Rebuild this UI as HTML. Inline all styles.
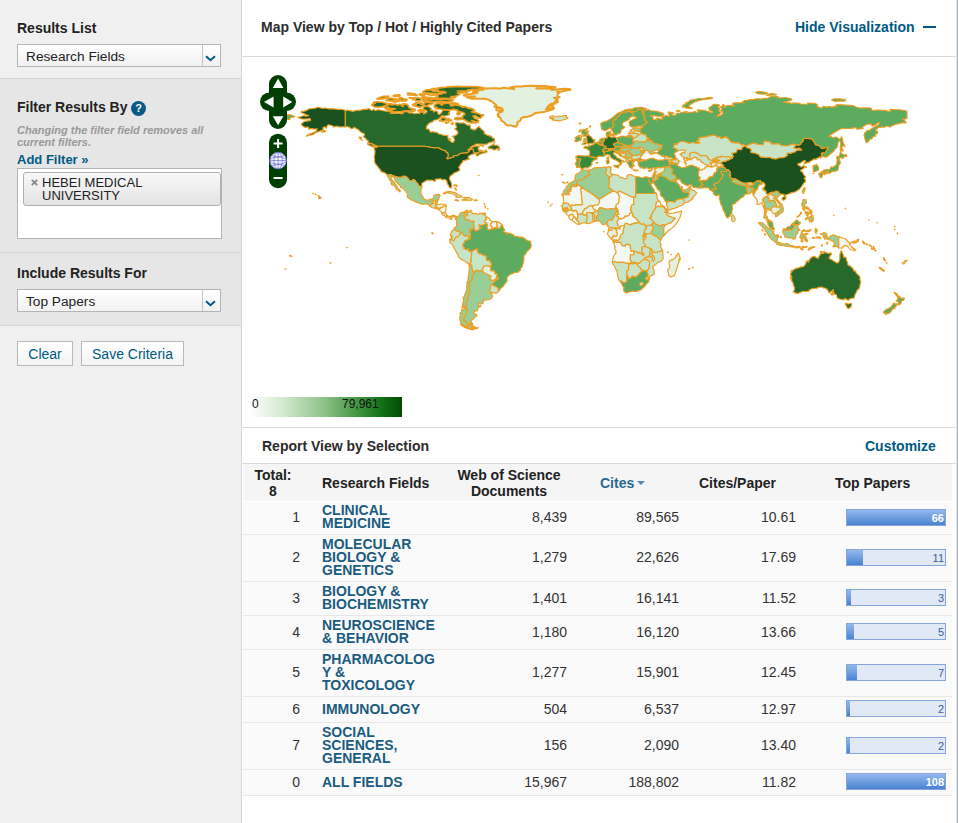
<!DOCTYPE html>
<html><head><meta charset="utf-8"><title>Essential Science Indicators</title>
<style>
*{box-sizing:border-box;margin:0;padding:0}
html,body{width:958px;height:823px;overflow:hidden;background:#fff}
body{font-family:"Liberation Sans",Arial,sans-serif;font-size:13px;color:#222;position:relative}
.abs{position:absolute}
#side{left:0;top:0;width:242px;height:823px;background:#f0f0f0;border-right:1px solid #d6d6d6}
.sec{position:absolute;left:0;width:241px}
.h{position:absolute;left:17px;font-weight:bold;font-size:14px;color:#222;white-space:nowrap;letter-spacing:0}
.sel{position:absolute;left:17px;width:204px;height:23px;border:1px solid #b4b4b4;background:linear-gradient(#ffffff,#f1f1f1);font-size:13.7px;line-height:23px;padding-left:8px;color:#222}
.sel i{position:absolute;right:0;top:0;width:18px;height:21px;border-left:1px solid #c4c4c4}
.sel svg{position:absolute;right:4px;top:9.5px}
.btn{position:absolute;height:25px;border:1px solid #b9b9b9;background:linear-gradient(#ffffff,#f4f4f4);color:#005a84;font-size:14px;line-height:24.5px;text-align:center}
#main{left:242px;top:0;width:716px;height:823px;background:#fff;border-right:1px solid #a9b0b5;box-shadow:inset -1px 0 0 #e4e7e9}
.t{position:absolute;font-weight:bold;font-size:13px;color:#2c2c2c;white-space:nowrap}
.lnk{color:#005a84}
.hl{position:absolute;left:242px;width:714px;height:1px;background:#dadada}
table{position:absolute;left:243px;top:464px;width:708px;border-collapse:collapse;font-size:13px;color:#333}
th{background:#f5f5f5;font-size:14px;font-weight:bold;color:#222;height:37px;line-height:16px;text-align:center;vertical-align:middle;padding:0}
td{border-bottom:1px solid #e3e3e3;vertical-align:middle;padding:0;font-size:14px}
tr.o td{background:#fafafa}
td.n{text-align:right;padding-right:0}
td.f{font-weight:bold;color:#1a5c80;line-height:13px;font-size:14px;letter-spacing:0.2px}
.bar{position:relative;width:100px;height:17px;background:#e1e7f5;border:1px solid #8aa9db;margin-left:12px}
.bar b{position:absolute;left:0;top:0;height:15px;background:linear-gradient(#8db4ea,#4f86d4)}
.bar span{position:absolute;right:2px;top:2px;font-size:11px;line-height:13px;color:#3b5a8c;font-weight:normal}
.bar span.w{color:#fff;font-weight:bold}
</style></head><body>
<div id="side" class="abs">
  <div class="sec" style="top:78px;height:175px;background:#e6e6e6;border-top:1px solid #d4d4d4;border-bottom:1px solid #d4d4d4"></div>
  <div class="sec" style="top:253px;height:73px;background:#e6e6e6;border-bottom:1px solid #d4d4d4"></div>
  <div class="h" style="top:20px">Results List</div>
  <div class="sel" style="top:44px">Research Fields<i></i><svg width="11" height="7" viewBox="0 0 11 7"><path d="M1 1.2 L5.5 5.2 L10 1.2" fill="none" stroke="#005a84" stroke-width="2"/></svg></div>
  <div class="h" style="top:99px">Filter Results By</div>
  <div class="abs" style="left:131px;top:101px;width:15px;height:15px;border-radius:50%;background:#0a5a87;color:#fff;font-size:11px;font-weight:bold;text-align:center;line-height:15px">?</div>
  <div class="abs" style="left:17px;top:124px;width:200px;font-size:11px;line-height:12px;font-style:italic;color:#999;font-weight:bold">Changing the filter field removes all current filters.</div>
  <div class="h lnk" style="top:152px;color:#005a84;font-size:13px;letter-spacing:0">Add Filter »</div>
  <div class="abs" style="left:17px;top:168px;width:205px;height:71px;background:#fff;border:1px solid #b4b4b4"></div>
  <div class="abs" style="left:23px;top:172px;width:198px;height:34px;border:1px solid #b0b0b0;border-radius:3px;background:linear-gradient(#f8f8f8,#e4e4e4);font-size:13px;line-height:13px;color:#222;padding:3px 0 0 18px">HEBEI MEDICAL UNIVERSITY<svg style="position:absolute;left:7px;top:6px" width="7" height="7" viewBox="0 0 7 7"><path d="M0.8 0.8 L6.2 6.2 M6.2 0.8 L0.8 6.2" stroke="#8a8a8a" stroke-width="1.9" fill="none"/></svg></div>
  <div class="h" style="top:265px">Include Results For</div>
  <div class="sel" style="top:289px">Top Papers<i></i><svg width="11" height="7" viewBox="0 0 11 7"><path d="M1 1.2 L5.5 5.2 L10 1.2" fill="none" stroke="#005a84" stroke-width="2"/></svg></div>
  <div class="btn" style="left:17px;top:341px;width:56px">Clear</div>
  <div class="btn" style="left:81px;top:341px;width:103px">Save Criteria</div>
</div>
<div id="main" class="abs"></div>
<div class="t" style="left:261px;top:19px;font-size:14px">Map View by Top / Hot / Highly Cited Papers</div>
<div class="t lnk" style="left:795px;top:19px;font-size:14px">Hide Visualization</div>
<div class="abs" style="left:923px;top:26px;width:13px;height:2px;background:#005a84"></div>
<div class="hl" style="top:56px"></div>
<svg class="abs" style="left:242px;top:57px" width="714" height="340" viewBox="242 57 714 340"><g stroke="#ec9e22" stroke-width="1.15" stroke-linejoin="round">
<path fill="#5cab5e" d="M646.4,110.3 648.2,109.7 651.1,110.7 655.9,111.1 662.5,113.1 663.9,113.9 664.0,115.1 662.0,116.0 659.2,116.5 651.4,115.2 650.1,115.4 652.9,116.7 653.0,117.5 653.1,119.3 655.4,119.8 656.8,120.3 657.0,119.4 655.9,118.7 657.1,118.0 661.3,119.1 662.8,118.7 661.6,117.4 665.7,115.7 667.3,115.8 668.9,116.4 669.9,115.2 668.5,114.1 669.3,113.1 668.0,112.0 672.9,112.6 673.9,113.5 671.7,113.8 671.7,114.7 673.1,115.3 675.8,115.0 676.2,113.8 679.9,113.0 686.0,111.5 687.3,111.6 685.6,112.6 687.8,112.8 689.0,112.2 692.3,112.2 694.9,111.5 696.9,112.5 698.9,111.4 697.1,110.3 698.0,109.8 703.1,110.3 705.6,110.8 711.9,112.8 713.1,111.9 711.3,111.0 711.2,110.6 709.1,110.5 709.7,109.6 708.8,108.3 708.7,107.7 711.9,106.1 713.1,104.5 714.4,104.2 719.0,104.6 719.4,105.6 717.7,107.0 718.8,107.6 719.4,108.8 719.0,111.2 720.9,112.3 720.2,113.5 716.7,115.9 718.7,116.2 719.4,115.6 721.4,115.1 721.8,114.3 723.3,113.4 722.3,112.4 723.1,111.3 721.2,111.1 720.8,110.1 722.2,108.4 719.9,107.0 723.1,105.8 722.7,104.5 723.5,104.5 724.4,105.5 723.8,107.2 725.6,107.5 724.8,106.2 727.8,105.5 731.4,105.4 734.6,106.4 733.1,105.0 732.9,103.1 735.9,102.8 740.2,102.8 743.9,102.6 742.5,101.7 744.5,100.5 746.6,100.5 750.0,99.6 754.6,99.4 755.2,98.9 759.8,98.8 761.2,99.1 765.1,98.2 768.3,98.2 768.8,97.5 770.5,96.7 774.6,96.0 777.6,96.6 775.2,97.0 779.2,97.3 779.7,98.2 781.3,97.7 786.4,97.8 790.3,98.6 791.7,99.3 791.3,100.2 789.4,100.7 784.8,101.7 783.5,102.2 785.6,102.4 788.2,102.9 789.8,102.5 790.7,103.7 791.4,103.2 794.2,102.9 799.9,103.2 800.3,104.0 807.6,104.3 807.7,103.0 811.4,103.3 814.2,103.3 817.0,104.2 817.8,105.3 816.8,106.0 819.0,107.4 821.8,108.1 823.4,106.3 826.3,107.1 829.2,106.6 832.6,107.1 833.9,106.6 836.8,106.9 835.5,105.3 837.8,104.5 853.6,105.6 855.1,106.7 859.7,108.0 866.8,107.7 870.2,108.0 871.7,108.7 871.5,110.0 873.6,110.5 876.0,110.1 879.1,110.1 882.4,110.4 885.7,110.2 888.8,111.8 890.9,111.2 889.5,110.1 890.3,109.3 895.9,109.8 899.5,109.7 904.5,110.5 907.0,111.3 907.0,118.3 904.7,119.1 902.5,118.9 904.0,119.9 905.1,121.3 905.9,121.8 906.1,122.5 905.7,123.0 902.4,122.6 897.5,123.9 895.9,124.1 893.3,125.3 890.7,126.4 890.1,127.2 887.6,126.0 883.0,127.4 882.2,126.7 880.5,127.5 878.2,127.2 877.6,128.4 875.5,130.1 875.6,130.8 877.6,131.2 877.4,133.7 875.7,133.8 875.0,135.2 875.7,136.0 872.6,136.9 872.0,138.9 869.4,139.3 868.9,141.1 866.4,142.7 865.7,141.5 865.0,139.0 864.0,135.1 864.8,132.7 866.3,131.6 866.4,130.8 869.1,130.4 872.3,128.2 875.3,126.4 878.4,125.0 879.8,122.5 877.7,122.7 876.7,124.1 872.2,126.1 870.8,123.9 866.3,124.5 861.9,127.4 863.3,128.5 859.4,129.0 856.7,129.1 856.8,127.9 854.1,127.6 851.9,128.5 846.6,128.2 840.8,128.7 835.2,132.1 828.5,136.2 831.2,136.4 832.1,137.5 833.8,137.9 834.9,137.1 836.8,137.2 839.4,139.1 839.4,140.6 838.0,142.3 837.9,144.4 837.1,147.2 834.5,149.8 833.9,151.0 831.5,153.0 829.2,155.0 828.0,156.1 825.7,157.1 824.6,157.1 823.5,156.3 821.1,157.5 820.9,158.1 820.6,157.8 820.6,156.9 821.5,156.9 821.8,154.8 821.3,153.3 822.8,152.7 824.9,153.0 826.1,151.3 826.7,149.4 827.4,148.7 828.3,147.2 825.4,147.7 823.9,148.4 821.2,148.4 820.5,146.7 818.5,145.5 815.4,144.9 814.8,143.2 814.1,142.1 813.5,141.4 812.4,139.6 810.9,139.0 808.2,138.4 805.9,138.5 803.8,138.8 802.3,139.7 803.3,140.1 803.3,141.1 800.7,143.5 800.8,144.3 798.3,145.4 796.2,144.7 794.1,144.8 793.2,144.3 792.1,144.1 789.6,145.3 787.3,145.6 785.7,146.0 783.5,145.7 781.8,145.8 780.8,144.9 779.1,144.0 777.3,143.8 775.1,144.0 773.4,144.3 771.0,143.6 770.6,142.3 768.6,141.8 767.0,141.6 765.0,140.9 763.2,142.7 763.9,143.8 762.2,145.0 759.7,144.5 757.9,144.5 756.8,143.7 754.9,143.6 753.4,143.1 750.7,143.9 747.4,145.4 745.6,145.7 744.9,145.9 744.0,144.8 741.7,145.0 741.0,144.3 739.7,144.0 738.9,142.9 737.9,142.6 735.4,143.1 733.0,142.1 732.1,143.0 728.1,138.6 725.9,137.2 726.6,136.6 722.2,138.3 720.5,138.4 720.6,137.4 718.4,136.8 716.6,137.3 716.0,135.5 712.9,135.1 711.3,135.8 706.9,136.4 706.1,136.9 699.5,137.5 698.7,138.1 700.0,139.3 698.3,139.7 698.6,140.2 696.9,141.1 699.8,142.3 699.3,143.1 696.9,143.0 696.4,143.5 694.1,142.6 691.4,142.7 689.5,143.4 687.4,142.7 683.6,141.5 680.8,141.5 677.2,143.4 677.0,144.7 675.2,143.7 673.8,145.6 674.3,146.0 673.3,147.3 674.8,148.5 676.1,148.5 677.2,149.6 677.0,150.5 677.9,150.8 677.1,151.8 675.4,152.1 673.7,153.9 675.3,155.6 675.1,156.8 677.0,158.8 676.0,159.5 675.7,160.0 674.9,159.9 673.7,158.8 673.2,158.7 672.1,158.3 671.6,157.6 669.9,157.3 668.9,157.5 668.6,157.2 666.2,156.4 663.6,156.1 662.1,155.8 661.9,156.0 659.7,154.5 657.7,153.8 656.2,152.8 657.5,152.6 658.9,151.1 657.9,150.4 660.5,149.7 660.5,149.3 658.9,149.6 659.0,148.8 659.8,148.3 661.5,148.2 661.8,147.6 661.4,146.6 662.1,145.7 662.1,145.2 659.5,144.6 658.5,144.6 657.4,143.8 656.1,144.1 653.9,143.5 653.9,143.2 653.3,142.4 651.9,142.3 651.7,141.8 652.2,141.4 651.1,140.4 649.3,140.6 648.7,140.5 648.3,140.9 647.6,140.8 647.2,139.7 646.8,139.1 647.1,139.0 648.5,139.0 649.2,138.6 648.7,138.2 647.5,137.9 647.6,137.6 646.9,137.2 645.8,136.1 646.2,135.6 646.0,134.8 644.3,134.4 643.4,134.6 643.2,134.1 641.3,133.7 640.8,132.7 640.6,131.8 639.8,131.4 640.5,130.9 640.0,129.2 641.2,128.2 641.0,127.9 643.0,126.9 641.1,126.1 644.9,123.9 646.5,122.9 647.2,122.0 644.6,120.8 645.3,119.6 643.7,118.3 644.9,116.8 642.8,114.9 644.5,113.5 641.8,112.4 642.0,111.1 643.5,111.0Z"/>
<path fill="#5cab5e" d="M285.9,114.4 285.7,115.5 286.9,115.9 286.5,114.6 291.2,114.9 294.7,116.5 292.9,117.3 290.1,117.5 290.0,119.2 289.3,119.6 287.7,119.5 286.4,118.9 285.4,118.2 285.1,116.5Z"/>
<path fill="#5cab5e" d="M689.3,106.9 692.6,108.3 691.6,108.5 686.0,108.1 685.5,107.4 682.3,106.9 682.1,106.0 683.9,105.6 683.7,104.6 687.2,103.2 685.6,102.9 689.8,101.5 689.3,100.6 693.3,99.7 699.1,98.5 704.9,98.3 707.9,97.6 711.4,97.4 712.6,98.1 711.4,98.7 705.0,99.5 699.8,100.2 694.4,102.0 691.8,103.7 689.0,105.3Z"/>
<path fill="#5cab5e" d="M766.8,93.9 763.1,94.1 758.2,93.8 756.5,93.0 755.6,92.2 758.2,91.5 762.6,91.7 767.4,92.7Z"/>
<path fill="#5cab5e" d="M775.9,95.0 766.6,95.5 769.3,93.8 771.9,93.6 776.5,94.3Z"/>
<path fill="#5cab5e" d="M834.9,98.8 839.6,98.8 845.9,99.7 844.5,101.1 838.0,101.0 835.2,101.5 831.7,100.2 832.6,99.2Z"/>
<path fill="#5cab5e" d="M843.4,143.2 845.1,146.3 842.5,145.7 841.5,148.2 843.2,150.0 843.1,151.3 841.8,150.2 840.7,151.6 840.3,150.1 840.5,148.4 840.3,146.5 840.7,145.2 840.8,142.8 839.8,141.1 839.9,138.7 841.6,137.9 840.9,137.1 841.6,136.9 842.1,138.0 842.7,139.7 842.7,141.4Z"/>
<path fill="#5cab5e" d="M676.5,110.7 678.6,110.4 680.0,111.1 678.3,111.8 676.7,111.4Z"/>
<path fill="#27692a" d="M345.2,110.2 348.8,110.4 353.1,111.4 356.6,110.2 359.4,110.4 364.8,109.1 367.3,109.5 367.8,108.6 369.0,108.8 371.9,110.4 374.3,109.1 374.5,110.5 376.6,110.2 377.3,109.7 379.4,109.9 382.2,110.5 386.2,111.2 388.6,111.6 390.4,111.4 392.7,112.3 390.2,113.2 393.4,113.5 398.1,113.4 399.7,113.0 401.4,114.0 403.4,113.2 401.6,112.5 402.6,111.8 404.9,111.8 406.1,111.6 407.7,112.0 409.5,113.0 411.4,112.8 414.4,113.7 417.2,113.4 419.8,113.4 419.5,112.3 421.0,112.0 423.8,112.6 423.8,114.2 424.9,112.8 426.3,112.8 427.1,111.1 425.2,110.0 423.1,109.3 423.3,107.4 425.4,106.2 427.7,106.4 429.4,107.2 431.9,109.1 430.3,110.0 433.6,110.4 433.5,112.1 435.9,110.7 438.0,112.0 437.5,113.2 439.0,114.4 441.0,113.2 442.2,111.6 442.4,109.7 444.8,109.9 447.5,110.0 449.7,110.9 449.9,111.8 448.5,112.8 449.7,113.7 449.5,114.6 446.2,115.8 443.8,116.0 441.9,115.5 441.3,116.3 439.8,117.9 439.2,118.6 437.1,119.8 434.7,120.0 433.3,120.7 433.1,121.8 431.2,122.1 428.9,123.5 427.1,125.4 426.5,126.8 426.3,128.9 428.9,129.1 429.6,130.9 430.5,132.1 432.9,131.7 436.2,132.4 438.0,133.1 439.2,134.0 441.3,134.5 443.2,135.2 446.0,135.4 448.0,135.6 447.8,137.0 448.3,138.7 449.5,140.6 452.2,142.4 453.6,141.9 454.5,139.9 453.6,137.3 452.4,136.3 455.1,135.6 457.1,134.4 458.1,133.1 458.0,131.9 456.7,130.3 454.6,129.1 456.7,127.2 455.9,125.6 455.3,123.0 456.5,122.5 459.5,123.0 461.3,123.1 462.9,122.8 464.4,123.3 466.5,124.4 467.0,125.1 470.2,125.1 470.2,126.6 470.7,128.8 472.3,129.1 473.7,130.1 476.1,129.1 477.9,127.2 479.0,126.5 480.4,128.1 482.6,130.1 484.6,132.2 483.9,133.5 486.1,134.4 487.7,135.4 491.7,136.4 492.2,137.9 493.6,138.2 494.4,138.7 494.5,140.8 493.3,141.4 492.1,142.1 489.1,142.6 487.0,144.1 484.0,144.3 480.2,144.0 477.5,144.0 475.8,144.1 474.4,145.4 472.1,146.1 469.5,148.5 467.6,150.1 469.0,149.8 471.8,147.5 475.5,146.1 478.1,145.9 479.6,146.8 478.1,147.8 478.6,149.8 479.1,151.1 481.4,152.0 484.4,151.7 486.1,149.8 486.3,151.0 487.4,151.7 485.2,152.7 481.2,153.8 479.6,154.5 477.5,155.9 476.3,155.7 476.1,154.1 479.3,152.7 476.5,152.7 474.6,153.1 473.4,152.0 473.4,149.6 470.9,149.1 469.5,150.4 469.0,151.7 467.0,152.9 461.3,153.2 458.5,154.6 457.6,155.7 454.3,155.7 453.4,156.1 453.8,156.9 451.6,157.8 449.7,158.1 447.6,159.0 446.6,158.3 447.8,156.8 448.3,155.7 447.6,152.7 445.7,151.9 445.9,151.3 444.8,150.6 443.6,150.4 440.6,148.9 437.3,147.5 435.7,148.0 433.1,147.6 431.0,147.5 429.2,146.9 426.5,146.8 425.4,146.2 376.8,146.2 376.4,145.7 373.4,144.5 372.2,143.8 369.0,143.1 368.0,141.5 368.2,140.5 366.1,139.6 365.7,138.2 363.6,137.0 363.6,136.1 364.5,135.2 364.3,133.8 361.0,132.2 358.5,129.8 355.8,128.2 354.9,127.4 351.4,128.8 348.8,127.0 345.2,126.5Z"/>
<path fill="#1b511e" d="M373.8,147.3 374.8,150.3 375.0,151.1 374.8,153.9 374.1,157.1 374.6,158.7 374.5,161.5 375.4,163.8 376.9,165.5 377.6,166.4 378.7,167.9 380.8,170.4 381.0,171.6 383.4,172.3 384.8,172.9 386.7,174.2 387.1,175.1 391.3,174.8 391.1,175.1 397.8,177.2 402.6,177.2 402.6,176.3 405.6,176.3 408.2,178.4 409.1,180.2 411.6,181.2 412.8,179.8 414.5,179.8 416.5,182.5 417.9,183.9 418.6,185.8 421.5,186.7 421.9,184.8 421.9,183.3 424.0,181.9 426.3,180.6 427.9,180.0 430.1,180.4 431.7,180.0 434.1,181.1 435.5,181.2 435.5,180.4 435.2,179.2 438.0,179.0 440.6,178.8 442.7,180.0 445.0,179.3 446.9,181.1 447.3,183.5 448.5,185.4 449.0,186.7 450.1,187.9 451.3,187.9 451.8,185.1 451.0,182.1 449.7,179.5 449.4,178.3 450.2,176.0 452.2,174.8 453.9,173.0 455.7,172.5 458.1,171.3 459.9,170.2 459.2,168.1 458.5,167.2 459.2,166.9 460.4,164.8 460.9,163.8 462.5,162.5 462.5,161.1 465.6,160.1 467.6,159.4 469.5,159.0 468.5,158.0 468.1,156.9 469.1,155.7 471.4,154.5 474.8,153.6 474.6,153.1 473.4,152.0 473.4,149.6 470.9,149.1 469.5,150.4 469.0,151.7 467.0,152.9 461.3,153.2 458.5,154.6 457.6,155.7 454.3,155.7 453.4,156.1 453.8,156.9 451.6,157.8 449.7,158.1 447.6,159.0 446.6,158.3 447.8,156.8 448.3,155.7 447.6,152.7 445.7,151.9 445.9,151.3 444.8,150.6 443.6,150.4 440.6,148.9 437.3,147.5 435.7,148.0 433.1,147.6 431.0,147.5 429.2,146.9 426.5,146.8 425.4,146.2 376.8,146.2 377.1,147.5Z"/>
<path fill="#1b511e" d="M345.2,110.2 340.9,109.3 337.0,109.3 333.0,108.8 328.3,108.8 325.7,108.1 322.0,108.3 317.9,107.2 315.5,108.1 310.4,108.8 308.5,109.1 306.8,110.4 303.4,111.4 301.2,111.4 301.2,112.6 304.3,113.7 305.5,114.6 308.7,115.6 305.5,116.3 304.1,115.5 300.8,116.7 297.8,117.2 300.6,118.8 303.8,119.1 307.1,119.0 310.2,118.6 310.6,120.4 308.0,120.9 305.3,121.4 303.9,121.6 303.2,122.6 302.0,123.3 301.3,124.4 302.7,126.1 305.3,127.4 307.6,127.0 308.7,127.7 308.5,129.3 311.3,128.6 314.6,129.1 317.2,128.9 316.2,131.2 314.6,131.9 312.0,133.3 308.8,134.2 306.6,135.8 306.2,136.1 309.9,135.1 312.7,134.7 315.3,133.1 318.5,131.6 320.2,131.0 322.2,130.3 323.7,128.9 322.5,128.1 324.9,126.8 326.5,128.4 327.1,125.8 328.4,124.7 332.7,125.8 333.0,127.0 336.5,126.1 340.0,127.0 342.5,126.8 345.2,127.0 345.2,126.5Z"/>
<path fill="#1b511e" d="M321.3,131.7 324.2,132.1 325.8,131.2 324.4,130.5 322.7,130.9Z"/>
<path fill="#27692a" d="M375.9,147.1 372.0,146.6 369.9,145.4 367.8,144.5 367.3,143.1 369.2,143.4 371.9,144.0 373.4,145.4 375.2,146.1Z"/>
<path fill="#27692a" d="M362.4,140.6 359.8,138.6 359.1,137.1 361.3,137.3 361.0,139.2Z"/>
<path fill="#27692a" d="M493.8,143.3 494.9,141.7 494.4,142.2 492.6,144.9 489.8,146.1 488.4,147.1 488.1,148.2 488.8,148.7 491.7,148.7 494.2,149.9 495.2,149.9 497.1,148.4 498.4,150.4 499.1,150.3 498.4,148.7 499.9,148.9 499.1,146.8 498.4,145.9 496.6,145.2 494.4,145.2 493.8,144.1Z"/>
<path fill="#27692a" d="M480.0,149.8 480.5,150.4 481.9,150.8 483.5,150.8 482.6,151.5 481.1,151.5 479.3,150.3Z"/>
<path fill="#27692a" d="M479.1,144.7 481.9,145.0 483.9,145.7 483.0,146.1 480.7,145.6Z"/>
<path fill="#e2f1e0" d="M516.0,126.8 513.2,126.0 511.0,125.4 507.5,125.4 505.9,124.5 504.7,122.8 501.7,120.7 500.8,119.5 500.5,117.9 498.0,116.3 498.7,115.1 497.5,114.4 499.2,112.3 501.9,111.8 502.6,111.1 502.9,109.7 501.0,110.2 499.9,110.5 498.4,110.7 496.3,110.2 496.2,109.0 496.8,108.1 498.6,108.1 502.1,108.5 499.1,107.4 497.5,106.9 495.8,107.0 494.4,106.5 496.3,105.0 495.2,104.2 493.8,103.2 491.7,101.3 489.4,100.6 489.4,99.9 484.7,98.8 481.1,98.7 476.3,98.8 472.1,98.8 470.0,98.3 467.0,97.2 471.6,96.7 475.1,96.5 467.8,96.2 463.7,95.5 463.9,94.8 470.5,93.9 477.0,93.0 477.7,92.3 473.0,91.8 474.4,91.1 480.5,89.9 483.1,89.7 482.3,88.8 486.5,88.5 491.9,88.2 497.3,88.2 499.2,88.7 503.8,87.8 508.0,88.3 510.4,88.5 514.1,89.0 509.9,88.2 510.1,87.5 516.0,86.4 522.2,86.4 524.5,85.9 530.6,85.7 544.6,85.9 555.6,87.3 552.3,88.0 545.6,88.0 536.2,88.2 537.0,88.5 543.2,88.3 548.6,88.8 551.9,88.3 553.3,89.0 551.4,89.9 556.0,89.4 564.4,88.7 569.6,89.0 570.6,89.7 563.5,91.0 562.5,91.4 557.0,91.7 561.0,91.8 558.9,93.0 557.5,94.2 557.5,96.2 559.6,97.2 557.0,97.4 554.0,98.0 557.4,98.8 557.7,100.4 555.8,100.4 558.0,102.0 554.2,102.2 556.3,102.8 555.6,103.4 553.1,103.7 550.7,103.7 553.0,105.0 553.0,105.6 549.5,105.0 548.6,105.5 551.0,105.8 553.3,106.9 553.9,108.3 550.9,108.6 549.5,107.9 547.4,107.0 547.9,108.2 545.8,109.1 550.5,109.1 553.0,109.3 548.2,110.7 543.5,112.1 538.3,112.8 536.4,112.8 534.6,113.5 532.1,115.3 528.4,116.5 527.2,116.7 524.8,117.0 522.4,117.4 520.8,118.6 520.8,119.8 519.9,120.9 517.1,122.3 517.8,123.7 516.9,125.1Z" stroke-width="2.0"/>
<path fill="#27692a" d="M483.7,114.9 480.2,118.2 478.1,117.5 475.3,115.8 473.0,116.0 474.6,118.1 477.0,119.0 478.8,121.0 478.2,122.3 476.0,121.9 471.6,120.5 476.0,123.0 471.4,123.0 467.8,121.9 465.6,121.0 466.2,120.5 461.1,118.8 461.1,119.3 456.0,119.6 454.5,119.0 455.7,117.7 459.0,117.7 462.5,117.4 462.0,116.9 462.7,116.0 464.8,114.2 464.4,113.5 463.7,112.8 461.1,112.0 457.4,111.4 458.6,111.1 456.7,109.9 455.1,109.9 453.8,109.1 452.9,109.7 449.7,110.0 443.4,109.5 439.6,109.0 436.8,108.8 435.4,108.1 437.1,107.4 434.7,107.4 434.1,105.6 435.5,104.1 437.3,103.4 441.9,102.8 440.5,103.9 441.9,105.1 443.4,103.7 448.0,102.8 451.0,104.8 450.8,105.8 454.1,105.3 455.9,104.8 459.7,105.6 462.1,106.4 462.3,107.2 465.6,106.7 467.4,107.9 471.6,108.6 473.2,109.3 474.8,110.9 471.6,111.8 475.8,112.8 478.4,113.4 481.1,114.9Z" stroke-width="1.7"/>
<path fill="#27692a" d="M407.4,111.1 412.8,111.6 415.1,110.2 412.3,110.4 413.3,111.1 412.8,111.6 409.6,111.4 406.6,110.9 404.6,111.1 401.2,111.6 393.7,112.1 392.7,111.2 390.4,110.7 388.8,110.9 386.7,109.5 387.8,109.3 390.6,109.1 393.0,109.1 395.3,108.8 391.8,108.5 388.1,108.6 385.7,108.6 384.8,107.9 388.8,107.2 386.0,107.2 383.0,106.7 384.5,105.5 385.7,104.8 390.4,103.7 392.1,104.1 391.3,104.8 395.3,104.2 397.6,105.1 399.7,104.2 401.2,105.0 402.6,106.5 403.5,105.8 402.3,104.1 403.9,103.9 405.6,104.1 407.5,104.8 408.6,106.5 409.1,107.8 412.1,108.6 415.2,109.5 415.1,110.2 412.3,110.4Z" stroke-width="1.7"/>
<path fill="#27692a" d="M373.2,106.0 375.7,107.2 381.1,107.0 383.4,106.2 389.9,104.1 387.6,103.9 383.4,102.5 381.1,102.0 379.4,101.8 373.6,102.0 373.4,103.0 375.2,103.0 371.7,104.8Z" stroke-width="1.7"/>
<path fill="#27692a" d="M434.5,98.3 438.4,98.3 443.2,98.3 448.5,98.5 455.5,97.4 451.0,96.7 454.8,96.4 458.5,95.2 460.0,93.4 457.4,93.2 463.9,92.7 467.4,92.3 462.7,91.1 457.4,91.0 470.4,91.0 467.4,90.2 473.0,89.4 477.4,89.4 473.4,90.4 479.5,88.7 483.7,87.5 483.1,87.8 478.8,86.9 472.1,86.6 462.9,86.6 457.2,86.4 453.2,86.6 447.8,86.9 444.5,87.5 439.8,88.0 442.4,87.4 436.2,88.3 431.7,88.7 434.3,89.2 438.4,90.2 435.5,91.1 439.8,91.5 444.6,91.7 446.0,92.7 439.9,93.2 441.9,93.8 439.4,93.8 436.2,95.0 438.1,95.7 437.5,96.9 435.2,97.3Z" stroke-width="1.7"/>
<path fill="#27692a" d="M423.1,92.5 425.2,93.8 429.4,95.0 436.2,95.0 439.4,93.8 433.1,95.2 429.4,95.0 427.7,93.6 429.1,93.0 425.8,93.0 423.8,92.5 422.8,91.7 424.0,91.0 425.2,90.4 427.0,90.2 426.3,89.9 430.3,89.7 432.6,90.8 435.4,91.1 438.4,91.5 439.8,92.5 441.9,93.2 439.4,93.8Z" stroke-width="1.7"/>
<path fill="#27692a" d="M424.0,100.0 425.9,99.7 427.5,100.2 428.2,100.8 430.3,101.1 433.6,101.5 437.6,101.8 443.6,101.8 448.1,101.6 451.1,101.3 452.4,100.9 451.1,100.2 453.4,99.9 450.1,99.5 447.1,99.3 443.6,99.5 440.8,99.9 437.6,99.7 435.9,99.7 434.9,99.0 431.7,97.6 427.7,97.6 424.0,98.3 422.1,97.6 422.8,96.9 426.3,97.1 428.2,97.6 431.7,97.6 434.9,99.0 431.0,99.2 427.7,98.5 424.1,98.3 422.1,98.7 422.8,99.2Z" stroke-width="1.7"/>
<path fill="#27692a" d="M386.0,100.4 388.5,98.7 390.0,98.1 395.0,98.8 398.1,99.9 401.1,99.9 398.6,98.3 400.2,97.6 402.1,97.8 402.6,98.7 403.4,99.3 404.9,99.0 406.7,99.0 407.0,99.9 406.0,100.8 400.0,100.9 395.6,101.8 393.0,101.8 392.7,101.3 396.4,100.4 388.5,100.8Z" stroke-width="1.7"/>
<path fill="#27692a" d="M376.9,98.8 379.9,97.4 383.6,96.4 386.2,96.4 388.6,96.2 388.5,97.4 387.1,98.1 385.5,98.1 382.2,98.8 379.4,99.2Z" stroke-width="1.7"/>
<path fill="#27692a" d="M409.1,97.8 419.5,98.0 421.0,98.5 421.0,99.5 420.1,100.8 417.4,100.9 415.4,100.6 415.4,99.7 412.6,99.7 412.5,98.5 409.1,97.8Z" stroke-width="1.7"/>
<path fill="#27692a" d="M416.3,102.8 418.4,103.2 421.5,102.8 422.1,103.4 420.3,104.2 423.1,105.0 422.8,106.5 419.8,107.2 418.2,107.0 417.0,106.5 412.6,105.1 412.6,104.6 416.3,104.8 414.4,103.5Z" stroke-width="1.7"/>
<path fill="#27692a" d="M428.9,104.6 427.0,106.0 425.0,105.8 424.0,104.4 424.0,103.5 424.9,102.7 426.6,102.3 430.3,102.3 433.6,102.7 431.0,104.3Z" stroke-width="1.7"/>
<path fill="#27692a" d="M419.5,110.0 420.1,109.3 421.9,109.7 423.0,110.0 424.7,111.1 423.5,111.6 421.2,111.1 419.8,111.2 417.4,110.5Z" stroke-width="1.7"/>
<path fill="#27692a" d="M442.9,117.0 443.3,117.9 444.1,117.5 445.2,118.1 447.1,118.6 449.2,119.1 449.2,120.0 450.6,119.8 451.8,120.5 450.2,121.0 447.6,120.5 446.6,119.8 444.8,120.7 442.4,121.6 441.7,120.7 439.4,120.9 440.8,120.0 441.1,118.6 441.7,117.0Z" stroke-width="1.7"/>
<path fill="#27692a" d="M407.4,93.2 410.9,93.4 415.6,94.1 416.8,95.0 417.5,95.7 414.7,95.5 411.9,95.0 407.9,94.8 409.6,94.3 407.5,93.9Z" stroke-width="1.7"/>
<path fill="#27692a" d="M419.5,94.6 419.5,93.9 421.7,94.1 422.6,94.1 424.7,94.8 424.4,95.3 421.7,95.7 420.3,95.3Z" stroke-width="1.7"/>
<path fill="#27692a" d="M422.6,100.8 425.9,99.7 428.2,100.8 427.1,101.5 424.7,101.3Z" stroke-width="1.7"/>
<path fill="#27692a" d="M393.4,95.5 399.5,94.8 400.0,95.7 395.8,96.5 393.4,96.0Z" stroke-width="1.7"/>
<path fill="#27692a" d="M397.2,95.2 399.7,95.5 399.1,96.0 395.8,96.5 393.4,96.0 394.8,95.3Z" stroke-width="1.7"/>
<path fill="#27692a" d="M450.4,103.7 451.3,102.8 455.3,103.0 458.5,104.1 458.5,104.6 456.7,104.4 454.8,104.4 452.9,104.8 452.4,104.6Z" stroke-width="1.7"/>
<path fill="#27692a" d="M446.8,123.1 448.7,121.9 448.7,122.3 446.6,123.1 445.4,123.1 446.2,121.9Z" stroke-width="1.7"/>
<path fill="#27692a" d="M448.7,138.9 450.6,139.8 449.5,138.9Z" stroke-width="1.7"/>
<path fill="#27692a" d="M457.4,114.6 459.2,114.6 460.4,114.0 459.2,112.5 457.4,112.8 456.9,113.7Z" stroke-width="1.7"/>
<path fill="#27692a" d="M452.2,122.8 452.9,122.8 453.2,123.1 452.5,124.2 451.8,124.0 451.3,123.5Z" stroke-width="1.7"/>
<path fill="#c7e4c6" d="M566.6,115.6 566.3,116.9 568.2,118.1 565.9,119.3 560.9,120.5 559.3,120.9 552.1,120.0 553.9,119.3 550.0,118.4 553.1,118.1 553.1,117.5 549.5,117.2 550.5,116.0 553.3,115.8 556.0,117.0 558.6,116.0 560.9,116.5 563.6,115.6Z"/>
<path fill="#99cf97" d="M387.1,175.1 387.8,176.7 389.0,178.1 389.5,180.0 391.5,181.8 392.1,182.8 390.8,183.3 391.6,184.6 393.4,185.1 394.6,186.0 395.6,187.4 396.0,188.8 397.9,190.0 399.1,191.4 399.7,191.9 400.5,191.1 399.1,189.5 398.3,188.6 397.2,187.0 396.7,185.3 394.6,183.3 394.6,182.1 393.2,181.1 392.1,179.8 391.3,179.2 391.1,176.3 394.1,177.4 395.5,180.7 397.4,183.2 399.9,185.3 400.7,187.2 403.0,188.4 404.9,190.3 406.5,192.1 407.7,195.1 407.4,196.1 407.0,196.3 407.5,197.2 410.0,198.9 410.9,200.0 413.7,200.7 415.6,201.9 417.5,202.8 418.9,202.9 421.7,204.2 423.8,204.3 426.3,203.7 428.5,204.7 430.6,206.6 430.6,205.2 431.5,203.8 433.6,203.8 433.8,203.3 431.9,201.7 432.8,201.7 432.8,200.8 434.3,200.8 436.1,200.8 436.1,200.5 437.5,199.6 438.4,200.0 439.0,197.9 440.1,195.6 439.6,194.4 437.1,194.4 434.0,195.2 433.6,197.2 433.1,198.2 432.0,198.9 429.6,199.6 426.8,200.3 424.2,199.1 423.1,197.2 421.9,195.9 420.9,192.8 421.0,189.5 422.1,186.7 421.5,186.7 418.6,185.8 417.9,183.9 416.5,182.5 414.5,179.8 412.8,179.8 411.6,181.2 409.1,180.2 408.2,178.4 405.6,176.3 402.6,176.3 402.6,177.2 397.8,177.2 391.1,175.1 391.3,174.8Z"/>
<path fill="#c7e4c6" d="M430.6,206.6 430.6,205.2 431.5,203.8 433.6,203.8 433.8,203.3 431.9,201.7 432.8,201.7 432.8,200.8 436.1,200.8 435.9,204.2 436.4,204.2 437.6,204.5 435.9,205.6 435.9,206.3 435.5,206.8 434.3,208.0 432.4,207.7Z"/>
<path fill="#c7e4c6" d="M436.1,200.8 436.1,200.5 437.5,199.6 437.8,200.3 437.5,201.2 437.6,202.2 436.4,204.2 435.9,204.2Z"/>
<path fill="#c7e4c6" d="M434.3,208.0 435.5,206.8 435.9,206.3 437.1,207.5 438.5,207.8 438.2,209.0 437.1,208.9 435.7,208.4Z"/>
<path fill="#e2f1e0" d="M437.6,204.5 439.9,204.3 441.5,204.0 442.5,204.2 444.3,204.3 446.0,205.2 446.5,205.8 445.9,205.8 444.3,206.3 443.4,206.1 443.1,206.5 441.9,207.8 441.3,207.5 440.1,207.8 440.3,208.7 439.2,209.2 438.9,208.7 438.4,208.6 438.5,207.8 437.1,207.5 435.9,206.3 435.9,205.6Z"/>
<path fill="#f4f8f3" d="M438.5,209.4 439.2,209.2 440.3,208.7 440.1,207.8 441.3,207.5 441.9,207.8 443.1,206.5 443.4,206.1 444.3,206.3 445.9,205.8 446.5,205.8 445.9,208.2 445.9,210.3 445.5,211.7 445.6,212.9 443.8,212.6 442.0,212.6 440.6,211.3 439.4,210.1Z"/>
<path fill="#c7e4c6" d="M442.0,212.6 443.8,212.6 445.6,212.9 446.8,215.4 446.9,216.1 446.8,217.7 445.5,216.8 444.0,215.2 443.1,215.2 442.0,214.7 441.9,213.8Z"/>
<path fill="#c7e4c6" d="M446.8,215.4 448.1,215.9 449.5,216.6 451.3,216.1 452.7,215.2 454.6,215.6 456.5,216.8 456.4,217.1 456.9,218.2 455.7,219.4 455.1,217.5 454.5,216.8 453.6,216.2 452.4,216.9 451.1,217.8 452.0,218.9 450.4,219.4 449.0,217.8 447.1,217.5 446.8,217.7 446.9,216.1Z"/>
<path fill="#c7e4c6" d="M443.4,193.7 445.0,192.3 446.8,191.8 448.0,191.4 449.5,191.6 451.0,191.6 452.5,192.1 455.0,192.6 457.1,194.0 458.6,194.9 459.7,195.2 460.9,195.8 462.1,196.5 462.0,196.9 459.7,197.2 455.9,197.2 457.1,196.3 456.4,195.8 455.3,195.8 454.3,194.2 453.2,194.2 451.6,193.8 448.9,193.2 448.1,192.8 448.9,192.4 447.1,192.3 445.9,193.2 445.0,193.7 444.1,193.8Z"/>
<path fill="#f4f8f3" d="M461.6,200.0 463.4,200.2 464.8,200.3 466.5,200.5 466.5,199.1 466.5,197.5 464.6,197.2 463.5,197.5 464.6,198.6 465.5,199.3 463.5,199.6Z"/>
<path fill="#c7e4c6" d="M466.5,200.5 467.8,200.0 469.5,200.2 471.8,200.2 472.5,199.4 470.9,198.8 469.6,197.6 468.1,197.2 466.5,197.5 466.5,199.1Z"/>
<path fill="#f4f8f3" d="M455.0,200.2 455.9,199.6 457.4,199.8 458.6,200.7 456.9,201.0Z"/>
<path fill="#f4f8f3" d="M474.4,199.8 477.2,200.0 477.2,200.5 474.4,200.7Z"/>
<path fill="#f4f8f3" d="M455.1,187.9 455.7,187.9 456.4,189.5 456.4,190.3 455.5,189.5 454.8,188.9Z"/>
<path fill="#f4f8f3" d="M455.9,185.4 453.9,185.8 453.8,185.1 454.6,184.9 455.7,185.1Z"/>
<path fill="#f4f8f3" d="M457.2,185.4 456.9,186.7 456.5,186.5 456.7,185.6 455.9,184.9 455.9,184.8Z"/>
<path fill="#f4f8f3" d="M484.0,213.1 485.4,213.1 485.2,214.3 483.7,214.3Z"/>
<path fill="#5cab5e" d="M498.6,291.1 498.1,290.1 498.9,289.2 497.9,288.1 496.4,287.1 494.7,286.0 494.1,286.1 492.3,284.7 491.2,284.9 493.5,282.5 495.4,280.8 498.1,279.1 498.2,277.7 497.3,276.7 496.4,277.0 496.8,276.1 497.0,275.1 497.0,274.0 496.4,273.6 495.8,274.0 495.1,273.9 494.9,273.3 494.7,271.7 494.4,271.2 493.1,270.7 492.4,271.0 490.7,270.7 490.7,268.2 490.1,267.4 490.8,266.9 490.6,265.9 491.1,265.2 491.4,263.9 491.0,262.7 490.0,262.3 489.8,261.6 490.1,260.5 486.6,260.5 486.1,258.4 486.6,258.4 486.5,257.6 486.1,256.1 485.1,255.6 484.0,255.6 483.3,255.1 482.1,254.8 481.4,254.1 479.5,253.9 477.5,252.3 477.7,251.1 477.5,249.1 475.4,249.3 474.4,250.0 472.9,250.7 472.5,251.2 471.6,251.3 470.4,251.2 469.3,251.4 468.5,251.2 468.6,248.6 467.2,249.7 465.6,249.6 465.0,248.6 463.9,248.6 464.2,247.8 463.2,246.7 462.5,245.1 463.0,244.8 463.0,244.1 464.1,243.6 463.9,242.7 464.3,242.0 464.4,241.3 466.4,240.1 467.9,239.7 468.1,239.4 469.7,239.5 470.5,234.7 470.5,233.9 470.2,233.0 469.5,232.3 469.5,231.1 470.5,230.8 470.8,230.9 470.9,230.3 469.9,230.1 469.9,229.0 473.2,229.0 473.9,228.5 474.2,229.0 474.6,230.0 474.9,229.8 476.0,230.8 477.4,230.6 477.6,230.1 479.6,229.4 479.8,228.7 481.1,228.2 481.1,227.8 479.5,227.6 479.3,226.6 479.3,225.3 478.6,224.9 479.0,224.7 480.2,225.0 481.6,225.3 482.1,225.0 483.3,224.7 485.2,224.1 485.9,223.4 485.8,222.9 486.6,222.8 487.0,223.2 486.8,224.0 487.4,224.3 487.9,225.1 487.4,225.7 487.1,227.2 487.5,228.1 487.6,228.8 488.8,229.7 489.6,229.8 489.8,229.4 490.3,229.4 491.0,229.0 491.7,228.6 492.6,228.7 493.1,228.7 494.0,228.8 494.2,228.5 493.9,228.2 494.1,227.6 494.8,227.8 495.6,227.6 496.6,228.0 497.3,228.3 497.9,227.8 498.3,228.0 498.6,228.4 499.4,228.3 500.0,227.6 500.6,226.4 501.6,224.7 502.2,224.7 502.6,225.6 503.6,228.7 504.6,229.0 504.6,230.2 503.3,231.7 503.8,232.1 506.9,232.4 506.9,234.2 508.4,233.0 510.4,233.6 513.4,234.7 514.3,235.7 514.0,236.7 516.0,236.2 519.4,237.1 522.0,237.0 524.6,238.5 526.9,240.4 528.2,240.9 529.7,241.0 530.4,241.6 530.9,243.7 531.3,244.8 530.6,247.8 529.7,248.9 527.2,251.3 526.0,253.3 524.8,254.8 524.3,254.9 523.8,256.1 523.9,259.5 523.2,263.3 522.7,264.0 522.4,266.3 520.6,268.6 520.4,270.3 518.9,271.2 518.5,272.2 516.6,272.2 513.9,272.9 512.6,273.6 510.6,274.2 508.6,275.6 507.1,277.3 506.9,278.6 507.1,279.6 506.8,281.4 506.4,282.2 505.2,283.1 503.3,286.2 501.7,287.6 500.5,288.4 499.8,290.1Z"/>
<path fill="#99cf97" d="M456.5,216.8 457.6,216.9 458.8,215.7 459.5,215.6 459.9,213.4 460.9,212.6 462.1,212.2 463.5,212.4 465.6,211.1 466.4,210.3 467.0,210.3 467.6,210.8 467.2,211.3 465.6,212.6 464.4,213.6 464.2,215.0 463.7,216.0 464.6,216.1 464.8,216.9 465.3,217.3 465.3,219.1 466.1,219.8 468.3,219.6 469.3,219.8 470.5,221.3 473.5,221.0 474.2,221.3 473.9,222.2 473.5,222.9 473.4,224.1 473.7,225.3 474.2,226.2 473.4,227.1 474.0,227.4 474.4,228.1 474.9,229.8 474.6,230.0 474.2,229.0 473.9,228.5 473.2,229.0 469.9,229.0 469.9,230.1 470.9,230.3 470.8,230.9 470.5,230.8 469.5,231.1 469.5,232.3 470.2,233.0 470.5,233.9 470.5,234.7 469.7,239.5 468.8,238.7 468.3,238.5 469.4,236.7 468.1,236.0 467.0,236.0 466.4,235.8 465.5,236.2 464.1,236.0 463.0,234.2 462.3,233.8 461.8,232.9 460.6,232.1 460.0,232.3 459.4,231.9 458.5,231.3 458.0,231.5 456.5,231.3 456.0,230.6 455.7,230.6 453.9,229.6 453.8,229.0 454.5,228.8 454.3,228.0 454.8,227.4 455.7,227.3 456.4,226.2 457.1,225.3 456.4,224.8 456.7,223.8 456.4,222.2 456.7,221.8 456.4,220.3 455.7,219.4 456.9,218.2 456.4,217.1Z"/>
<path fill="#c7e4c6" d="M467.2,211.3 466.1,212.1 466.7,212.8 466.7,213.8 465.8,214.7 466.5,216.1 467.2,216.1 467.8,214.7 467.0,214.2 467.0,212.8 469.1,212.1 469.0,211.3 469.7,210.7 470.2,211.9 471.4,212.1 472.6,212.9 472.6,213.5 474.2,213.6 476.1,213.4 477.0,214.2 478.4,214.3 479.5,213.8 479.5,213.4 483.7,213.3 482.3,213.8 482.8,214.7 484.2,214.7 485.6,215.6 485.8,216.9 486.7,216.9 487.4,217.3 486.0,218.3 485.9,219.1 486.5,219.8 486.1,220.0 485.0,220.3 485.0,221.2 484.6,221.6 485.8,222.9 485.9,223.4 485.2,224.1 483.3,224.7 482.1,225.0 481.6,225.3 480.2,225.0 479.0,224.7 478.6,224.9 479.3,225.3 479.3,226.6 479.5,227.6 481.1,227.8 481.1,228.2 479.8,228.7 479.6,229.4 477.6,230.1 477.4,230.6 476.0,230.8 474.9,229.8 474.4,228.1 474.0,227.4 473.4,227.1 474.2,226.2 473.7,225.3 473.4,224.1 473.5,222.9 473.9,222.2 474.2,221.3 473.5,221.0 470.5,221.3 469.3,219.8 468.3,219.6 466.1,219.8 465.3,219.1 465.3,217.3 464.8,216.9 464.6,216.1 463.7,216.0 464.2,215.0 464.4,213.6 465.6,212.6Z"/>
<path fill="#99cf97" d="M478.3,270.6 479.3,271.9 480.0,270.5 482.0,270.6 482.3,270.9 485.5,273.8 486.9,274.1 489.1,275.3 490.9,276.0 491.1,276.8 489.4,279.5 491.2,279.9 493.1,280.2 494.5,279.9 496.1,278.6 496.4,277.0 497.3,276.7 498.1,277.7 498.1,279.1 496.6,280.1 495.5,280.8 493.5,282.5 491.1,284.9 490.7,286.3 490.3,288.1 490.3,289.8 489.9,290.2 489.7,291.3 489.6,292.3 491.8,293.8 491.6,295.0 492.7,295.7 492.6,296.6 490.9,298.8 488.3,299.8 484.8,300.1 482.9,300.0 483.3,301.0 482.9,302.3 483.2,303.2 482.2,303.8 480.4,304.0 478.7,303.4 478.0,303.9 478.3,305.6 479.5,306.1 480.4,305.6 480.9,306.5 479.3,307.0 477.9,308.1 477.7,309.9 477.3,310.8 475.6,310.8 474.2,311.7 473.7,313.0 475.5,314.3 477.1,314.7 476.5,316.2 474.5,317.2 473.3,319.3 471.7,320.0 471.0,320.8 471.6,322.6 472.7,323.6 472.0,323.5 470.4,323.2 466.2,323.0 465.4,322.0 465.5,320.7 464.3,320.8 463.7,320.2 463.5,318.3 464.9,317.5 465.4,316.4 465.2,315.5 466.1,314.0 466.8,311.7 466.6,310.7 467.4,310.4 467.2,309.7 466.4,309.4 466.9,308.6 466.1,308.0 465.7,305.9 466.4,305.6 466.1,303.5 466.6,301.7 467.0,300.1 468.1,299.5 467.5,297.8 467.5,296.2 468.9,295.0 468.8,293.5 469.8,291.8 469.8,290.2 469.4,289.9 468.6,286.9 469.6,285.1 469.5,283.4 470.1,281.8 471.2,280.2 472.5,279.1 472.0,278.4 472.3,277.8 472.3,274.9 474.2,274.1 474.8,272.2 474.6,271.8 476.0,270.2Z"/>
<path fill="#99cf97" d="M471.9,324.1 472.6,324.9 473.4,326.2 475.7,327.3 478.2,327.7 477.4,328.6 475.7,328.7 474.8,328.1 473.8,328.0 471.9,328.0Z"/>
<path fill="#99cf97" d="M471.9,324.1 471.9,328.0 473.8,328.0 474.8,328.1 474.2,328.8 472.7,329.3 471.9,329.3 470.8,329.1 469.6,328.6 467.8,328.3 465.5,327.4 463.7,326.4 461.3,324.5 462.8,324.8 465.2,326.0 467.6,326.6 468.5,325.8 469.0,324.6 470.6,323.9Z" stroke-width="2.0"/>
<path fill="#99cf97" d="M470.2,262.8 471.1,264.0 471.3,265.2 472.2,266.0 471.7,267.6 472.6,269.6 473.3,272.0 474.6,271.8 474.8,272.2 474.2,274.1 472.3,274.9 472.3,277.8 472.0,278.4 472.5,279.1 471.2,280.2 470.1,281.8 469.5,283.4 469.6,285.1 468.6,286.9 469.4,289.9 469.8,290.2 469.8,291.8 468.8,293.5 468.9,295.0 467.5,296.2 467.5,297.8 468.1,299.5 467.0,300.1 466.6,301.7 466.1,303.5 466.4,305.6 465.7,305.9 466.1,308.0 466.9,308.6 466.4,309.4 467.2,309.7 467.4,310.4 466.6,310.7 466.8,311.7 466.1,314.0 465.2,315.5 465.4,316.4 464.9,317.5 463.5,318.3 463.7,320.2 464.3,320.8 465.5,320.7 465.4,322.0 466.2,323.0 470.4,323.2 472.0,323.5 470.4,323.5 469.6,323.9 468.0,324.6 467.7,326.2 467.0,326.3 465.0,325.7 463.0,324.5 460.8,323.5 460.3,322.4 460.8,321.3 459.9,320.2 459.7,317.2 460.4,315.5 462.3,314.1 459.6,313.6 461.3,312.1 461.9,309.2 463.8,309.8 464.7,306.2 463.6,305.7 463.0,307.9 461.9,307.6 462.5,305.1 463.1,301.9 463.9,300.7 463.4,299.0 463.2,297.0 464.0,297.0 465.0,294.1 466.2,291.3 467.0,288.7 466.6,286.1 467.1,284.7 466.9,282.5 467.9,280.4 468.2,277.0 468.8,273.4 469.3,269.4 469.2,266.6 468.9,264.1 469.7,263.7Z"/>
<path fill="#c7e4c6" d="M482.0,270.6 480.0,270.5 479.3,271.9 478.3,270.6 476.0,270.2 474.6,271.8 473.3,272.0 472.6,269.6 471.7,267.6 472.2,266.0 471.3,265.2 471.1,264.0 470.2,262.8 471.3,260.9 470.6,259.4 471.0,258.8 470.7,258.2 471.3,257.3 471.4,255.8 471.5,254.6 471.8,254.0 470.3,251.2 471.6,251.3 472.5,251.3 472.9,250.7 474.5,250.0 475.4,249.4 477.7,249.1 477.5,250.4 477.7,251.1 477.5,252.2 479.4,253.8 481.4,254.1 482.1,254.8 483.3,255.1 484.0,255.6 485.1,255.6 486.1,256.1 486.2,257.1 486.5,257.6 486.6,258.4 486.1,258.4 486.7,260.5 490.1,260.5 489.8,261.5 490.0,262.2 491.0,262.7 491.4,263.8 491.1,265.2 490.6,265.9 490.8,266.9 490.2,267.3 490.2,266.8 488.5,265.9 486.9,265.8 483.9,266.4 483.0,267.9 483.0,268.8 482.3,270.9Z"/>
<path fill="#e2f1e0" d="M482.3,270.9 483.0,268.8 483.0,267.9 483.9,266.4 486.9,265.8 488.5,265.9 490.2,266.8 490.2,267.3 490.7,268.3 490.6,270.7 492.5,271.0 493.2,270.7 494.4,271.1 494.7,271.7 494.8,273.2 495.1,273.9 495.7,274.0 496.4,273.7 497.0,274.0 497.0,275.0 496.7,276.0 496.4,277.0 496.1,278.6 494.5,279.9 493.1,280.2 491.2,279.9 489.4,279.5 491.1,276.8 490.9,276.0 489.1,275.3 486.9,274.1 485.5,273.8Z"/>
<path fill="#c7e4c6" d="M491.1,284.9 492.3,284.7 494.1,286.0 494.7,286.0 496.5,287.1 497.9,288.1 498.9,289.3 498.1,290.1 498.6,291.1 497.8,292.2 495.9,293.2 494.6,292.8 493.6,293.0 492.0,292.3 490.8,292.3 489.7,291.3 489.9,290.2 490.3,289.8 490.3,288.1 490.7,286.3Z"/>
<path fill="#c7e4c6" d="M470.2,262.8 469.7,263.7 468.9,264.1 467.1,263.1 466.9,262.4 463.5,260.6 460.3,258.7 459.0,257.6 458.3,256.2 458.5,255.7 457.1,253.4 455.3,250.2 453.7,246.7 453.0,245.9 452.4,244.6 451.1,243.4 449.8,242.7 450.4,242.0 449.5,240.3 450.1,239.1 451.5,237.9 451.7,238.7 451.2,239.1 451.2,239.8 451.9,239.6 452.7,239.8 453.4,240.7 454.4,240.0 454.7,238.8 455.8,237.2 457.9,236.6 459.8,234.7 460.3,233.6 460.1,232.3 460.6,232.1 461.7,232.9 462.3,233.8 463.1,234.2 464.1,236.0 465.4,236.3 466.4,235.8 467.0,236.1 468.1,236.0 469.4,236.8 468.3,238.5 468.8,238.6 469.7,239.5 468.1,239.4 467.9,239.7 466.4,240.0 464.4,241.2 464.3,242.0 463.9,242.7 464.0,243.6 463.0,244.1 463.0,244.8 462.5,245.2 463.3,246.7 464.2,247.8 463.8,248.6 465.0,248.7 465.7,249.6 467.2,249.6 468.7,248.6 468.5,251.3 469.3,251.5 470.3,251.2 471.8,254.0 471.5,254.6 471.4,255.8 471.3,257.3 470.7,258.2 471.0,258.8 470.6,259.4 471.3,260.9Z"/>
<path fill="#c7e4c6" d="M451.5,237.9 452.4,236.7 452.0,235.9 451.4,236.7 450.3,235.9 450.7,235.4 450.4,233.9 451.0,233.6 451.3,232.5 452.0,231.4 451.8,230.7 452.8,230.3 454.0,229.6 455.7,230.6 456.1,230.5 456.5,231.3 458.0,231.5 458.5,231.3 459.4,231.9 460.1,232.3 460.3,233.6 459.8,234.7 457.9,236.6 455.8,237.2 454.7,238.8 454.4,240.0 453.4,240.7 452.7,239.8 451.9,239.6 451.2,239.8 451.2,239.1 451.7,238.7Z"/>
<path fill="#f4f8f3" d="M487.4,217.4 488.6,218.0 489.7,219.1 489.7,220.0 490.4,220.1 491.3,220.9 492.0,221.6 491.7,223.1 490.7,223.6 490.7,224.0 490.4,224.9 491.2,226.2 491.8,226.2 492.0,227.2 493.1,228.7 492.6,228.7 491.7,228.6 491.1,229.1 490.3,229.4 489.7,229.4 489.6,229.8 488.7,229.7 487.6,228.9 487.5,228.1 487.1,227.2 487.3,225.7 487.8,225.1 487.4,224.3 486.8,224.0 487.0,223.2 486.6,222.8 485.7,222.9 484.5,221.6 485.0,221.1 485.0,220.3 486.1,220.0 486.5,219.7 485.9,219.0 486.0,218.4Z"/>
<path fill="#f4f8f3" d="M492.0,221.6 494.1,221.9 494.3,221.6 495.7,221.4 497.6,221.9 496.7,223.4 496.8,224.6 497.5,225.7 497.2,226.4 497.0,227.2 496.6,228.0 495.6,227.6 494.8,227.8 494.1,227.6 493.9,228.1 494.2,228.5 494.0,228.8 493.1,228.7 492.0,227.2 491.8,226.2 491.2,226.2 490.4,224.9 490.7,224.0 490.7,223.6 491.7,223.1Z"/>
<path fill="#e2f1e0" d="M497.6,221.9 499.5,222.5 501.3,224.0 501.6,224.7 500.6,226.3 500.0,227.6 499.4,228.3 498.5,228.4 498.3,227.9 497.9,227.8 497.3,228.3 496.6,228.0 497.0,227.2 497.2,226.4 497.5,225.7 496.8,224.6 496.7,223.4Z"/>
<path fill="#5cab5e" d="M641.3,107.4 646.8,108.7 644.5,109.2 646.4,110.3 643.5,111.0 642.0,111.1 642.8,109.9 640.5,109.2 637.8,109.8 637.0,111.1 635.3,111.9 633.4,111.4 631.1,111.5 629.2,110.6 628.1,111.1 627.1,111.1 626.8,112.3 623.5,112.0 623.0,113.0 621.3,113.0 620.2,114.2 618.4,116.2 615.7,118.6 616.4,119.2 615.7,119.9 614.0,119.9 612.9,121.5 613.0,123.9 614.1,124.7 613.5,126.8 612.1,128.0 611.3,129.0 610.1,127.9 606.7,130.0 604.3,130.4 601.9,129.5 601.3,127.6 600.7,123.6 602.3,122.4 607.0,121.0 610.4,119.1 613.6,116.7 617.8,113.3 620.8,112.0 625.6,109.8 629.4,109.0 632.3,109.1 635.0,107.7 638.1,107.8Z"/>
<path fill="#5cab5e" d="M630.8,117.0 629.1,118.2 629.4,119.3 626.6,120.7 623.2,122.2 622.0,124.7 623.2,125.9 624.9,126.9 623.3,128.8 621.5,129.2 620.8,132.2 619.8,133.8 617.7,133.6 616.7,135.0 614.6,135.1 614.1,133.5 612.6,131.5 611.3,129.0 612.1,128.0 613.5,126.8 614.1,124.7 613.0,123.9 612.9,121.5 614.0,119.9 615.7,119.9 616.4,119.2 615.7,118.6 618.4,116.2 620.2,114.2 621.3,113.0 623.0,113.0 623.5,112.0 626.8,112.3 627.1,111.1 628.1,111.1 630.5,111.9 633.2,113.1 633.2,115.8 633.8,116.5Z"/>
<path fill="#5cab5e" d="M642.0,111.1 641.8,112.4 644.5,113.5 642.8,114.9 644.9,116.8 643.7,118.3 645.3,119.6 644.6,120.8 647.2,122.0 646.5,122.9 644.9,123.9 641.1,126.1 638.0,126.3 634.9,126.9 632.0,127.3 631.0,126.3 629.3,125.7 629.7,124.0 628.9,122.4 629.7,121.4 631.3,120.3 635.3,118.4 636.5,118.1 636.3,117.3 633.8,116.5 633.2,115.8 633.2,113.1 630.5,111.9 628.1,111.1 629.2,110.6 631.1,111.5 633.4,111.4 635.3,111.9 637.0,111.1 637.8,109.8 640.5,109.2 642.8,109.9Z"/>
<path fill="#5cab5e" d="M606.2,133.1 606.5,132.6 606.9,132.1 608.5,132.0 609.1,131.5 610.5,131.0 610.5,131.9 609.9,132.4 610.1,132.9 611.1,133.2 610.7,133.9 610.1,133.7 608.9,134.9 609.4,135.8 608.2,136.0 606.9,135.8 606.2,134.8Z"/>
<path fill="#5cab5e" d="M614.2,134.7 613.2,136.1 611.3,135.1 611.1,134.4 613.6,133.8Z"/>
<path fill="#5cab5e" d="M609.1,134.9 610.7,134.9 610.9,135.6 609.7,135.7Z"/>
<path fill="#27692a" d="M588.4,134.4 590.1,136.4 591.2,136.7 592.3,138.7 592.8,139.4 594.9,139.7 594.7,140.8 593.8,141.3 594.5,142.2 593.0,143.2 590.6,143.2 587.6,143.6 586.8,143.3 585.7,144.1 584.1,143.9 582.8,144.6 581.9,144.2 584.5,142.4 586.8,142.4 587.3,141.7 586.6,141.0 586.8,140.1 586.6,139.2 586.8,138.7 586.6,138.6 586.8,137.5 585.6,136.4 586.7,135.8 587.6,135.2Z"/>
<path fill="#99cf97" d="M587.3,141.7 586.0,142.0 583.3,141.7 582.8,141.0 584.6,140.5 583.7,139.5 584.0,138.4 586.6,138.6 586.8,138.7 586.6,139.2 586.8,140.1 586.6,141.0Z"/>
<path fill="#5cab5e" d="M586.7,135.8 583.5,136.1 583.1,135.6 583.7,134.9 583.2,134.4 582.2,135.2 582.1,133.5 581.2,132.6 581.9,130.8 583.2,129.4 584.6,129.5 586.8,129.4 584.9,131.3 586.6,131.0 588.6,131.1 588.1,132.5 586.5,134.1 588.3,134.2 588.4,134.4 587.6,135.2Z"/>
<path fill="#5cab5e" d="M578.9,132.1 579.8,130.0 581.1,129.6 581.0,130.7 579.8,131.2Z"/>
<path fill="#5cab5e" d="M589.4,127.0 590.2,125.6 590.6,126.3 589.9,127.2Z"/>
<path fill="#5cab5e" d="M586.2,128.8 587.5,128.2 587.6,128.9Z"/>
<path fill="#e2f1e0" d="M582.1,136.5 581.1,137.7 579.8,137.4 578.8,137.4 579.1,136.4 578.8,135.5 580.2,135.5Z"/>
<path fill="#5cab5e" d="M581.1,137.7 581.4,139.0 580.1,140.5 577.0,141.6 574.5,141.3 576.0,139.5 575.0,137.7 577.4,136.3 578.8,135.5 579.1,136.4 578.8,137.4 579.8,137.4Z"/>
<path fill="#5cab5e" d="M579.0,123.1 580.6,123.0 580.3,124.4Z"/>
<path fill="#368a3e" d="M584.0,146.8 586.2,146.4 589.2,146.9 588.6,144.9 590.3,145.6 594.3,144.3 594.9,142.8 596.4,142.5 596.7,143.1 597.5,143.1 598.3,143.8 599.5,144.7 600.4,144.5 601.9,145.3 602.3,145.5 602.8,145.4 603.7,145.9 606.2,146.2 605.3,147.4 605.1,148.7 604.6,149.0 603.8,148.8 603.8,149.2 602.6,150.2 602.5,151.0 603.4,150.7 604.0,151.5 603.9,152.0 604.4,152.7 603.8,153.2 604.3,154.6 605.2,154.8 605.0,155.5 603.4,156.5 600.0,156.1 597.4,156.6 597.2,157.7 595.2,157.9 593.2,157.1 592.6,157.5 589.4,156.7 588.7,156.0 589.6,155.0 589.9,151.5 588.1,149.6 586.8,148.8 584.1,148.1Z"/>
<path fill="#368a3e" d="M607.3,157.4 608.4,156.7 608.7,158.2 608.2,159.6 607.4,159.2 606.9,158.0Z"/>
<path fill="#368a3e" d="M576.2,158.7 576.3,157.5 575.6,156.7 578.0,155.4 580.2,155.8 582.5,155.8 584.4,156.1 585.8,155.9 588.7,156.0 589.4,156.7 592.6,157.5 593.2,157.1 595.2,157.9 597.2,157.7 597.3,158.7 595.7,159.8 593.4,160.2 593.3,160.8 592.2,161.8 591.5,163.2 592.2,164.2 591.2,165.0 590.8,166.1 589.5,166.5 588.2,167.8 584.4,167.8 583.2,168.4 582.6,169.1 581.7,168.9 581.1,168.4 580.6,167.4 579.0,167.1 578.8,166.5 579.5,165.9 579.7,165.4 579.1,164.9 579.6,163.7 578.9,162.6 579.6,162.5 579.7,161.7 580.0,161.4 580.0,160.1 580.8,159.6 580.3,158.7 579.3,158.6 579.0,158.9 578.0,158.9 577.5,158.0 576.8,158.3Z"/>
<path fill="#368a3e" d="M596.2,162.7 597.4,162.2 598.0,162.5 597.4,163.2 596.5,163.1Z"/>
<path fill="#5cab5e" d="M576.2,158.7 576.8,158.3 577.5,158.0 578.0,158.9 579.0,158.9 579.3,158.6 580.3,158.7 580.8,159.6 580.0,160.1 580.0,161.4 579.7,161.7 579.6,162.5 578.9,162.6 579.6,163.7 579.1,164.9 579.7,165.4 579.5,165.9 578.8,166.5 579.0,167.1 578.2,167.5 577.3,167.3 576.4,167.5 576.7,166.1 576.5,165.0 575.7,164.9 575.3,164.2 575.5,163.1 576.2,162.4 576.3,161.7 576.7,160.7 576.6,159.9 576.3,159.3Z"/>
<path fill="#27692a" d="M609.4,135.8 609.4,136.4 611.2,136.9 611.1,137.5 612.9,137.1 613.9,136.7 615.9,137.4 616.7,137.9 617.1,138.8 616.6,139.3 617.3,139.9 617.7,140.8 617.6,141.4 618.3,142.6 617.5,142.8 617.0,142.5 616.6,142.9 615.3,143.2 614.7,143.7 613.4,144.0 613.7,144.6 613.9,145.3 614.8,145.7 615.8,146.5 615.2,147.3 614.5,147.5 614.8,148.6 614.6,148.9 614.1,148.6 613.2,148.5 612.0,148.8 610.4,148.8 610.2,149.2 609.3,148.7 608.8,148.8 606.9,148.3 606.6,148.7 605.1,148.7 605.3,147.4 606.2,146.2 603.7,145.9 602.8,145.4 602.9,144.7 602.6,144.3 602.8,143.1 602.5,141.3 603.5,141.3 604.0,140.6 604.4,139.0 604.1,138.4 604.4,138.0 605.9,137.9 606.2,138.3 607.4,137.5 607.0,136.8 606.9,135.8 608.2,136.0Z"/>
<path fill="#5cab5e" d="M602.6,138.4 604.1,138.4 604.4,139.0 604.0,140.6 603.5,141.3 602.5,141.3 602.8,143.1 601.8,142.7 600.7,141.9 599.1,142.3 597.8,142.1 598.7,141.7 600.2,139.1Z"/>
<path fill="#5cab5e" d="M597.8,142.1 599.1,142.3 600.7,141.9 601.8,142.7 602.8,143.1 602.6,144.3 602.1,144.3 601.9,145.3 600.4,144.5 599.5,144.7 598.3,143.8 597.5,143.1 596.7,143.1 596.4,142.5Z"/>
<path fill="#99cf97" d="M602.6,144.3 602.9,144.7 602.8,145.4 602.3,145.5 601.9,145.3 602.1,144.3Z"/>
<path fill="#368a3e" d="M608.8,148.8 608.9,149.1 608.6,149.6 609.4,149.9 610.3,149.9 610.1,150.7 609.4,151.0 608.1,150.7 607.7,151.4 606.9,151.5 606.6,151.2 605.6,151.8 604.7,151.9 604.0,151.5 603.4,150.7 602.5,151.0 602.6,150.2 603.8,149.2 603.8,148.8 604.6,149.0 605.1,148.7 606.6,148.7 606.9,148.3Z"/>
<path fill="#5cab5e" d="M621.7,147.8 621.6,148.5 620.6,148.5 620.9,148.9 620.4,150.0 620.0,150.3 618.5,150.3 617.6,150.7 616.2,150.6 613.7,150.2 613.3,149.5 611.5,149.9 611.3,150.2 610.3,149.9 609.4,149.9 608.6,149.6 608.9,149.1 608.8,148.8 609.3,148.7 610.2,149.2 610.4,148.8 612.0,148.8 613.2,148.5 614.1,148.6 614.6,148.9 614.8,148.6 614.5,147.5 615.2,147.3 615.8,146.5 617.1,147.0 618.1,146.3 618.7,146.2 620.1,146.7 620.9,146.6 621.7,146.9 621.5,147.2Z"/>
<path fill="#368a3e" d="M613.7,150.2 616.2,150.6 616.0,151.5 616.4,152.2 615.0,152.0 613.6,152.6 613.7,153.4 613.5,153.9 614.0,154.8 615.7,155.7 616.6,157.2 618.5,158.6 619.9,158.6 620.3,159.0 619.8,159.3 621.4,159.9 622.7,160.5 624.2,161.4 624.3,161.7 624.0,162.3 623.0,161.5 621.5,161.2 620.8,162.4 622.0,163.0 621.8,163.9 621.1,164.0 620.2,165.5 619.4,165.7 619.5,165.1 619.8,164.2 620.2,163.8 619.5,162.8 619.0,161.9 618.2,161.7 617.7,160.9 616.6,160.6 615.9,159.9 614.6,159.8 613.2,159.0 611.6,157.9 610.4,156.9 609.9,155.1 609.0,154.9 607.6,154.4 606.8,154.6 605.7,155.4 605.0,155.5 605.2,154.8 604.3,154.6 603.8,153.2 604.4,152.7 603.9,152.0 604.0,151.5 604.7,151.9 605.6,151.8 606.6,151.2 606.9,151.5 607.7,151.4 608.1,150.7 609.4,151.0 610.1,150.7 610.3,149.9 611.3,150.2 611.5,149.9 613.3,149.5Z"/>
<path fill="#368a3e" d="M619.2,165.1 618.5,166.5 618.8,167.0 618.4,167.9 617.1,167.2 616.2,167.1 613.8,166.2 614.0,165.3 616.0,165.4 617.8,165.3Z"/>
<path fill="#368a3e" d="M608.1,159.9 609.2,161.1 608.9,163.4 608.1,163.3 607.4,163.9 606.8,163.5 606.7,161.3 606.3,160.3 607.2,160.4Z"/>
<path fill="#5cab5e" d="M618.3,142.6 617.6,141.4 617.7,140.8 617.3,139.9 616.6,139.3 617.1,138.8 616.7,137.9 617.9,137.4 620.6,136.6 622.8,136.0 624.6,136.3 624.7,136.7 626.4,136.7 628.6,137.0 631.8,136.9 632.7,137.1 633.1,137.7 633.2,138.4 633.6,139.1 633.6,139.8 632.6,140.1 633.1,141.0 633.2,141.7 634.1,143.3 633.9,143.8 633.0,144.0 631.4,145.4 631.9,146.2 631.5,146.1 629.8,145.4 628.6,145.7 627.7,145.5 626.7,145.9 625.8,145.3 625.1,145.5 625.0,145.4 624.2,144.5 622.9,144.4 622.7,143.9 621.5,143.7 621.3,144.1 620.3,143.8 620.4,143.3 619.1,143.1Z"/>
<path fill="#5cab5e" d="M621.7,146.9 620.9,146.6 620.1,146.7 618.7,146.2 618.1,146.3 617.1,147.0 615.8,146.5 614.8,145.7 613.9,145.3 613.7,144.6 613.4,144.0 614.7,143.7 615.3,143.2 616.6,142.9 617.0,142.5 617.5,142.8 618.3,142.6 619.1,143.1 620.4,143.3 620.3,143.8 621.3,144.1 621.5,143.7 622.7,143.9 622.9,144.4 624.2,144.5 625.0,145.4 624.5,145.4 624.2,145.7 623.8,145.8 623.7,146.2 623.3,146.2 623.3,146.4 622.7,146.6 621.9,146.6Z"/>
<path fill="#99cf97" d="M625.0,145.4 625.1,145.5 625.8,145.3 626.7,145.9 627.7,145.5 628.6,145.7 629.8,145.4 631.5,146.1 631.0,146.5 630.7,147.3 630.3,147.4 628.4,146.9 627.8,147.0 627.4,147.4 626.6,147.6 626.4,147.5 625.5,147.8 624.9,147.9 624.7,148.2 623.3,148.4 622.6,148.2 621.7,147.8 621.5,147.2 621.7,146.9 621.9,146.6 622.7,146.6 623.3,146.4 623.3,146.2 623.7,146.2 623.8,145.8 624.2,145.7 624.5,145.4Z"/>
<path fill="#99cf97" d="M620.4,150.0 620.9,148.9 620.6,148.5 621.6,148.5 621.7,147.8 622.6,148.2 623.3,148.4 624.7,148.2 624.9,147.9 625.5,147.8 626.4,147.5 626.6,147.6 627.4,147.4 627.8,147.0 628.4,146.9 630.3,147.4 630.7,147.3 631.6,147.7 631.7,148.2 630.7,148.6 629.9,149.8 628.8,150.9 627.4,151.3 626.3,151.2 625.0,151.7 624.3,151.9 622.9,151.6 621.5,150.8 621.0,150.6 620.6,150.0Z"/>
<path fill="#99cf97" d="M631.7,148.2 632.5,147.8 633.6,148.0 634.7,148.0 635.5,148.5 636.1,148.2 637.4,148.0 637.9,147.6 638.6,147.6 639.1,147.8 639.7,148.3 640.2,149.0 641.2,150.1 641.3,150.9 641.1,151.6 641.4,152.4 642.2,152.7 643.0,152.4 643.8,152.7 643.9,153.2 643.0,153.6 642.5,153.4 642.0,155.5 640.9,155.3 639.7,154.7 637.6,155.1 636.7,155.5 634.2,155.5 632.8,155.2 632.1,155.3 631.7,154.6 631.3,154.3 631.7,154.0 631.3,153.8 630.8,154.2 629.7,153.7 629.6,152.9 628.5,152.5 628.3,152.0 627.4,151.3 628.8,150.9 629.9,149.8 630.7,148.6Z"/>
<path fill="#c7e4c6" d="M631.7,154.6 632.1,155.3 632.8,155.2 634.2,155.5 636.7,155.5 637.6,155.1 639.7,154.7 640.9,155.3 642.0,155.5 641.1,156.2 640.4,157.5 641.0,158.5 639.5,158.3 637.7,158.8 637.7,159.7 636.1,159.8 634.9,159.2 633.5,159.7 632.2,159.7 632.0,158.5 631.2,157.9 631.5,157.7 631.3,157.5 631.5,156.9 632.2,156.4 631.4,155.6 631.2,155.0Z"/>
<path fill="#5cab5e" d="M632.2,159.7 633.5,159.7 634.9,159.2 636.1,159.8 637.7,159.7 637.7,158.8 638.5,159.3 638.0,160.4 637.6,160.6 636.5,160.5 635.6,160.3 633.5,160.8 634.7,161.8 633.8,162.1 632.8,162.1 631.9,161.2 631.6,161.5 632.0,162.6 632.9,163.4 632.2,163.8 633.2,164.6 634.1,165.1 634.1,166.1 632.5,165.6 633.0,166.5 631.8,166.7 632.5,168.3 631.4,168.3 629.9,167.5 629.3,166.1 629.0,165.0 628.3,164.2 627.4,163.2 627.3,162.7 628.1,161.8 628.2,161.2 628.8,161.0 628.8,160.5 629.9,160.4 630.6,160.0 631.5,160.0 631.8,159.7Z"/>
<path fill="#5cab5e" d="M638.0,170.2 637.8,170.8 635.3,170.9 635.3,170.6 633.1,170.3 633.5,169.5 634.4,170.1 635.8,170.0 637.1,170.1Z"/>
<path fill="#99cf97" d="M616.2,150.6 617.6,150.7 618.5,150.3 620.0,150.3 620.4,150.0 620.6,150.0 621.0,150.6 619.6,151.1 619.4,151.8 618.8,152.0 618.8,152.5 618.1,152.4 617.5,152.1 617.2,152.4 616.0,152.4 616.4,152.2 616.0,151.5Z"/>
<path fill="#99cf97" d="M625.0,151.7 625.4,152.3 625.9,152.8 625.3,153.5 624.5,153.1 623.3,153.1 621.8,152.8 620.9,152.9 620.6,153.2 619.9,152.8 619.6,153.6 620.4,154.4 620.8,154.9 621.6,155.6 622.3,156.0 622.9,156.7 624.5,157.4 624.3,157.7 622.6,157.0 621.6,156.4 620.0,155.9 618.5,154.6 618.9,154.4 618.1,153.7 618.1,153.1 617.0,152.8 616.4,153.6 615.9,153.0 615.9,152.4 616.0,152.4 617.2,152.4 617.5,152.1 618.1,152.4 618.8,152.5 618.8,152.0 619.4,151.8 619.6,151.1 621.0,150.6 621.5,150.8 622.9,151.6 624.3,151.9Z"/>
<path fill="#c7e4c6" d="M625.3,153.5 625.9,153.5 625.5,154.3 626.3,154.9 626.0,155.8 625.6,155.8 625.3,156.0 624.7,156.4 624.5,157.4 622.9,156.7 622.3,156.0 621.6,155.6 620.8,154.9 620.4,154.4 619.6,153.6 619.9,152.8 620.6,153.2 620.9,152.9 621.8,152.8 623.3,153.1 624.5,153.1Z"/>
<path fill="#99cf97" d="M628.5,152.5 629.6,152.9 629.7,153.7 630.8,154.2 631.3,153.8 631.7,154.0 631.3,154.3 631.7,154.6 631.2,155.0 631.4,155.6 632.2,156.4 631.5,156.9 631.3,157.5 631.5,157.7 631.2,157.9 630.4,158.0 629.8,158.1 629.4,158.1 628.3,158.4 628.0,158.7 627.9,158.1 627.1,157.5 627.5,157.1 627.6,156.9 626.9,156.6 626.4,156.4 626.1,156.1 625.6,155.8 626.0,155.8 626.3,154.9 625.5,154.3 625.9,153.5 625.3,153.5 625.9,152.8 625.4,152.3 625.0,151.7 626.3,151.2 627.4,151.3 628.3,152.0Z"/>
<path fill="#c7e4c6" d="M626.6,157.6 626.5,157.3 625.8,158.1 625.9,158.7 625.5,158.6 625.0,158.0 624.3,157.7 624.5,157.4 624.7,156.4 625.3,156.0 625.6,155.8 626.1,156.1 626.4,156.4 626.9,156.6 627.6,156.9 627.5,157.1 627.1,157.5Z"/>
<path fill="#c7e4c6" d="M628.0,158.7 627.8,159.3 628.1,160.1 628.8,160.5 628.8,161.0 628.2,161.2 628.1,161.8 627.3,162.7 627.0,162.5 626.9,162.1 626.0,161.6 625.8,160.7 626.0,159.5 626.2,159.0 625.9,158.7 625.8,158.1 626.5,157.3 626.6,157.6 627.1,157.5 627.9,158.1Z"/>
<path fill="#c7e4c6" d="M628.0,158.7 628.3,158.4 629.4,158.1 629.8,158.1 630.4,158.0 631.2,157.9 632.0,158.5 632.2,159.7 631.8,159.7 631.5,160.0 630.6,160.0 629.9,160.4 628.8,160.5 628.1,160.1 627.8,159.3Z"/>
<path fill="#99cf97" d="M634.5,130.9 634.8,129.8 634.1,130.0 633.0,129.4 632.8,128.4 635.0,127.9 637.3,127.7 639.2,128.0 641.0,127.9 641.2,128.2 640.0,129.2 640.5,130.9 639.8,131.4 638.3,131.4 636.8,130.8 636.0,130.6Z"/>
<path fill="#99cf97" d="M630.3,130.0 631.5,129.4 632.8,129.6 631.9,130.1 630.7,130.5Z"/>
<path fill="#c7e4c6" d="M628.9,133.9 628.9,132.6 629.8,131.5 631.4,130.9 632.8,132.2 634.2,132.2 634.5,130.9 636.0,130.6 636.8,130.8 638.3,131.4 639.8,131.4 640.6,131.8 640.8,132.7 641.3,133.7 639.4,134.4 638.4,134.7 636.7,133.8 635.8,133.7 635.5,133.4 633.8,133.5 630.9,133.4Z"/>
<path fill="#c7e4c6" d="M631.8,136.9 631.6,136.5 631.8,136.0 631.1,135.7 629.2,135.4 628.9,133.9 630.9,133.4 633.8,133.5 635.5,133.4 635.8,133.7 636.7,133.8 638.4,134.7 638.5,135.5 637.1,136.0 636.7,137.0 634.8,137.7 633.1,137.7 632.7,137.1Z"/>
<path fill="#5cab5e" d="M631.8,136.9 628.6,137.0 626.4,136.7 626.8,136.0 629.2,135.4 631.1,135.7 631.8,136.0 631.6,136.5Z"/>
<path fill="#c7e4c6" d="M633.1,137.7 634.8,137.7 636.7,137.0 637.1,136.0 638.5,135.5 638.4,134.7 639.4,134.4 641.3,133.7 643.2,134.1 643.4,134.6 644.3,134.4 646.0,134.8 646.2,135.6 645.8,136.1 646.9,137.2 647.6,137.6 647.5,137.9 648.7,138.2 649.2,138.6 648.5,139.0 647.1,139.0 646.8,139.1 647.2,139.7 647.6,140.8 646.1,140.9 645.6,141.3 645.5,142.2 644.8,142.0 643.2,142.1 642.7,141.7 642.1,142.0 641.4,141.8 640.0,141.7 638.1,141.3 636.3,141.2 635.0,141.2 634.0,141.7 633.2,141.7 633.1,141.0 632.6,140.1 633.6,139.8 633.6,139.1 633.2,138.4Z"/>
<path fill="#99cf97" d="M647.6,140.8 648.3,140.9 648.7,140.5 649.3,140.6 651.1,140.4 652.2,141.4 651.7,141.8 651.9,142.3 653.3,142.4 653.9,143.2 653.9,143.5 656.1,144.1 657.4,143.8 658.5,144.6 659.5,144.6 662.1,145.2 662.1,145.7 661.4,146.6 661.8,147.6 661.5,148.2 659.8,148.3 659.0,148.8 658.9,149.6 657.5,149.7 656.3,150.3 654.7,150.4 653.2,151.0 653.3,152.1 654.1,152.5 655.9,152.4 655.6,153.1 653.7,153.4 651.3,154.4 650.3,154.0 650.7,153.2 648.8,152.7 649.1,152.3 650.8,151.8 650.3,151.4 647.5,150.9 647.4,150.3 645.8,150.5 645.2,151.4 643.8,152.7 643.0,152.4 642.2,152.7 641.4,152.4 641.9,152.2 642.2,151.6 642.6,151.0 642.5,150.7 642.9,150.6 643.0,150.8 644.1,150.9 644.5,150.8 644.2,150.6 644.3,150.3 643.7,149.9 643.5,149.1 642.8,148.9 643.0,148.3 642.2,147.8 641.5,147.7 640.2,147.2 639.0,147.4 638.6,147.6 637.9,147.6 637.4,148.0 636.1,148.2 635.5,148.5 634.7,148.0 633.6,148.0 632.5,147.8 631.7,148.2 631.6,147.7 630.7,147.3 631.0,146.5 631.5,146.1 631.9,146.2 631.4,145.4 633.0,144.0 633.9,143.8 634.1,143.3 633.2,141.7 634.0,141.7 635.0,141.2 636.3,141.2 638.1,141.3 640.0,141.7 641.4,141.8 642.1,142.0 642.7,141.7 643.2,142.1 644.8,142.0 645.5,142.2 645.6,141.3 646.1,140.9Z"/>
<path fill="#e2f1e0" d="M638.6,147.6 639.0,147.4 640.2,147.2 641.5,147.7 642.2,147.8 643.0,148.3 642.8,148.9 643.5,149.1 643.7,149.9 644.3,150.3 644.2,150.6 644.5,150.8 644.1,150.9 643.0,150.8 642.9,150.6 642.5,150.7 642.6,151.0 642.2,151.6 641.9,152.2 641.4,152.4 641.1,151.6 641.3,150.9 641.2,150.1 640.2,149.0 639.7,148.3 639.1,147.8Z"/>
<path fill="#5cab5e" d="M656.6,159.7 659.1,160.3 661.1,160.1 662.6,160.2 664.7,159.3 666.6,159.2 668.3,160.1 668.6,160.7 668.4,161.6 669.7,162.0 670.4,162.5 669.2,163.0 669.7,165.0 669.4,165.6 670.3,167.0 669.5,167.2 668.9,166.8 666.9,166.6 666.1,166.8 664.1,167.1 663.2,167.1 661.2,167.7 659.7,167.8 658.8,167.4 656.9,167.9 656.3,167.6 656.2,168.5 655.7,168.9 655.3,169.3 654.6,168.5 655.3,167.9 654.2,168.0 652.7,167.6 651.6,168.6 648.9,168.8 647.5,167.9 645.6,167.8 645.2,168.5 644.0,168.8 642.3,167.8 640.4,167.8 639.3,166.1 638.1,165.1 638.9,163.8 637.8,162.9 639.7,161.3 642.4,161.2 643.2,159.9 646.5,160.1 648.6,159.0 650.6,158.5 653.5,158.4Z"/>
<path fill="#5cab5e" d="M639.6,160.8 638.1,161.7 637.6,160.9 637.6,160.6 638.0,160.4 638.5,159.3 637.7,158.8 639.5,158.3 641.0,158.5 641.2,159.2 642.7,159.7 642.4,160.2 640.3,160.2Z"/>
<path fill="#99cf97" d="M649.3,170.5 649.4,170.5 649.7,170.1 650.9,170.1 652.5,169.6 651.3,170.3 651.5,170.8 649.7,171.5 648.9,171.3 648.5,170.6Z"/>
<path fill="#c7e4c6" d="M716.2,158.0 715.2,158.4 712.9,159.6 712.1,160.8 711.5,160.8 711.0,160.0 708.7,160.0 708.4,158.5 707.5,158.5 707.7,156.8 705.6,155.5 702.6,155.6 700.5,155.9 698.9,154.3 697.4,153.6 694.7,152.4 694.4,152.2 689.9,153.2 689.9,159.7 689.1,159.8 687.8,158.4 686.6,157.9 684.6,158.3 683.9,158.9 683.8,158.4 684.2,157.7 683.9,157.1 681.8,156.5 681.1,154.9 680.1,154.5 680.0,153.9 681.7,154.1 681.8,152.8 683.3,152.5 684.8,152.8 685.1,151.1 684.8,150.0 683.1,150.1 681.6,149.7 679.6,150.4 677.9,150.8 677.0,150.5 677.2,149.6 676.1,148.5 674.8,148.5 673.3,147.3 674.3,146.0 673.8,145.6 675.2,143.7 677.0,144.7 677.2,143.4 680.8,141.5 683.6,141.5 687.4,142.7 689.5,143.4 691.4,142.7 694.1,142.6 696.4,143.5 696.9,143.0 699.3,143.1 699.8,142.3 696.9,141.1 698.6,140.2 698.3,139.7 700.0,139.3 698.7,138.1 699.5,137.5 706.1,136.9 706.9,136.4 711.3,135.8 712.9,135.1 716.0,135.5 716.6,137.3 718.4,136.8 720.6,137.4 720.5,138.4 722.2,138.3 726.6,136.6 725.9,137.2 728.1,138.6 732.1,143.0 733.0,142.1 735.4,143.1 737.9,142.6 738.9,142.9 739.7,144.0 741.0,144.3 741.7,145.0 744.0,144.8 744.9,145.9 743.5,147.0 742.1,147.2 742.0,149.0 741.0,149.8 737.6,149.2 736.3,152.3 735.4,152.7 731.9,153.4 733.5,156.4 732.3,156.9 732.5,157.9 731.4,157.6 730.5,157.0 727.9,156.8 725.0,156.8 724.4,157.0 721.9,156.2 720.9,156.6 720.6,157.6 717.7,157.0 716.6,157.3Z"/>
<path fill="#c7e4c6" d="M745.6,145.7 747.4,145.4 750.7,143.9 753.4,143.1 754.9,143.6 756.8,143.7 757.9,144.5 759.7,144.5 762.2,145.0 763.9,143.8 763.2,142.7 765.0,140.9 767.0,141.6 768.6,141.8 770.6,142.3 771.0,143.6 773.4,144.3 775.1,144.0 777.3,143.8 779.1,144.0 780.8,144.9 781.8,145.8 783.5,145.7 785.7,146.0 787.3,145.6 789.6,145.3 792.1,144.1 793.2,144.3 794.1,144.8 796.2,144.7 795.3,146.0 794.1,147.8 794.5,148.5 795.5,148.3 797.3,148.5 798.6,147.9 800.0,148.4 801.6,149.7 801.4,150.3 800.0,150.1 797.5,150.3 796.3,150.8 795.0,152.0 792.3,152.7 790.6,153.6 788.8,153.2 787.8,153.1 786.9,154.2 787.4,154.9 787.7,155.5 786.5,156.0 785.2,157.0 783.2,157.6 780.5,157.7 777.7,158.3 775.7,159.2 774.9,158.7 772.8,158.7 770.2,157.6 768.5,157.3 766.2,157.6 762.5,157.2 760.6,157.2 759.6,156.2 758.8,154.6 757.7,154.4 755.6,153.3 753.2,153.0 751.2,152.7 750.5,152.0 751.2,149.9 750.0,148.5 747.5,147.9 746.0,146.9Z"/>
<path fill="#1b511e" d="M820.6,157.8 819.5,156.8 818.8,157.8 816.1,158.5 816.4,159.4 814.8,159.4 814.0,158.8 812.8,160.1 810.9,161.0 809.5,162.1 807.0,162.6 805.7,163.5 803.8,163.9 804.8,163.1 804.4,162.4 805.8,161.3 804.9,160.3 803.3,161.0 801.4,162.2 800.3,163.3 798.6,163.4 797.7,164.2 798.6,165.4 800.0,165.7 800.1,166.5 801.5,167.0 803.4,165.7 805.0,166.4 806.1,166.5 806.4,167.4 803.9,167.9 803.1,168.8 801.4,169.7 800.5,170.9 802.4,171.9 803.1,173.6 804.2,175.2 805.3,176.5 805.3,177.8 804.2,178.3 804.6,179.3 805.7,179.8 805.4,181.2 804.9,182.6 804.0,182.8 802.7,184.7 801.3,187.0 799.7,189.0 797.2,190.7 794.8,192.1 792.8,192.3 791.8,193.1 791.2,192.5 790.2,193.4 787.7,194.3 785.9,194.6 785.3,196.4 784.3,196.5 783.9,195.2 784.3,194.6 781.9,194.0 781.1,194.3 779.3,193.8 778.5,193.1 778.8,192.1 777.2,191.8 776.3,191.1 774.8,192.1 773.1,192.3 771.7,192.3 770.8,192.7 769.9,192.9 770.1,195.0 769.2,194.9 769.1,194.5 769.0,193.8 767.7,194.3 767.0,194.0 765.7,193.3 766.2,191.8 765.1,191.5 764.7,189.9 762.8,190.2 763.0,188.1 764.7,186.6 764.7,185.2 764.7,183.9 763.9,183.4 763.3,182.4 762.3,182.5 760.4,182.3 761.0,181.5 760.2,180.5 759.0,181.2 757.5,180.8 755.5,181.9 753.9,183.2 752.5,183.4 751.7,182.9 750.8,182.9 749.5,182.5 748.6,182.9 747.4,184.2 747.3,182.8 746.2,183.2 744.2,183.1 742.2,182.7 740.8,181.9 739.4,181.5 738.8,180.7 737.8,180.4 736.1,179.3 734.7,178.8 733.9,179.2 731.5,178.0 729.8,176.8 729.3,174.9 730.6,175.2 730.6,174.3 729.9,173.4 730.1,171.9 728.2,169.9 725.3,169.2 724.8,167.8 723.5,167.0 723.2,166.5 723.0,165.5 723.0,164.8 722.0,164.4 721.4,164.6 720.9,163.0 721.4,162.6 721.2,162.2 722.9,161.4 724.1,161.0 725.9,161.2 726.6,160.1 728.8,159.9 729.4,159.2 732.2,158.3 732.5,157.9 732.3,156.9 733.5,156.4 731.9,153.4 735.4,152.7 736.3,152.3 737.6,149.2 741.0,149.8 742.0,149.0 742.1,147.2 743.5,147.0 744.9,145.9 745.6,145.7 746.0,146.9 747.5,147.9 750.0,148.5 751.2,149.9 750.5,152.0 751.2,152.7 753.2,153.0 755.6,153.3 757.7,154.4 758.8,154.6 759.6,156.2 760.6,157.2 762.5,157.2 766.2,157.6 768.5,157.3 770.2,157.6 772.8,158.7 774.9,158.7 775.7,159.2 777.7,158.3 780.5,157.7 783.2,157.6 785.2,157.0 786.5,156.0 787.7,155.5 787.4,154.9 786.9,154.2 787.8,153.1 788.8,153.2 790.6,153.6 792.3,152.7 795.0,152.0 796.3,150.8 797.5,150.3 800.0,150.1 801.4,150.3 801.6,149.7 800.0,148.4 798.6,147.9 797.3,148.5 795.5,148.3 794.5,148.5 794.1,147.8 795.3,146.0 796.2,144.7 798.3,145.4 800.8,144.3 800.7,143.5 803.3,141.1 803.3,140.1 802.3,139.7 803.8,138.8 805.9,138.5 808.2,138.4 810.9,139.0 812.4,139.6 813.5,141.4 814.1,142.1 814.8,143.2 815.4,144.9 818.5,145.5 820.5,146.7 821.2,148.4 823.9,148.4 825.4,147.7 828.3,147.2 827.4,148.7 826.7,149.4 826.1,151.3 824.9,153.0 822.8,152.7 821.3,153.3 821.8,154.8 821.5,156.9 820.6,156.9Z"/>
<path fill="#1b511e" d="M785.1,199.3 783.6,200.2 782.2,199.6 782.1,198.1 783.0,197.3 784.9,196.8 785.9,196.9 786.3,197.5 785.5,198.3Z"/>
<path fill="#99cf97" d="M805.1,189.3 804.1,192.1 803.3,193.6 802.4,192.1 802.2,190.8 803.2,189.1 804.6,187.7 805.4,188.2Z"/>
<path fill="#c7e4c6" d="M689.9,159.7 689.9,153.2 694.4,152.2 694.7,152.4 697.4,153.6 698.9,154.3 700.5,155.9 702.6,155.6 705.6,155.5 707.7,156.8 707.5,158.5 708.4,158.5 708.7,160.0 711.0,160.0 711.5,160.8 712.1,160.8 712.9,159.6 715.2,158.4 716.2,158.0 716.7,158.2 715.2,159.3 716.5,160.0 717.8,159.6 719.9,160.5 717.6,161.7 716.3,161.6 715.5,161.6 715.3,161.1 715.7,160.3 713.3,160.7 712.8,161.8 711.9,162.8 710.5,162.7 710.0,163.5 711.3,163.9 711.7,165.2 710.7,167.0 709.4,166.6 708.4,166.6 708.5,165.6 706.1,164.8 704.3,163.9 703.2,163.1 701.1,161.9 700.3,160.1 699.7,159.8 697.8,159.9 697.1,159.5 697.0,158.1 694.6,157.2 693.1,158.2 691.6,158.8 691.9,159.7Z"/>
<path fill="#f4f8f3" d="M699.1,169.6 699.0,168.1 697.7,168.1 695.7,166.5 694.3,166.3 692.3,165.4 691.1,165.3 690.3,165.6 689.1,165.6 687.9,166.6 686.4,166.9 686.0,165.7 686.3,163.8 684.9,163.2 685.4,162.0 684.2,161.9 684.6,160.5 686.3,160.9 687.8,160.3 686.5,159.3 686.0,158.3 684.6,158.7 684.4,160.0 683.9,158.9 684.6,158.3 686.6,157.9 687.8,158.4 689.1,159.8 689.9,159.7 691.9,159.7 691.6,158.8 693.1,158.2 694.6,157.2 697.0,158.1 697.1,159.5 697.8,159.9 699.7,159.8 700.3,160.1 701.1,161.9 703.2,163.1 704.3,163.9 706.1,164.8 708.5,165.6 708.4,166.6 707.9,166.6 707.1,166.1 706.8,166.7 705.3,167.1 705.0,168.5 704.0,169.0 702.6,169.2 702.2,170.1 700.9,170.3Z"/>
<path fill="#c7e4c6" d="M716.2,158.0 716.6,157.3 717.7,157.0 720.6,157.6 720.9,156.6 721.9,156.2 724.4,157.0 725.0,156.8 727.9,156.8 730.5,157.0 731.4,157.6 732.5,157.9 732.2,158.3 729.4,159.2 728.8,159.9 726.6,160.1 725.9,161.2 724.1,161.0 722.9,161.4 721.2,162.2 721.4,162.6 720.9,163.0 717.6,163.3 715.5,162.7 713.6,162.8 713.7,161.8 715.6,162.1 716.3,161.6 717.6,161.7 719.9,160.5 717.8,159.6 716.5,160.0 715.2,159.3 716.7,158.2Z"/>
<path fill="#e2f1e0" d="M716.3,161.6 715.6,162.1 713.7,161.8 713.6,162.8 715.5,162.7 717.6,163.3 720.9,163.0 721.4,164.6 722.0,164.4 723.0,164.8 723.0,165.5 723.2,166.5 721.4,166.5 720.2,166.4 719.1,167.2 718.3,167.3 717.7,167.7 717.0,167.1 717.2,165.7 716.7,165.6 716.9,165.0 715.9,164.6 715.2,165.3 715.0,166.0 714.7,166.2 713.7,166.2 713.1,167.0 712.5,166.7 711.2,167.2 710.7,167.0 711.7,165.2 711.3,163.9 710.0,163.5 710.5,162.7 711.9,162.8 712.8,161.8 713.3,160.7 715.7,160.3 715.3,161.1 715.5,161.6Z"/>
<path fill="#f4f8f3" d="M699.1,169.6 700.9,170.3 702.2,170.1 702.6,169.2 704.0,169.0 705.0,168.5 705.3,167.1 706.8,166.7 707.1,166.1 707.9,166.6 708.4,166.6 709.4,166.6 710.7,167.0 711.2,167.2 712.5,166.7 713.1,167.0 713.7,166.2 714.7,166.2 715.0,166.0 715.2,165.3 715.9,164.6 716.9,165.0 716.7,165.6 717.2,165.7 717.0,167.1 717.7,167.7 718.3,167.3 719.1,167.2 720.2,166.4 721.4,166.5 723.2,166.5 723.5,167.0 722.5,167.2 721.6,167.5 719.6,167.7 717.7,168.1 716.7,168.9 717.1,169.6 717.3,170.5 716.5,171.2 716.5,171.9 716.0,172.5 714.4,172.5 715.1,173.6 714.0,174.1 713.2,175.1 713.3,176.2 712.6,176.7 712.0,176.5 710.6,176.7 710.4,177.2 709.1,177.2 708.2,178.2 708.1,179.7 705.8,180.4 704.6,180.3 704.3,180.7 703.2,180.4 701.5,180.7 698.5,179.8 700.1,178.2 700.0,177.1 698.6,176.8 698.5,175.7 697.9,174.3 698.7,173.3 697.9,173.1 698.4,171.8Z"/>
<path fill="#5cab5e" d="M723.5,167.0 724.8,167.8 725.3,169.2 728.2,169.9 726.5,171.4 724.6,171.6 721.9,171.2 721.1,171.9 721.7,173.5 722.3,174.7 723.7,175.5 722.2,176.5 722.2,177.8 720.5,179.5 719.4,181.3 717.6,183.2 715.6,183.0 713.6,184.9 714.8,185.6 715.0,187.0 716.0,187.9 716.3,189.4 712.5,189.4 711.3,190.5 710.0,190.1 709.5,188.8 708.1,187.5 704.9,187.8 702.1,187.9 699.6,188.1 700.3,186.1 702.8,185.2 702.7,184.4 701.8,184.1 701.8,182.5 700.1,181.8 699.4,180.7 698.5,179.8 701.5,180.7 703.2,180.4 704.3,180.7 704.6,180.3 705.8,180.4 708.1,179.7 708.2,178.2 709.1,177.2 710.4,177.2 710.6,176.7 712.0,176.5 712.6,176.7 713.3,176.2 713.2,175.1 714.0,174.1 715.1,173.6 714.4,172.5 716.0,172.5 716.5,171.9 716.5,171.2 717.3,170.5 717.1,169.6 716.7,168.9 717.7,168.1 719.6,167.7 721.6,167.5 722.5,167.2Z"/>
<path fill="#5cab5e" d="M728.2,169.9 730.1,171.9 729.9,173.4 730.6,174.3 730.6,175.2 729.3,174.9 729.8,176.8 731.5,178.0 733.9,179.2 732.8,180.0 732.2,181.6 733.9,182.3 735.5,183.1 737.8,184.1 740.2,184.3 741.2,185.2 742.5,185.4 744.7,185.8 746.1,185.8 746.3,185.1 746.1,184.0 746.2,183.2 747.3,182.8 747.4,184.2 747.5,184.6 749.0,185.2 750.1,185.0 751.6,185.1 753.1,185.0 753.2,184.0 752.5,183.4 753.9,183.2 755.5,181.9 757.5,180.8 759.0,181.2 760.2,180.5 761.0,181.5 760.4,182.3 762.3,182.5 762.5,183.2 761.8,183.5 762.0,184.6 760.7,184.3 758.5,185.5 758.5,186.5 757.5,188.0 757.5,188.8 756.7,190.3 755.3,189.9 755.3,191.7 754.9,192.3 755.0,193.0 754.2,193.4 753.3,190.6 752.8,190.7 752.5,191.8 751.5,190.9 752.1,189.9 752.9,189.8 753.7,188.3 752.6,188.0 751.0,188.0 749.4,187.8 749.2,186.6 748.4,186.5 747.0,185.7 746.4,186.9 747.6,187.8 746.5,188.5 746.1,189.1 747.2,189.6 746.9,190.6 747.5,192.0 747.8,193.4 747.6,194.0 746.4,194.0 744.2,194.4 744.3,195.7 743.4,196.7 740.9,197.9 738.9,200.0 737.6,201.1 735.8,202.2 735.8,203.0 735.0,203.5 733.4,204.1 732.6,204.2 732.1,205.5 732.4,207.8 732.5,209.2 731.8,210.9 731.8,213.9 730.8,214.0 730.1,215.3 730.6,215.9 729.0,216.4 728.4,217.6 727.7,218.1 726.0,216.4 725.2,214.0 724.6,212.2 724.0,211.4 723.0,209.7 722.6,207.5 722.3,206.4 720.7,204.0 720.0,200.6 719.4,198.4 719.4,196.3 719.1,194.6 716.6,195.7 715.3,195.5 713.0,193.3 713.9,192.7 713.4,192.0 711.3,190.5 712.5,189.4 716.3,189.4 716.0,187.9 715.0,187.0 714.8,185.6 713.6,184.9 715.6,183.0 717.6,183.2 719.4,181.3 720.5,179.5 722.2,177.8 722.2,176.5 723.7,175.5 722.3,174.7 721.7,173.5 721.1,171.9 721.9,171.2 724.6,171.6 726.5,171.4Z"/>
<path fill="#99cf97" d="M746.2,183.2 746.1,184.0 746.3,185.1 746.1,185.8 744.7,185.8 742.5,185.4 741.2,185.2 740.2,184.3 737.8,184.1 735.5,183.1 733.9,182.3 732.2,181.6 732.8,180.0 733.9,179.2 734.7,178.8 736.1,179.3 737.8,180.4 738.8,180.7 739.4,181.5 740.8,181.9 742.2,182.7 744.2,183.1Z"/>
<path fill="#e2f1e0" d="M752.5,183.4 753.2,184.0 753.1,185.0 751.6,185.1 750.1,185.0 749.0,185.2 747.5,184.6 747.4,184.2 748.6,182.9 749.5,182.5 750.8,182.9 751.7,182.9Z"/>
<path fill="#99cf97" d="M754.2,193.4 754.1,194.7 753.5,194.4 753.6,195.8 753.1,194.9 753.1,194.0 752.7,193.2 752.0,192.2 750.4,192.1 750.5,192.8 750.0,193.8 749.2,193.4 749.0,193.7 748.5,193.6 747.8,193.4 747.5,192.0 746.9,190.6 747.2,189.6 746.1,189.1 746.5,188.5 747.6,187.8 746.4,186.9 747.0,185.7 748.4,186.5 749.2,186.6 749.4,187.8 751.0,188.0 752.6,188.0 753.7,188.3 752.9,189.8 752.1,189.9 751.5,190.9 752.5,191.8 752.8,190.7 753.3,190.6Z"/>
<path fill="#c7e4c6" d="M735.1,218.8 734.9,220.7 734.1,221.2 732.6,221.6 731.8,220.2 731.5,217.7 732.3,214.8 733.5,215.8 734.3,217.0Z"/>
<path fill="#5cab5e" d="M686.4,166.9 687.9,166.6 689.1,165.6 690.3,165.6 691.1,165.3 692.3,165.4 694.3,166.3 695.7,166.5 697.7,168.1 699.0,168.1 699.1,169.6 698.4,171.8 697.9,173.1 698.7,173.3 697.9,174.3 698.5,175.7 698.6,176.8 700.0,177.1 700.1,178.2 698.5,179.8 699.4,180.7 700.1,181.8 701.8,182.5 701.8,184.1 702.7,184.4 702.8,185.2 700.3,186.1 699.6,188.1 696.3,187.6 694.4,187.2 692.5,187.0 691.7,184.8 690.9,184.5 689.5,184.8 687.8,185.7 685.6,185.1 683.8,183.7 682.2,183.2 681.0,181.6 679.7,179.2 678.8,179.5 677.6,178.9 677.0,179.6 676.0,178.7 676.0,177.8 675.5,177.8 675.7,176.5 674.8,175.2 672.7,174.2 671.5,172.6 671.9,171.2 672.8,170.6 672.6,169.6 671.5,169.0 670.3,167.0 669.4,165.6 669.7,165.0 669.2,163.0 670.4,162.5 670.7,163.2 671.6,164.0 672.7,164.2 673.4,164.2 675.5,162.9 676.1,162.7 676.6,163.2 676.0,164.1 677.1,165.0 677.5,164.9 678.1,166.2 679.8,166.6 681.0,167.5 683.5,167.8 686.2,167.3Z"/>
<path fill="#99cf97" d="M671.5,169.0 672.6,169.6 672.8,170.6 671.9,171.2 671.5,172.6 672.7,174.2 674.8,175.2 675.7,176.5 675.5,177.8 676.0,177.8 676.0,178.7 677.0,179.6 675.9,179.5 674.8,179.4 673.5,181.1 670.2,180.9 665.3,177.4 662.7,176.2 660.6,175.7 659.9,173.6 663.8,171.8 664.4,169.6 664.3,168.4 665.2,167.9 666.1,166.8 666.9,166.6 668.9,166.8 669.5,167.2 670.3,167.0Z"/>
<path fill="#e2f1e0" d="M659.9,173.6 656.5,175.5 654.5,174.8 654.7,174.5 654.7,173.8 655.1,172.8 656.1,172.1 655.8,171.5 655.0,171.4 654.8,170.0 655.3,169.3 655.7,168.9 656.2,168.5 656.3,167.6 656.9,167.9 658.8,167.4 659.7,167.8 661.2,167.7 663.2,167.1 664.1,167.1 666.1,166.8 665.2,167.9 664.3,168.4 664.4,169.6 663.8,171.8Z"/>
<path fill="#99cf97" d="M654.2,175.3 654.5,174.8 656.5,175.5 659.9,173.6 660.6,175.7 660.2,176.0 656.8,176.9 658.5,178.6 657.9,178.9 657.6,179.5 656.3,179.7 655.9,180.4 655.1,180.9 653.2,180.6 653.1,180.4 654.0,177.6 654.0,176.9 654.2,176.4Z"/>
<path fill="#5cab5e" d="M654.5,174.8 654.2,175.3 654.2,176.4 654.0,176.9 654.0,177.6 653.1,180.4 652.0,177.4 652.5,176.8 652.8,175.9 653.2,174.5 653.4,174.1 654.1,174.1 654.2,173.8 654.7,173.8 654.7,174.5Z"/>
<path fill="#99cf97" d="M654.7,173.8 654.2,173.8 654.1,174.1 653.5,174.1 654.1,172.7 655.0,171.4 655.0,171.4 655.8,171.5 656.1,172.1 655.1,172.8Z"/>
<path fill="#5cab5e" d="M666.9,203.4 666.6,202.7 666.1,202.1 666.0,201.4 665.1,200.8 664.1,199.3 663.6,197.9 662.4,196.7 661.6,196.4 660.5,194.7 660.3,193.5 660.4,192.5 659.4,190.5 658.5,189.9 657.6,189.5 657.0,188.5 657.1,188.1 656.6,187.2 656.1,186.8 655.4,185.5 654.4,184.1 653.5,182.9 652.6,182.9 652.9,181.9 653.0,181.3 653.2,180.6 655.1,180.9 655.9,180.4 656.3,179.7 657.6,179.5 657.9,178.9 658.5,178.6 656.8,176.9 660.2,176.0 660.6,175.7 662.7,176.2 665.3,177.4 670.2,180.9 673.5,181.1 675.1,181.2 675.5,182.1 676.7,182.0 677.4,183.5 678.3,183.9 678.6,184.6 679.8,185.3 679.9,186.0 679.7,186.6 679.9,187.2 680.4,187.7 680.7,188.2 680.9,188.7 681.4,189.0 681.9,188.9 682.3,189.6 682.3,190.0 683.0,191.8 688.3,192.6 688.6,192.3 689.4,193.5 688.2,197.0 683.0,198.8 678.0,199.4 676.3,200.2 675.1,202.0 674.2,202.3 673.8,201.8 673.1,201.8 671.5,201.7 671.1,201.5 669.1,201.5 668.6,201.7 667.9,201.2 667.5,202.1 667.6,202.8Z"/>
<path fill="#c7e4c6" d="M684.9,202.9 683.7,203.3 683.3,204.1 683.3,204.7 681.5,205.4 678.7,206.3 677.2,207.5 676.4,207.6 675.9,207.5 674.9,208.2 673.8,208.6 672.3,208.6 671.9,208.7 671.5,209.2 671.0,209.3 670.7,209.8 669.9,209.7 669.3,210.0 668.1,209.9 667.6,208.9 667.7,207.9 667.4,207.4 667.1,206.1 666.5,205.4 666.9,205.3 666.7,204.5 666.9,204.2 666.9,203.4 667.6,202.8 667.5,202.1 667.9,201.2 668.6,201.7 669.1,201.5 671.1,201.5 671.5,201.7 673.1,201.8 673.8,201.8 674.2,202.3 675.1,202.0 676.3,200.2 678.0,199.4 683.0,198.8 684.4,201.6Z"/>
<path fill="#c7e4c6" d="M695.0,195.1 694.4,196.2 693.6,196.2 693.2,196.6 692.9,197.5 693.1,198.6 693.0,198.9 692.2,198.8 691.1,199.5 690.9,200.3 690.5,200.7 689.4,200.7 688.7,201.1 688.7,201.8 687.9,202.3 686.9,202.2 685.7,202.8 684.9,202.9 684.4,201.6 683.0,198.8 688.2,197.0 689.4,193.5 688.6,192.3 688.7,191.6 689.2,190.8 689.2,190.1 690.0,189.8 689.6,189.5 689.8,188.4 690.7,188.4 691.5,189.6 692.5,190.2 693.7,190.4 694.8,190.8 695.6,191.8 696.0,192.3 696.7,192.6 696.7,193.0 696.0,194.0 695.7,194.5Z"/>
<path fill="#c7e4c6" d="M690.5,187.0 690.1,186.4 690.6,185.8 690.9,186.0 690.7,186.7Z"/>
<path fill="#99cf97" d="M682.3,189.6 682.6,189.5 682.6,190.0 684.0,189.7 685.5,189.7 686.5,189.8 687.7,188.6 689.0,187.5 690.1,186.4 690.5,187.0 690.7,188.4 689.8,188.4 689.6,189.5 690.0,189.8 689.2,190.1 689.2,190.8 688.7,191.6 688.6,192.3 688.3,192.6 683.0,191.8 682.3,190.0Z"/>
<path fill="#99cf97" d="M680.9,188.7 680.8,187.4 681.3,186.5 681.8,186.3 682.3,186.8 682.3,187.9 681.9,188.9 681.4,189.0Z"/>
<path fill="#99cf97" d="M675.9,179.5 676.3,180.3 676.2,180.7 676.7,182.0 675.5,182.1 675.1,181.2 673.5,181.1 674.8,179.4Z"/>
<path fill="#c7e4c6" d="M664.7,159.3 665.0,158.6 664.5,157.4 663.5,156.7 662.6,156.5 661.9,156.0 662.1,155.8 663.6,156.1 666.2,156.4 668.6,157.2 668.9,157.5 669.9,157.3 671.6,157.6 672.1,158.3 673.2,158.7 672.8,159.0 673.6,159.9 673.4,160.1 672.4,160.0 671.1,159.5 670.7,159.8 668.3,160.1 666.6,159.2Z"/>
<path fill="#c7e4c6" d="M668.3,160.1 670.7,159.8 671.1,160.3 671.7,160.6 671.4,161.0 672.3,161.6 671.8,162.2 672.6,162.6 673.3,162.9 673.4,164.2 672.7,164.2 672.0,163.2 672.0,162.9 671.3,162.9 670.8,162.5 670.4,162.5 669.7,162.0 668.4,161.6 668.6,160.7Z"/>
<path fill="#c7e4c6" d="M674.9,159.9 675.7,160.0 676.0,159.5 677.0,158.8 677.9,159.8 678.8,161.0 679.6,161.1 680.2,161.5 678.7,161.7 678.5,163.1 678.1,163.7 677.5,164.1 677.5,164.9 677.1,165.0 676.0,164.1 676.6,163.2 676.1,162.7 675.5,162.9 673.4,164.2 673.3,162.9 672.6,162.6 671.8,162.2 672.3,161.6 671.4,161.0 671.7,160.6 671.1,160.3 670.7,159.8 671.1,159.5 672.4,160.0 673.4,160.1 673.6,159.9 672.8,159.0 673.2,158.7 673.7,158.8Z"/>
<path fill="#c7e4c6" d="M670.4,162.5 670.8,162.5 671.3,162.9 672.0,162.9 672.0,163.2 672.7,164.2 671.6,164.0 670.7,163.2Z"/>
<path fill="#f4f8f3" d="M766.2,196.7 765.2,197.4 763.9,197.5 763.1,199.4 762.4,199.7 763.3,201.3 764.4,202.5 765.1,203.7 764.4,205.2 763.8,205.5 764.3,206.4 765.4,207.8 765.6,208.8 765.6,209.6 766.3,211.2 765.3,212.8 764.5,214.6 764.3,213.3 764.8,212.0 764.3,210.9 764.4,209.0 763.7,208.1 763.1,206.0 762.8,203.8 762.0,202.4 760.9,203.2 758.9,204.5 757.9,204.3 756.8,203.9 757.4,201.8 757.1,200.1 755.7,198.1 755.9,197.5 754.9,197.2 753.6,195.8 753.5,194.4 754.1,194.7 754.2,193.4 755.0,193.0 754.9,192.3 755.3,191.7 755.3,189.9 756.7,190.3 757.5,188.8 757.5,188.0 758.5,186.5 758.5,185.5 760.7,184.3 762.0,184.6 761.8,183.5 762.5,183.2 762.3,182.5 763.3,182.4 763.9,183.4 764.7,183.9 764.7,185.2 764.7,186.6 763.0,188.1 762.8,190.2 764.7,189.9 765.1,191.5 766.2,191.8 765.7,193.3 767.0,194.0 767.7,194.3 769.0,193.8 769.1,194.5 767.6,195.6 767.2,196.3Z"/>
<path fill="#99cf97" d="M771.5,210.7 770.0,209.9 768.5,209.9 768.7,208.5 767.2,208.5 767.0,210.5 766.1,213.0 765.5,214.6 765.6,215.8 766.8,215.9 767.5,217.5 767.8,219.0 768.8,220.0 769.8,220.2 770.7,221.1 770.2,221.8 769.0,222.0 768.9,221.2 767.5,220.4 767.2,220.7 766.5,220.0 766.2,219.2 765.2,218.2 764.4,217.3 764.1,218.4 763.8,217.4 764.0,216.3 764.5,214.6 765.3,212.8 766.3,211.2 765.6,209.6 765.6,208.8 765.4,207.8 764.3,206.4 763.8,205.5 764.4,205.2 765.1,203.7 764.4,202.5 763.3,201.3 762.4,199.7 763.1,199.4 763.9,197.5 765.2,197.4 766.2,196.7 767.2,196.3 768.0,196.8 768.1,197.9 769.2,197.9 768.8,199.8 768.9,201.4 770.7,200.3 771.2,200.6 772.2,200.6 772.6,200.0 773.9,200.1 775.3,201.5 775.4,203.2 776.8,204.8 776.7,206.2 776.1,207.0 774.5,206.8 772.2,207.1 771.1,208.6Z"/>
<path fill="#e2f1e0" d="M776.1,207.0 776.7,206.2 776.8,204.8 775.4,203.2 775.3,201.5 773.9,200.1 772.6,200.0 772.2,200.6 771.2,200.6 770.7,200.3 768.9,201.4 768.8,199.8 769.2,197.9 768.1,197.9 768.0,196.8 767.2,196.3 767.6,195.6 769.1,194.5 769.2,194.9 770.1,195.0 769.9,192.9 770.8,192.7 771.8,194.1 772.6,195.7 774.8,195.7 775.4,197.2 774.3,197.7 773.8,198.3 775.9,199.3 777.4,201.4 778.5,202.9 779.8,204.2 780.2,205.4 779.9,207.2 778.4,206.5 777.6,207.7Z"/>
<path fill="#99cf97" d="M781.1,194.3 778.8,195.8 777.3,197.4 776.9,198.6 778.3,200.5 779.9,202.8 781.5,203.9 782.5,205.3 783.3,208.5 783.1,211.6 781.6,212.7 779.6,213.9 778.2,215.3 776.0,216.9 775.4,215.8 775.9,214.6 774.6,213.6 776.1,212.9 777.9,212.8 777.2,211.8 780.1,210.4 780.3,208.3 779.9,207.2 780.2,205.4 779.8,204.2 778.5,202.9 777.4,201.4 775.9,199.3 773.8,198.3 774.3,197.7 775.4,197.2 774.8,195.7 772.6,195.7 771.8,194.1 770.8,192.7 771.7,192.3 773.1,192.3 774.8,192.1 776.3,191.1 777.2,191.8 778.8,192.1 778.5,193.1 779.3,193.8Z"/>
<path fill="#e2f1e0" d="M773.1,213.4 772.4,212.5 771.5,210.7 771.1,208.6 772.2,207.1 774.5,206.8 776.1,207.0 777.6,207.7 778.4,206.5 779.9,207.2 780.3,208.3 780.1,210.4 777.2,211.8 777.9,212.8 776.1,212.9 774.6,213.6Z"/>
<path fill="#5cab5e" d="M768.9,221.2 769.0,222.0 770.2,221.8 770.7,221.1 771.1,221.3 772.2,222.3 772.9,223.5 773.0,224.7 772.8,225.5 773.0,226.1 773.1,227.1 773.7,227.6 774.4,229.1 774.4,229.7 773.2,229.8 771.5,228.6 769.4,227.2 769.2,226.3 768.2,225.1 768.0,223.7 767.4,222.7 767.5,221.4 767.2,220.7 767.5,220.4Z"/>
<path fill="#99cf97" d="M783.9,228.5 784.2,229.7 785.4,230.7 786.5,230.3 787.6,230.4 788.7,229.5 789.5,229.4 791.2,229.9 792.6,229.5 793.5,227.1 794.2,226.5 794.8,224.5 796.8,224.5 798.3,224.8 797.3,226.3 798.6,228.0 798.3,228.8 800.2,230.4 798.2,230.6 797.6,231.8 797.7,233.4 796.0,234.6 795.9,236.3 795.3,239.0 795.0,238.4 793.0,239.2 792.3,238.1 791.1,238.0 790.2,237.5 788.1,238.1 787.5,237.2 786.3,237.3 784.9,237.1 784.6,234.8 783.7,234.3 782.9,232.8 782.7,231.3 782.9,229.7Z"/>
<path fill="#5cab5e" d="M799.6,224.2 798.3,224.8 796.8,224.5 794.8,224.5 794.2,226.5 793.5,227.1 792.6,229.5 791.2,229.9 789.5,229.4 788.7,229.5 787.6,230.4 786.5,230.3 785.4,230.7 784.2,229.7 783.9,228.5 785.2,229.1 786.5,228.8 786.9,227.3 787.6,226.9 789.8,226.6 791.0,225.2 791.9,224.1 792.7,225.0 793.0,224.4 793.9,224.4 794.0,223.3 794.0,222.5 795.4,221.3 796.3,219.9 797.0,219.9 797.9,220.8 798.0,221.5 799.1,222.0 800.6,222.5 800.4,223.2 799.3,223.3Z"/>
<path fill="#c7e4c6" d="M791.9,224.1 792.5,223.4 794.0,222.5 794.0,223.3 793.9,224.4 793.0,224.4 792.7,225.0Z"/>
<path fill="#99cf97" d="M758.8,222.4 762.6,222.8 764.1,224.5 765.5,225.7 766.5,226.5 768.1,228.3 769.9,228.4 771.4,229.6 772.4,231.0 773.7,231.8 773.0,233.2 774.0,233.9 774.6,233.9 774.9,235.1 775.6,236.1 776.8,236.3 777.7,237.4 777.3,239.5 777.2,242.2 775.2,242.3 773.8,240.8 771.5,239.4 770.8,238.3 769.5,236.9 768.6,235.6 767.2,233.1 765.7,231.7 765.2,230.2 764.5,228.8 763.0,227.7 762.1,226.2 760.7,225.2 758.9,223.3Z"/>
<path fill="#99cf97" d="M782.1,243.9 785.4,244.0 785.8,243.3 789.1,244.2 789.7,245.3 792.3,245.6 794.5,246.6 792.5,247.3 790.6,246.6 789.0,246.7 787.2,246.5 785.5,246.2 783.5,245.5 782.2,245.4 781.5,245.6 778.3,244.9 778.0,244.1 776.4,244.0 777.6,242.3 779.7,242.4 781.1,243.1 781.9,243.2Z"/>
<path fill="#99cf97" d="M811.2,229.5 809.8,231.2 808.5,231.6 806.8,231.2 803.9,231.3 802.3,231.6 802.1,232.9 803.6,234.5 804.6,233.7 807.8,233.1 807.7,233.9 806.9,233.6 806.2,234.7 804.6,235.3 806.3,237.6 806.0,238.2 807.5,240.2 807.5,241.3 806.6,241.9 805.9,241.2 806.8,239.8 805.0,240.5 804.6,240.0 804.8,239.3 803.6,238.3 803.7,236.6 802.5,237.1 802.7,239.2 802.8,241.7 801.6,241.9 800.9,241.4 801.4,239.8 801.1,238.1 800.4,238.1 799.8,236.9 800.6,235.8 800.8,234.4 801.7,231.7 802.1,231.0 803.6,229.7 804.9,230.2 807.1,230.5 809.1,230.4 810.9,229.1Z"/>
<path fill="#99cf97" d="M838.7,236.6 838.8,248.0 837.2,246.5 835.5,246.2 835.0,246.7 832.8,246.7 833.6,245.3 834.7,244.8 834.2,242.9 833.4,241.4 830.0,240.0 828.5,239.8 825.9,238.2 825.4,239.0 824.7,239.2 824.3,238.6 824.3,237.8 823.0,236.9 824.9,236.3 826.1,236.3 826.0,235.9 823.4,235.9 822.7,234.8 821.1,234.5 820.4,233.6 822.8,233.2 823.7,232.6 826.5,233.4 826.7,234.0 827.2,236.8 829.1,237.9 830.5,236.0 832.5,235.0 834.1,235.0 835.6,235.6 836.9,236.2Z"/>
<path fill="#99cf97" d="M810.7,247.6 810.9,247.2 812.4,246.8 813.6,246.7 814.2,246.5 814.8,246.7 814.2,247.2 812.4,247.9 810.9,248.4 809.8,249.7 808.3,250.1 808.1,249.9 808.2,249.3 809.0,248.3Z"/>
<path fill="#99cf97" d="M798.3,246.2 799.0,246.6 800.0,246.5 800.5,247.2 798.4,247.6 797.2,247.8 796.3,247.8 796.9,246.8 797.9,246.8Z"/>
<path fill="#99cf97" d="M807.1,246.2 806.8,247.1 804.2,247.6 801.9,247.4 801.9,246.8 803.3,246.4 804.3,246.9 805.5,246.8Z"/>
<path fill="#99cf97" d="M803.2,249.4 802.5,250.0 800.2,248.7 801.8,248.4 802.8,248.9Z"/>
<path fill="#99cf97" d="M794.8,246.5 796.0,246.5 796.0,247.6 794.8,247.4Z"/>
<path fill="#99cf97" d="M815.9,228.2 816.0,229.1 817.0,229.3 817.2,230.0 817.1,231.5 816.2,231.4 815.9,232.4 816.7,233.4 816.2,233.6 815.5,232.5 815.0,230.2 815.3,228.8Z"/>
<path fill="#99cf97" d="M818.4,236.9 820.3,237.4 821.0,238.8 819.5,238.0 818.0,237.9 817.0,238.0 815.8,237.9 816.2,237.0Z"/>
<path fill="#99cf97" d="M814.0,238.6 812.8,238.3 812.5,237.6 814.2,237.5 814.7,238.1Z"/>
<path fill="#99cf97" d="M776.3,235.0 777.9,234.8 778.7,237.1 777.5,237.1 776.5,235.8Z"/>
<path fill="#99cf97" d="M780.3,236.6 781.5,236.9 781.2,237.6 780.3,237.4Z"/>
<path fill="#99cf97" d="M761.9,229.6 763.3,230.9 762.8,230.9 761.8,229.9Z"/>
<path fill="#99cf97" d="M764.5,233.8 765.8,234.8 765.2,235.2 764.5,234.3Z"/>
<path fill="#99cf97" d="M826.8,242.2 827.7,242.2 827.7,244.1 826.8,243.9Z"/>
<path fill="#99cf97" d="M821.4,245.5 822.5,244.6 822.3,245.8 821.6,246.2Z"/>
<path fill="#99cf97" d="M804.3,199.6 805.4,200.1 805.9,199.7 806.1,200.1 805.8,200.8 806.4,202.1 805.9,203.5 804.9,204.1 804.6,205.5 805.0,206.9 806.0,207.1 806.7,206.9 808.9,207.9 808.8,208.8 809.3,209.2 809.1,210.1 807.8,209.2 807.1,208.3 806.7,208.9 805.6,207.9 804.0,208.1 803.1,207.7 803.2,207.0 803.7,206.6 803.2,206.2 803.0,206.8 802.1,205.8 801.9,205.0 801.8,203.4 802.5,203.9 802.7,201.2 803.3,199.6Z"/>
<path fill="#99cf97" d="M813.2,217.3 813.3,218.4 813.4,219.4 812.9,221.0 812.2,219.2 811.4,220.1 811.9,221.4 811.5,222.2 809.4,221.2 808.9,219.9 809.4,219.1 808.3,218.3 807.8,219.0 807.0,218.9 805.7,219.9 805.4,219.4 806.0,217.9 807.1,217.4 808.1,216.8 808.7,217.6 810.0,217.1 810.3,216.3 811.6,216.3 811.5,214.9 812.9,215.7 813.0,216.6Z"/>
<path fill="#99cf97" d="M801.1,212.1 801.5,213.5 800.3,214.5 799.4,215.7 797.0,217.4 797.9,216.1 799.2,215.1 800.2,213.8Z"/>
<path fill="#99cf97" d="M811.6,210.7 812.1,212.7 810.8,212.2 810.8,212.8 811.2,213.9 810.4,214.3 810.3,213.0 809.8,212.9 809.5,211.9 810.6,212.0 810.5,211.4 809.5,210.0 811.2,210.1Z"/>
<path fill="#99cf97" d="M805.6,212.0 805.3,211.2 806.3,211.7 807.5,211.7 807.4,212.5 806.6,213.2 805.5,213.7 805.4,212.9Z"/>
<path fill="#99cf97" d="M808.1,212.9 807.8,214.0 809.1,212.3 809.0,214.0 808.3,214.6 807.8,215.7 807.2,216.2 806.2,215.0 806.5,214.5 807.0,214.0 807.2,213.0Z"/>
<path fill="#99cf97" d="M804.7,209.1 804.2,210.6 803.5,209.8 802.6,208.4 804.1,208.5Z"/>
<path fill="#5cab5e" d="M816.6,164.4 818.1,166.5 818.6,167.6 818.6,169.6 817.9,170.6 816.3,170.9 814.9,171.7 813.4,171.8 813.1,170.9 813.5,169.6 812.7,167.7 814.0,167.4 812.8,165.9 812.9,165.8 813.7,165.9 814.4,165.0 815.6,165.0 816.4,164.9Z"/>
<path fill="#5cab5e" d="M812.9,173.7 814.1,173.4 813.9,173.7Z"/>
<path fill="#5cab5e" d="M827.6,172.2 827.8,172.8 826.8,173.9 826.1,173.3 825.2,173.7 824.8,174.8 823.6,174.3 823.6,173.4 824.6,172.4 825.6,172.6 826.3,171.9Z"/>
<path fill="#5cab5e" d="M838.7,167.0 838.0,168.4 838.3,169.3 837.4,170.5 835.2,171.3 832.1,171.4 829.6,173.4 828.5,172.8 828.4,171.4 825.3,171.8 823.3,172.7 821.2,172.7 823.0,174.0 821.8,177.0 820.7,177.7 819.8,177.0 820.3,175.4 819.2,174.9 818.5,173.7 820.1,173.2 821.0,172.1 822.8,171.2 824.1,170.0 827.6,169.5 829.4,169.8 831.3,166.7 832.4,167.5 835.0,165.8 836.0,165.1 837.1,163.0 836.8,161.0 837.5,159.9 839.4,159.6 840.3,162.0 840.3,163.4 838.7,165.2Z"/>
<path fill="#5cab5e" d="M843.8,154.7 845.1,155.1 846.3,154.3 846.7,156.3 844.1,156.8 842.6,158.5 839.8,157.3 838.9,159.2 836.9,159.3 836.7,157.5 837.5,156.2 839.4,156.1 839.9,153.7 840.4,152.3 842.5,154.1Z"/>
<path fill="#99cf97" d="M582.9,169.4 584.0,170.2 585.6,170.1 587.5,170.4 588.2,170.5 588.9,171.6 589.0,172.6 589.6,174.5 590.0,174.9 589.7,175.5 587.4,175.8 586.6,176.5 585.6,176.6 585.5,177.9 583.5,178.6 582.8,179.5 581.4,180.0 579.6,180.2 576.8,181.5 576.8,183.6 576.6,183.6 576.6,184.5 575.5,184.6 575.0,185.0 574.2,185.0 573.5,184.8 572.1,185.0 571.5,186.3 570.9,186.4 570.1,188.7 567.7,190.5 567.1,193.0 566.4,193.7 566.2,194.4 562.2,194.5 562.3,193.7 563.0,193.2 563.5,192.3 563.4,191.7 564.0,190.5 565.0,189.4 565.6,189.1 566.1,188.1 566.1,187.1 566.7,186.1 567.9,185.4 569.0,183.6 569.9,182.9 571.5,182.7 572.9,181.5 573.8,181.1 575.3,179.6 574.8,177.4 575.5,175.9 575.7,175.0 576.8,173.8 578.6,173.0 579.9,172.3 581.1,170.5 581.6,169.4Z"/>
<path fill="#99cf97" d="M576.6,184.5 576.6,183.6 576.8,183.6 576.8,183.7 576.8,186.7 571.1,186.6 571.1,191.1 569.5,191.3 569.0,192.2 569.4,194.7 562.5,194.7 562.1,195.2 562.2,194.5 566.2,194.4 566.4,193.7 567.1,193.0 567.7,190.5 570.1,188.7 570.9,186.4 571.5,186.3 572.1,185.0 573.5,184.8 574.2,185.0 575.0,185.0 575.5,184.6Z"/>
<path fill="#f4f8f3" d="M562.1,195.2 562.5,194.7 569.4,194.7 569.0,192.2 569.5,191.3 571.1,191.1 571.1,186.6 576.8,186.7 576.8,184.1 583.4,188.3 580.7,188.3 581.6,195.9 582.4,203.4 582.7,203.7 582.3,204.9 575.3,204.9 575.0,205.3 574.3,205.2 573.4,205.5 572.1,205.0 571.6,205.1 571.3,206.1 570.7,206.4 569.5,205.2 568.5,203.9 567.3,203.5 566.5,202.9 565.5,203.0 564.7,203.4 563.8,203.2 563.2,203.8 563.0,202.8 563.5,202.0 563.7,200.3 563.5,198.6 563.3,197.7 563.5,196.8 563.1,196.0Z"/>
<path fill="#e2f1e0" d="M570.7,206.4 571.3,206.1 571.6,205.1 572.1,205.0 573.4,205.5 574.3,205.2 575.0,205.3 575.3,204.9 582.3,204.9 582.7,203.7 582.4,203.4 581.6,195.9 580.7,188.3 583.4,188.3 589.3,192.1 595.2,195.9 595.6,196.8 596.7,197.2 597.5,197.5 597.5,198.6 599.5,198.5 599.5,202.5 598.5,203.7 598.4,204.8 596.8,205.0 594.4,205.2 593.8,205.8 592.6,205.9 591.5,205.9 591.1,205.5 590.1,205.8 588.5,206.5 588.2,207.1 586.8,207.8 586.6,208.3 585.8,208.7 585.0,208.4 584.5,208.8 584.2,210.1 582.9,211.5 582.9,212.1 582.4,212.8 582.5,213.9 581.8,214.1 581.4,214.3 581.1,213.6 580.6,213.8 580.3,213.7 580.0,214.3 578.7,214.2 578.2,214.0 577.9,214.1 577.4,213.6 577.5,213.1 577.3,212.9 576.9,213.1 577.0,212.5 577.3,212.1 576.6,211.3 576.4,210.8 576.0,210.5 575.7,210.4 575.3,210.7 574.7,210.9 574.2,211.3 573.5,211.1 573.0,210.7 572.7,210.6 572.2,210.9 571.9,210.9 571.9,210.2 571.9,209.7 571.8,209.0 571.1,208.5 570.8,207.5Z"/>
<path fill="#c7e4c6" d="M562.8,208.2 562.0,206.9 561.1,206.2 561.9,205.9 562.8,204.7 563.2,203.8 563.8,203.2 564.7,203.4 565.5,203.0 566.5,202.9 567.3,203.5 568.5,203.9 569.5,205.2 570.7,206.4 570.8,207.5 571.1,208.5 571.8,209.0 571.9,209.7 571.9,210.2 571.6,210.3 570.6,210.2 570.5,210.4 570.1,210.4 568.9,210.0 568.0,210.0 564.8,209.9 564.3,210.1 563.7,210.0 562.8,210.3 562.5,209.0 564.1,209.0 564.5,208.8 564.9,208.8 565.5,208.4 566.3,208.7 567.0,208.8 567.8,208.4 567.4,207.9 566.8,208.1 566.3,208.1 565.6,207.7 565.0,207.7 564.7,208.2Z"/>
<path fill="#c7e4c6" d="M562.5,209.0 562.8,208.2 564.7,208.2 565.0,207.7 565.6,207.7 566.3,208.1 566.8,208.1 567.4,207.9 567.8,208.4 567.0,208.8 566.3,208.7 565.5,208.4 564.9,208.8 564.5,208.8 564.1,209.0Z"/>
<path fill="#99cf97" d="M565.5,212.7 564.6,211.9 563.8,211.8 563.5,211.3 563.5,211.1 562.9,210.7 562.8,210.3 563.7,210.0 564.3,210.1 564.8,209.9 568.0,210.0 568.0,210.6 567.8,210.8 568.0,211.3 567.7,211.6 567.3,211.6 566.8,211.9 566.3,211.8Z"/>
<path fill="#f4f8f3" d="M577.2,218.5 576.7,218.5 576.4,219.2 575.9,219.2 575.5,218.8 575.7,218.1 574.9,217.1 574.5,217.2 574.1,217.3 573.6,217.4 573.6,216.7 573.4,216.3 573.4,215.8 573.0,215.0 572.5,214.4 571.1,214.4 570.7,214.7 570.2,214.8 570.0,215.2 569.8,215.7 568.8,216.4 568.0,215.4 567.4,214.7 566.9,214.5 566.5,214.1 566.3,213.3 566.0,213.0 565.5,212.7 566.3,211.8 566.8,211.9 567.3,211.6 567.7,211.6 568.0,211.3 567.8,210.8 568.0,210.6 568.0,210.0 568.9,210.0 570.1,210.4 570.5,210.4 570.6,210.2 571.6,210.3 571.9,210.2 571.9,210.9 572.2,210.9 572.7,210.6 573.0,210.7 573.5,211.1 574.2,211.3 574.7,210.9 575.3,210.7 575.7,210.4 576.0,210.5 576.4,210.8 576.6,211.3 577.3,212.1 577.0,212.5 576.9,213.1 577.3,212.9 577.5,213.1 577.4,213.6 577.9,214.1 577.6,214.3 577.5,214.9 577.9,215.6 578.3,217.0 577.6,217.2 577.5,217.4 577.6,217.8 577.5,218.5Z"/>
<path fill="#f4f8f3" d="M572.0,220.1 571.5,220.0 570.2,219.3 569.3,218.3 569.0,217.7 568.8,216.4 569.8,215.7 570.0,215.2 570.2,214.8 570.7,214.7 571.1,214.4 572.5,214.4 573.0,215.0 573.4,215.8 573.4,216.3 573.6,216.7 573.6,217.4 574.1,217.3 573.3,218.1 572.5,219.1 572.4,219.6Z"/>
<path fill="#f4f8f3" d="M578.5,224.4 578.1,224.4 576.2,223.5 574.7,222.2 573.2,221.3 572.0,220.1 572.4,219.6 572.5,219.1 573.3,218.1 574.1,217.3 574.5,217.2 574.9,217.1 575.7,218.1 575.5,218.8 575.9,219.2 576.4,219.2 576.7,218.5 577.2,218.5 577.1,219.1 577.3,219.9 577.0,220.7 577.5,221.2 578.0,221.3 578.8,222.0 578.8,222.7 578.6,222.9Z"/>
<path fill="#c7e4c6" d="M587.0,223.3 586.2,223.3 585.0,222.9 583.9,223.0 581.8,223.3 580.6,223.8 578.8,224.4 578.5,224.4 578.6,222.9 578.8,222.7 578.8,222.0 578.0,221.3 577.5,221.2 577.0,220.7 577.3,219.9 577.1,219.1 577.2,218.5 577.5,218.5 577.6,217.8 577.5,217.4 577.6,217.2 578.3,217.0 577.9,215.6 577.5,214.9 577.6,214.3 577.9,214.1 578.2,214.0 578.7,214.2 580.0,214.3 580.3,213.7 580.6,213.8 581.1,213.6 581.4,214.3 581.8,214.1 582.5,213.9 583.3,214.2 583.6,214.8 584.4,215.2 585.0,214.7 585.9,214.7 587.0,215.1 587.5,217.6 586.8,219.1 586.3,221.1 587.1,222.6Z"/>
<path fill="#e2f1e0" d="M587.0,215.1 585.9,214.7 585.0,214.7 584.4,215.2 583.6,214.8 583.3,214.2 582.5,213.9 582.4,212.8 582.9,212.1 582.9,211.5 584.2,210.1 584.5,208.8 585.0,208.4 585.8,208.7 586.6,208.3 586.8,207.8 588.2,207.1 588.5,206.5 590.1,205.8 591.1,205.5 591.5,205.9 592.6,205.9 592.5,206.7 592.8,207.5 593.7,208.7 593.8,209.5 595.8,209.9 595.8,211.1 595.4,211.6 594.5,211.8 594.2,212.6 593.6,212.8 592.0,212.7 591.2,212.6 590.7,212.9 589.9,212.7 586.9,212.8 586.8,213.8Z"/>
<path fill="#c7e4c6" d="M593.9,221.6 591.1,222.7 590.1,223.2 588.6,223.8 587.0,223.3 587.1,222.6 586.3,221.1 586.8,219.1 587.5,217.6 587.0,215.1 586.8,213.8 586.9,212.8 589.9,212.7 590.7,212.9 591.2,212.6 592.0,212.7 591.9,213.3 592.6,214.2 592.6,215.4 592.8,216.8 593.2,217.5 592.9,219.0 593.0,219.9 593.5,221.0Z"/>
<path fill="#c7e4c6" d="M593.6,212.8 593.3,213.7 593.9,214.2 594.5,214.8 594.6,215.7 594.9,216.0 594.8,220.0 595.3,221.3 593.9,221.6 593.5,221.0 593.0,219.9 592.9,219.0 593.2,217.5 592.8,216.8 592.6,215.4 592.6,214.2 591.9,213.3 592.0,212.7Z"/>
<path fill="#c7e4c6" d="M596.7,221.0 595.3,221.3 594.8,220.0 594.9,216.0 594.6,215.7 594.5,214.8 593.9,214.2 593.3,213.7 593.6,212.8 594.2,212.6 594.5,211.8 595.4,211.6 595.8,211.1 596.4,210.6 597.0,210.6 598.3,211.6 598.2,212.2 598.6,213.2 598.3,213.9 598.5,214.4 597.6,215.5 597.1,216.0 596.8,217.1 596.8,218.2Z"/>
<path fill="#f4f8f3" d="M595.8,211.1 595.8,209.9 593.8,209.5 593.7,208.7 592.8,207.5 592.5,206.7 592.6,205.9 593.8,205.8 594.4,205.2 596.8,205.0 598.4,204.8 598.5,203.7 599.5,202.5 599.5,198.5 601.9,197.7 607.0,194.3 613.0,190.9 615.8,191.7 616.7,192.6 618.0,192.0 618.4,194.7 619.1,195.2 619.1,195.7 619.8,196.3 619.5,197.1 618.8,200.6 618.7,202.9 616.4,204.6 615.7,206.9 616.4,207.5 616.4,208.6 617.5,208.7 617.4,209.5 616.9,209.6 616.8,210.2 616.5,210.2 615.3,208.3 614.9,208.2 613.5,209.2 612.2,208.7 611.2,208.6 610.7,208.8 609.7,208.8 608.7,209.5 607.8,209.5 605.6,208.7 604.8,209.1 603.9,209.0 603.3,208.4 601.5,207.7 599.6,207.9 599.2,208.3 598.9,209.3 598.4,210.0 598.3,211.6 597.0,210.6 596.4,210.6Z"/>
<path fill="#99cf97" d="M606.9,223.7 605.1,224.3 604.4,224.2 603.7,224.6 602.3,224.5 601.4,223.4 600.8,222.2 599.6,221.0 598.2,221.0 596.7,221.0 596.8,218.2 596.8,217.1 597.1,216.0 597.6,215.5 598.5,214.4 598.3,213.9 598.6,213.2 598.2,212.2 598.3,211.6 598.4,210.0 598.9,209.3 599.2,208.3 599.6,207.9 601.5,207.7 603.3,208.4 603.9,209.0 604.8,209.1 605.6,208.7 607.8,209.5 608.7,209.5 609.7,208.8 610.7,208.8 611.2,208.6 612.2,208.7 613.5,209.2 614.9,208.2 615.3,208.3 616.5,210.2 616.8,210.2 617.5,210.8 617.3,211.2 617.2,211.8 615.7,213.1 615.3,214.2 615.0,215.1 614.7,215.5 614.3,216.7 613.4,217.5 613.1,218.3 612.7,219.1 612.6,219.8 611.4,220.4 610.4,219.6 609.7,219.7 608.7,220.7 608.2,220.7 607.3,222.4Z"/>
<path fill="#c7e4c6" d="M614.9,228.0 614.7,227.9 613.6,228.2 612.6,227.9 611.7,228.0 608.9,228.0 609.1,226.6 608.5,225.5 607.7,225.2 607.3,224.4 606.9,224.1 606.9,223.7 607.3,222.4 608.2,220.7 608.7,220.7 609.7,219.7 610.4,219.6 611.4,220.4 612.6,219.8 612.7,219.1 613.1,218.3 613.4,217.5 614.3,216.7 614.7,215.5 615.0,215.1 615.3,214.2 615.7,213.1 617.2,211.8 617.3,211.2 617.5,210.8 616.8,210.2 616.9,209.6 617.4,209.5 618.1,210.6 618.2,211.8 618.1,212.9 619.1,214.5 618.1,214.5 617.6,214.6 616.8,214.5 616.4,215.3 617.4,216.3 618.2,216.6 618.5,217.3 619.0,218.5 618.7,219.0 617.9,220.8 617.4,221.1 617.3,222.5 617.5,223.2 617.3,223.7 618.2,224.6 618.3,225.3 619.0,226.2 619.8,226.7 619.8,227.5 620.0,228.0 619.9,229.0 618.5,228.6 617.1,228.1Z"/>
<path fill="#f4f8f3" d="M617.4,209.5 617.5,208.7 616.4,208.6 616.4,207.5 615.7,206.9 616.4,204.6 618.7,202.9 618.8,200.6 619.5,197.1 619.8,196.3 619.1,195.7 619.1,195.2 618.4,194.7 618.0,192.0 619.8,191.0 626.7,194.4 633.7,197.7 633.8,204.7 632.3,204.6 631.5,205.9 631.0,206.9 631.4,207.3 630.8,207.9 631.0,208.6 630.6,209.3 630.4,210.0 631.0,209.9 631.4,210.5 631.4,211.6 632.0,212.1 632.0,212.5 630.9,212.8 630.0,213.5 628.8,215.4 627.1,216.2 625.4,216.1 624.9,216.3 625.1,216.9 624.2,217.5 623.4,218.2 621.2,218.9 620.8,218.5 620.5,218.4 620.2,218.9 618.7,219.0 619.0,218.5 618.5,217.3 618.2,216.6 617.4,216.3 616.4,215.3 616.8,214.5 617.6,214.6 618.1,214.5 619.1,214.5 618.1,212.9 618.2,211.8 618.1,210.6Z"/>
<path fill="#f4f8f3" d="M618.7,219.0 620.2,218.9 620.5,218.4 620.8,218.5 621.2,218.9 623.4,218.2 624.2,217.5 625.1,216.9 624.9,216.3 625.4,216.1 627.1,216.2 628.8,215.4 630.0,213.5 630.9,212.8 632.0,212.5 632.2,213.3 633.2,214.3 633.2,215.1 632.9,215.8 633.1,216.3 633.7,216.8 635.0,217.6 635.9,218.3 636.0,218.9 637.1,219.8 637.9,220.5 638.3,221.6 639.6,222.3 639.9,222.8 639.3,223.0 638.2,223.0 636.9,222.8 636.2,223.0 636.0,223.4 635.4,223.4 634.7,223.1 632.8,223.9 632.0,223.8 631.7,223.9 631.2,224.9 629.9,224.6 628.6,224.4 627.5,223.8 626.1,223.2 625.1,223.8 624.4,224.7 624.3,225.9 623.2,225.8 622.0,225.5 620.9,226.4 620.0,228.0 619.8,227.5 619.8,226.7 619.0,226.2 618.3,225.3 618.2,224.6 617.3,223.7 617.5,223.2 617.3,222.5 617.4,221.1 617.9,220.8Z"/>
<path fill="#c7e4c6" d="M618.0,192.0 616.7,192.6 615.8,191.7 613.0,190.9 612.2,189.8 610.8,189.0 610.0,189.3 609.4,188.4 609.3,187.6 608.3,186.3 609.0,185.6 608.9,184.5 609.1,183.5 608.9,182.8 609.3,181.3 609.2,180.5 608.6,179.0 609.4,178.6 609.6,177.8 609.4,177.1 610.6,176.4 611.1,175.9 612.0,175.4 612.1,174.0 614.2,174.6 614.9,174.5 616.4,174.8 618.7,175.5 619.5,177.1 621.1,177.4 623.5,178.2 625.4,179.0 626.2,178.6 627.1,177.8 626.7,176.4 627.2,175.6 628.5,174.8 629.7,174.5 632.1,174.9 632.7,175.7 633.3,175.7 633.9,176.0 635.6,176.2 636.0,176.8 635.4,177.6 635.7,178.3 635.2,179.4 635.8,180.8 635.8,187.1 635.8,193.5 635.8,197.0 633.7,197.0 633.7,197.7 626.7,194.4 619.8,191.0Z"/>
<path fill="#c7e4c6" d="M608.6,179.0 607.9,175.8 606.8,175.1 606.8,174.7 605.3,173.7 605.2,172.3 606.2,171.3 606.7,169.9 606.4,168.2 606.7,167.3 608.6,166.6 609.9,166.8 609.8,167.7 611.3,167.1 611.4,167.4 610.5,168.3 610.5,169.1 611.1,169.5 610.9,171.0 609.8,171.9 610.1,172.9 611.0,172.9 611.4,173.7 612.1,174.0 612.0,175.4 611.1,175.9 610.6,176.4 609.4,177.1 609.6,177.8 609.4,178.6Z"/>
<path fill="#99cf97" d="M613.0,190.9 607.0,194.3 601.9,197.7 599.5,198.5 597.5,198.6 597.5,197.5 596.7,197.2 595.6,196.8 595.2,195.9 589.3,192.1 583.4,188.3 576.8,184.1 576.8,183.7 576.8,181.5 579.6,180.2 581.4,180.0 582.8,179.5 583.5,178.6 585.5,177.9 585.6,176.6 586.6,176.5 587.4,175.8 589.7,175.5 590.0,174.9 589.6,174.5 589.0,172.6 588.9,171.6 588.2,170.5 589.9,169.5 591.8,169.2 592.9,168.5 594.6,167.9 597.5,167.6 600.4,167.5 601.3,167.7 603.0,167.1 604.8,167.0 605.5,167.4 606.7,167.3 606.4,168.2 606.7,169.9 606.2,171.3 605.2,172.3 605.3,173.7 606.8,174.7 606.8,175.1 607.9,175.8 608.6,179.0 609.2,180.5 609.3,181.3 608.9,182.8 609.1,183.5 608.9,184.5 609.0,185.6 608.3,186.3 609.3,187.6 609.4,188.4 610.0,189.3 610.8,189.0 612.2,189.8Z"/>
<path fill="#5cab5e" d="M653.1,180.4 652.6,181.1 652.3,182.4 651.8,183.3 651.4,183.6 650.8,183.1 650.0,182.3 648.7,179.8 648.6,179.9 649.3,181.8 650.4,183.5 651.7,186.3 652.3,187.2 652.9,188.2 654.5,190.1 654.1,190.4 654.2,191.6 656.2,193.2 656.5,193.5 649.6,193.5 642.8,193.5 635.8,193.5 635.8,187.1 635.8,180.8 635.2,179.4 635.7,178.3 635.4,177.6 636.0,176.8 638.4,176.7 640.1,177.2 641.8,177.7 642.6,178.0 643.9,177.4 644.7,176.9 646.2,176.8 647.5,177.0 647.9,177.9 648.3,177.3 649.7,177.7 651.1,177.8 652.0,177.4Z"/>
<path fill="#c7e4c6" d="M656.5,193.5 657.1,195.2 656.7,195.5 656.9,197.3 657.6,199.4 658.3,199.9 659.2,200.5 658.3,201.5 657.0,201.8 656.5,202.3 656.3,203.5 655.6,206.1 655.8,206.8 655.5,208.3 654.8,210.0 653.7,210.9 653.0,212.2 652.8,212.9 652.0,213.4 651.4,215.2 651.4,216.8 651.2,217.3 650.3,217.4 649.7,218.4 650.7,218.5 651.6,219.3 651.9,220.0 652.7,220.5 653.8,222.4 652.6,223.5 651.5,224.6 650.4,225.4 649.2,225.4 647.8,225.8 646.7,225.4 646.0,225.9 644.4,224.7 644.0,223.9 643.0,224.3 642.2,224.2 641.8,224.5 641.0,224.3 639.9,222.8 639.6,222.3 638.3,221.6 637.9,220.5 637.1,219.8 636.0,218.9 635.9,218.3 635.0,217.6 633.7,216.8 633.1,216.3 632.9,215.8 633.2,215.1 633.2,214.3 632.2,213.3 632.0,212.5 632.0,212.1 631.4,211.6 631.4,210.5 631.0,209.9 630.4,210.0 630.6,209.3 631.0,208.6 630.8,207.9 631.4,207.3 631.0,206.9 631.5,205.9 632.3,204.6 633.8,204.7 633.7,197.7 633.7,197.0 635.8,197.0 635.8,193.5 642.8,193.5 649.6,193.5Z"/>
<path fill="#368a3e" d="M562.4,182.3 563.8,181.9 563.3,183.0Z"/>
<path fill="#368a3e" d="M564.4,183.0 565.0,182.7 565.0,183.3Z"/>
<path fill="#368a3e" d="M566.6,182.8 567.9,181.6 567.7,182.7Z"/>
<path fill="#f4f8f3" d="M550.0,205.8 550.9,205.2 550.9,205.9Z"/>
<path fill="#f4f8f3" d="M547.7,202.1 548.2,201.9 548.2,202.4Z"/>
<path fill="#f4f8f3" d="M551.8,203.7 552.3,203.7 552.1,204.0Z"/>
<path fill="#f4f8f3" d="M666.1,210.1 665.5,209.5 664.8,208.5 664.0,207.9 663.6,207.3 662.1,206.6 660.8,206.6 660.4,206.2 659.4,206.6 658.3,205.8 657.8,207.1 655.8,206.8 655.6,206.1 656.3,203.5 656.5,202.3 657.0,201.8 658.3,201.5 659.2,200.5 660.2,202.5 660.7,204.1 661.7,205.0 664.1,206.6 665.0,207.6 666.0,208.7 666.5,209.2 667.4,209.8 666.9,210.2Z"/>
<path fill="#e2f1e0" d="M667.4,209.8 667.8,210.3 667.8,211.1 666.8,211.5 667.5,211.9 666.9,212.9 666.5,212.6 666.0,212.7 665.1,212.7 665.0,212.1 664.9,211.6 665.5,210.8 666.1,210.1 666.9,210.2Z"/>
<path fill="#c7e4c6" d="M658.3,205.8 659.4,206.6 660.4,206.2 660.8,206.6 662.1,206.6 663.6,207.3 664.0,207.9 664.8,208.5 665.5,209.5 666.1,210.1 665.5,210.8 664.9,211.6 665.0,212.1 665.1,212.7 666.0,212.7 666.5,212.6 666.9,212.9 666.5,213.5 667.1,214.5 667.8,215.3 668.4,215.9 674.2,218.0 675.6,218.0 670.7,223.2 668.4,223.3 666.8,224.6 665.7,224.6 665.3,225.1 664.0,225.1 663.3,224.5 661.7,225.3 661.2,226.0 660.1,225.9 659.7,225.7 659.3,225.7 658.7,225.7 656.5,224.2 655.3,224.2 654.7,223.6 654.7,222.7 653.8,222.4 652.7,220.5 651.9,220.0 651.6,219.3 650.7,218.5 649.7,218.4 650.3,217.4 651.2,217.3 651.4,216.8 651.4,215.2 652.0,213.4 652.8,212.9 653.0,212.2 653.7,210.9 654.8,210.0 655.5,208.3 655.8,206.8 657.8,207.1Z"/>
<path fill="#f4f8f3" d="M679.0,211.7 680.0,211.6 680.8,211.0 681.4,211.0 681.5,211.4 681.3,212.5 681.3,213.4 681.0,214.0 680.5,215.9 679.6,217.9 678.5,220.1 677.0,222.7 675.5,224.6 673.5,227.0 671.7,228.4 669.1,230.2 667.5,231.5 665.6,233.6 665.2,234.5 664.8,234.9 663.7,233.5 663.7,227.1 665.3,225.1 665.7,224.6 666.8,224.6 668.4,223.3 670.7,223.2 675.6,218.0 674.2,218.0 668.4,215.9 667.8,215.3 667.1,214.5 666.5,213.5 666.9,212.9 667.5,211.9 668.1,212.3 668.4,213.0 669.2,213.7 670.1,213.7 671.7,213.3 673.6,213.1 675.2,212.5 676.0,212.4 676.7,212.1 677.7,212.0 678.2,212.0Z"/>
<path fill="#99cf97" d="M663.7,233.5 664.8,234.9 663.5,235.6 663.1,236.4 662.5,236.5 662.2,237.7 661.6,238.4 661.3,239.6 660.6,240.2 658.1,238.4 658.0,237.4 651.6,233.9 651.3,233.7 651.3,231.8 651.8,231.1 652.7,229.9 653.3,228.7 652.5,226.7 652.3,225.8 651.5,224.6 652.6,223.5 653.8,222.4 654.7,222.7 654.7,223.6 655.3,224.2 656.5,224.2 658.7,225.7 659.3,225.7 659.7,225.7 660.1,225.9 661.2,226.0 661.7,225.3 663.3,224.5 664.0,225.1 665.3,225.1 663.7,227.1Z"/>
<path fill="#c7e4c6" d="M647.8,233.8 645.8,233.8 645.2,234.0 644.2,234.5 643.8,234.3 643.8,233.0 644.2,232.4 644.3,230.9 644.7,230.1 645.3,229.2 646.0,228.8 646.5,228.2 645.8,227.9 646.0,225.9 646.7,225.4 647.8,225.8 649.2,225.4 650.4,225.4 651.5,224.6 652.3,225.8 652.5,226.7 653.3,228.7 652.7,229.9 651.8,231.1 651.3,231.8 651.3,233.7Z"/>
<path fill="#c7e4c6" d="M651.3,233.7 651.6,233.9 658.0,237.4 658.1,238.4 660.6,240.2 659.8,242.3 659.9,243.3 661.0,244.0 661.1,244.4 660.6,245.5 660.7,246.0 660.6,246.9 661.2,247.9 661.9,249.7 662.6,250.1 661.2,251.1 659.3,251.8 658.2,251.7 657.6,252.2 656.4,252.3 655.9,252.5 653.8,252.0 652.5,252.2 652.0,249.8 651.4,249.0 651.0,248.5 649.3,248.2 648.3,247.6 647.2,247.3 646.5,247.0 645.8,246.6 644.9,244.4 643.8,243.4 643.5,242.4 643.7,241.5 643.3,239.9 644.1,239.8 644.7,239.2 645.4,238.2 645.8,237.9 645.8,237.3 645.4,236.9 645.3,236.2 645.8,236.0 645.9,235.0 645.2,234.0 645.8,233.8 647.8,233.8Z"/>
<path fill="#c7e4c6" d="M645.2,234.0 645.9,235.0 645.8,236.0 645.3,236.2 644.4,236.1 643.9,237.1 642.8,237.0 643.0,236.0 643.2,235.9 643.3,234.8 643.8,234.3 644.2,234.5Z"/>
<path fill="#e2f1e0" d="M643.3,239.9 643.2,237.8 642.8,237.0 643.9,237.1 644.4,236.1 645.3,236.2 645.4,236.9 645.8,237.3 645.8,237.9 645.4,238.2 644.7,239.2 644.1,239.8Z"/>
<path fill="#c7e4c6" d="M646.0,225.9 645.8,227.9 646.5,228.2 646.0,228.8 645.3,229.2 644.7,230.1 644.3,230.9 644.2,232.4 643.8,233.0 643.8,234.3 643.3,234.8 643.2,235.9 643.0,236.0 642.8,237.0 643.2,237.8 643.3,239.9 643.7,241.5 643.5,242.4 643.8,243.4 644.9,244.4 645.8,246.6 645.1,246.4 642.8,246.7 642.3,246.9 641.8,248.0 642.2,248.8 641.9,250.9 641.6,252.6 642.1,252.9 643.3,253.6 643.8,253.3 644.0,255.2 642.6,255.2 641.9,254.2 641.3,253.5 639.9,253.2 639.5,252.3 638.5,252.9 637.1,252.6 636.5,251.8 635.4,251.7 634.5,251.7 634.5,251.2 633.8,251.1 633.1,251.0 632.0,251.3 631.2,251.2 630.8,251.4 630.9,249.3 630.3,248.7 630.1,247.6 630.4,246.5 630.1,245.9 630.0,244.8 627.9,244.8 628.0,244.1 627.2,244.1 627.1,244.5 626.0,244.5 625.5,245.5 625.3,246.0 624.3,245.7 623.7,246.0 622.6,246.1 621.9,245.2 621.5,244.6 621.0,243.6 620.6,242.3 615.4,242.3 614.8,242.5 614.3,242.4 613.6,242.7 613.3,242.1 613.8,241.9 613.8,241.2 614.1,240.7 614.8,240.4 615.2,240.5 615.8,239.9 616.7,239.9 616.9,240.4 617.5,240.7 618.5,239.6 619.6,238.8 620.0,238.2 619.9,236.7 620.7,235.0 621.5,234.2 622.7,233.3 622.9,232.7 622.9,232.1 623.2,231.5 623.1,230.5 623.3,229.0 623.7,227.9 624.2,226.9 624.3,225.9 624.4,224.7 625.1,223.8 626.1,223.2 627.5,223.8 628.6,224.4 629.9,224.6 631.2,224.9 631.7,223.9 632.0,223.8 632.8,223.9 634.7,223.1 635.4,223.4 636.0,223.4 636.2,223.0 636.9,222.8 638.2,223.0 639.3,223.0 639.9,222.8 641.0,224.3 641.8,224.5 642.2,224.2 643.0,224.3 644.0,223.9 644.4,224.7Z"/>
<path fill="#f4f8f3" d="M614.7,240.4 614.1,239.8 613.6,240.1 612.8,240.8 611.4,239.0 612.8,238.0 612.1,236.8 612.7,236.4 613.9,236.2 614.0,235.4 614.9,236.3 616.5,236.3 617.0,235.5 617.3,234.3 617.1,233.0 616.2,231.9 617.0,229.9 616.6,229.6 615.2,229.7 614.8,228.8 614.9,228.0 617.1,228.1 618.5,228.6 619.9,229.0 620.0,228.0 620.9,226.4 622.0,225.5 623.2,225.8 624.3,225.9 624.2,226.9 623.7,227.9 623.3,229.0 623.1,230.5 623.2,231.5 622.9,232.1 622.9,232.7 622.7,233.3 621.5,234.2 620.7,235.0 619.9,236.7 620.0,238.2 619.6,238.8 618.5,239.6 617.5,240.7 616.9,240.4 616.7,239.9 615.8,239.9 615.2,240.5Z"/>
<path fill="#e2f1e0" d="M611.4,239.0 609.6,237.2 608.5,235.7 607.4,233.9 607.5,233.4 607.8,232.8 608.3,231.5 608.6,230.2 609.2,230.1 611.8,230.1 611.7,228.0 612.6,227.9 613.6,228.2 614.7,227.9 614.9,228.0 614.8,228.8 615.2,229.7 616.6,229.6 617.0,229.9 616.2,231.9 617.1,233.0 617.3,234.3 617.0,235.5 616.5,236.3 614.9,236.3 614.0,235.4 613.9,236.2 612.7,236.4 612.1,236.8 612.8,238.0Z"/>
<path fill="#e2f1e0" d="M608.6,230.2 608.3,230.0 608.9,228.0 611.7,228.0 611.8,230.1 609.2,230.1Z"/>
<path fill="#e2f1e0" d="M606.9,225.9 607.6,225.5 607.4,226.2Z"/>
<path fill="#f4f8f3" d="M603.4,231.7 603.7,231.3 603.7,231.8Z"/>
<path fill="#f4f8f3" d="M620.6,242.3 621.0,243.6 621.5,244.6 621.9,245.2 622.6,246.1 623.7,246.0 624.3,245.7 625.3,246.0 625.5,245.5 626.0,244.5 627.1,244.5 627.2,244.1 628.0,244.1 627.9,244.8 630.0,244.8 630.1,245.9 630.4,246.5 630.1,247.6 630.3,248.7 630.9,249.3 630.8,251.4 631.2,251.2 632.0,251.3 633.1,251.0 633.8,251.1 634.0,251.7 633.8,252.5 634.1,253.3 633.9,254.0 634.0,254.6 630.4,254.6 630.3,260.1 631.5,261.6 632.6,262.7 629.4,263.4 625.2,263.1 624.0,262.3 616.9,262.4 616.6,262.5 615.6,261.7 614.4,261.6 613.4,261.9 612.5,262.3 612.4,261.2 612.6,259.6 613.2,258.0 613.3,257.3 613.9,255.7 614.3,255.0 615.3,253.8 615.9,253.1 616.0,251.8 616.0,250.8 615.4,250.1 615.0,249.1 614.5,248.0 614.6,247.7 615.2,247.0 614.6,245.3 614.3,244.1 613.4,243.0 613.6,242.7 614.3,242.4 614.8,242.5 615.4,242.3Z"/>
<path fill="#f4f8f3" d="M613.8,241.9 613.3,242.1 612.8,240.8 613.6,240.1 614.1,239.8 614.8,240.4 614.1,240.7 613.8,241.2Z"/>
<path fill="#c7e4c6" d="M649.3,248.2 650.2,248.9 650.6,250.4 650.3,250.9 649.9,252.3 650.3,253.8 649.7,254.4 649.2,256.0 650.1,256.4 644.8,257.9 645.0,259.1 643.7,259.4 642.7,260.1 642.5,260.7 641.8,260.8 640.3,262.3 639.3,263.4 638.7,263.4 638.2,263.2 636.2,263.0 635.9,262.9 635.9,262.8 635.2,262.4 634.1,262.3 632.6,262.7 631.5,261.6 630.3,260.1 630.4,254.6 634.0,254.6 633.9,254.0 634.1,253.3 633.8,252.5 634.0,251.7 633.8,251.1 634.5,251.2 634.5,251.7 635.4,251.7 636.5,251.8 637.1,252.6 638.5,252.9 639.5,252.3 639.9,253.2 641.3,253.5 641.9,254.2 642.6,255.2 644.0,255.2 643.8,253.3 643.3,253.6 642.1,252.9 641.6,252.6 641.9,250.9 642.2,248.8 641.8,248.0 642.3,246.9 642.8,246.7 645.1,246.4 645.8,246.6 646.5,247.0 647.2,247.3 648.3,247.6Z"/>
<path fill="#c7e4c6" d="M652.5,252.2 652.0,253.5 652.5,255.8 653.1,255.7 653.7,256.3 654.5,257.6 654.6,259.8 653.8,260.2 653.3,261.4 652.2,260.3 652.0,259.1 652.4,258.3 652.3,257.6 651.6,257.1 651.1,257.3 650.1,256.4 649.2,256.0 649.7,254.4 650.3,253.8 649.9,252.3 650.3,250.9 650.6,250.4 650.2,248.9 649.3,248.2 651.0,248.5 651.4,249.0 652.0,249.8Z"/>
<path fill="#c7e4c6" d="M652.5,252.2 653.8,252.0 655.9,252.5 656.4,252.3 657.6,252.2 658.2,251.7 659.3,251.8 661.2,251.1 662.6,250.1 662.8,250.8 662.8,252.6 663.0,254.1 663.0,256.9 663.4,257.7 662.8,259.0 662.2,260.2 661.0,261.3 659.4,261.9 657.5,262.8 655.5,264.7 654.8,265.0 653.6,266.2 652.9,266.6 652.7,267.9 653.6,269.2 653.9,270.2 653.9,270.7 654.2,270.7 654.2,272.4 653.9,273.2 654.3,273.5 654.1,274.2 653.3,274.8 651.9,275.4 649.8,276.4 649.0,277.0 649.2,277.8 649.6,277.9 649.5,278.8 648.1,278.8 648.0,278.0 647.7,277.2 647.6,276.6 647.9,274.6 647.4,273.4 646.6,270.9 648.4,269.0 648.9,267.7 649.2,267.5 649.3,266.5 649.1,266.0 649.1,264.7 649.5,263.5 649.5,261.2 648.6,260.7 647.7,260.6 647.4,260.1 646.5,259.8 645.1,259.8 645.0,259.1 644.8,257.9 650.1,256.4 651.1,257.3 651.6,257.1 652.3,257.6 652.4,258.3 652.0,259.1 652.2,260.3 653.3,261.4 653.8,260.2 654.6,259.8 654.5,257.6 653.7,256.3 653.1,255.7 652.5,255.8 652.0,253.5Z"/>
<path fill="#c7e4c6" d="M646.6,270.9 645.7,270.8 645.1,271.0 644.2,270.7 643.5,270.7 642.4,269.9 641.0,269.6 640.5,268.5 640.5,267.9 639.8,267.7 637.8,265.8 637.2,264.7 636.9,264.4 636.2,263.0 638.2,263.2 638.7,263.4 639.3,263.4 640.3,262.3 641.8,260.8 642.5,260.7 642.7,260.1 643.7,259.4 645.0,259.1 645.1,259.8 646.5,259.8 647.4,260.1 647.7,260.6 648.6,260.7 649.5,261.2 649.5,263.5 649.1,264.7 649.1,266.0 649.3,266.5 649.2,267.5 648.9,267.7 648.4,269.0Z"/>
<path fill="#c7e4c6" d="M636.9,264.4 637.2,264.7 637.8,265.8 639.8,267.7 640.5,267.9 640.5,268.5 641.0,269.6 642.4,269.9 643.5,270.7 641.0,272.0 639.5,273.2 638.9,274.4 638.4,275.1 637.4,275.2 637.1,276.0 636.9,276.6 635.8,277.0 634.4,276.9 633.5,276.4 632.8,276.2 631.9,276.6 631.5,277.5 630.7,278.0 629.8,278.8 628.6,279.0 628.2,278.3 628.3,277.3 627.3,275.6 626.8,275.3 626.8,270.2 628.5,270.2 628.6,263.9 629.9,263.9 632.6,263.3 633.3,264.0 634.4,263.3 634.9,263.3 635.9,262.9 636.2,263.0Z"/>
<path fill="#c7e4c6" d="M620.6,282.0 619.3,280.7 618.6,279.4 618.2,277.7 617.8,276.4 617.2,273.7 617.2,271.7 617.0,270.7 616.3,270.0 615.4,268.5 614.5,266.4 614.1,265.3 612.6,263.6 612.5,262.3 613.4,261.9 614.4,261.6 615.6,261.7 616.6,262.5 616.9,262.4 624.0,262.3 625.2,263.1 629.4,263.4 632.6,262.7 634.1,262.3 635.2,262.4 635.9,262.8 635.9,262.9 634.9,263.3 634.4,263.3 633.3,264.0 632.6,263.3 629.9,263.9 628.6,263.9 628.5,270.2 626.8,270.2 626.8,275.3 626.8,281.8 625.2,282.7 624.3,282.8 623.2,282.5 622.4,282.4 622.1,281.6 621.4,281.1Z"/>
<path fill="#5cab5e" d="M647.2,283.2 646.8,283.4 646.1,284.3 645.6,285.2 644.6,286.5 642.6,288.3 641.4,289.3 640.1,290.2 638.2,290.8 637.3,290.9 637.1,291.4 636.0,291.1 635.2,291.5 633.3,291.1 632.2,291.4 631.5,291.3 629.7,292.0 628.2,292.2 627.1,292.9 626.3,292.9 625.6,292.3 625.0,292.3 624.2,291.5 624.2,291.7 623.9,291.3 623.9,290.2 623.4,289.1 623.9,288.8 623.9,287.4 622.7,285.8 621.9,284.3 620.6,282.0 621.4,281.1 622.1,281.6 622.4,282.4 623.2,282.5 624.3,282.8 625.2,282.7 626.8,281.8 626.8,275.3 627.3,275.6 628.3,277.3 628.2,278.3 628.6,279.0 629.8,278.8 630.7,278.0 631.5,277.5 631.9,276.6 632.8,276.2 633.5,276.4 634.4,276.9 635.8,277.0 636.9,276.6 637.1,276.0 637.4,275.2 638.4,275.1 638.9,274.4 639.5,273.2 641.0,272.0 643.5,270.7 644.2,270.7 645.1,271.0 645.7,270.8 646.6,270.9 647.4,273.4 647.9,274.6 647.6,276.6 647.7,277.2 646.8,276.9 646.3,277.0 646.2,277.5 645.7,278.2 645.7,278.8 646.7,279.8 647.8,279.6 648.1,278.8 649.5,278.8 649.0,280.1 648.8,281.5 648.4,282.3Z"/>
<path fill="#f4f8f3" d="M642.7,282.7 643.3,283.2 642.8,284.0 642.5,284.6 641.5,284.9 641.2,285.5 640.6,285.6 639.2,284.3 640.2,283.2 641.1,282.5 641.9,282.1Z"/>
<path fill="#e2f1e0" d="M648.1,278.8 647.8,279.6 646.7,279.8 645.7,278.8 645.7,278.2 646.2,277.5 646.3,277.0 646.8,276.9 647.7,277.2 648.0,278.0Z"/>
<path fill="#e2f1e0" d="M678.7,253.8 679.2,254.6 679.6,255.7 679.9,257.8 680.3,258.7 680.2,259.5 679.9,260.0 679.3,259.0 678.9,259.5 679.3,260.8 679.1,261.5 678.6,261.9 678.5,263.4 677.8,265.5 677.0,267.9 675.9,271.2 675.2,273.6 674.4,275.6 673.0,276.1 671.5,276.8 670.5,276.4 669.1,275.7 668.6,274.8 668.5,273.2 667.9,271.9 667.7,270.6 668.0,269.3 668.8,269.0 668.8,268.5 669.6,267.1 669.8,266.0 669.4,265.2 669.1,264.1 668.9,262.5 669.5,261.5 669.8,260.4 670.6,260.3 671.6,259.9 672.3,259.6 673.0,259.6 674.0,258.6 675.5,257.5 676.0,256.7 675.8,255.9 676.5,256.1 677.5,254.9 677.5,253.9 678.1,253.1Z"/>
<path fill="#f4f8f3" d="M667.6,251.9 668.1,251.9 668.1,252.8 667.6,252.7Z"/>
<path fill="#f4f8f3" d="M670.8,254.2 671.3,254.2 671.1,254.8Z"/>
<path fill="#368a3e" d="M688.6,268.8 689.6,268.6 689.6,269.3 689.0,269.4Z"/>
<path fill="#f4f8f3" d="M692.3,267.2 693.1,267.2 693.0,267.9 692.3,267.7Z"/>
<path fill="#27692a" d="M843.2,256.1 843.9,257.5 845.0,256.8 845.6,257.5 846.4,258.2 846.2,259.0 846.6,260.5 846.9,261.4 847.3,261.6 847.8,263.1 847.6,264.0 848.2,265.2 850.1,266.1 851.3,266.9 852.5,267.7 852.3,268.1 853.3,269.2 853.9,271.1 854.6,270.7 855.3,271.5 855.8,271.2 856.1,273.1 857.3,274.1 858.1,274.8 859.5,276.2 860.0,277.6 860.0,278.6 859.9,279.7 860.7,281.2 860.6,282.8 860.3,283.6 859.9,285.1 859.9,286.1 859.6,287.4 858.8,289.0 857.5,289.8 856.8,291.2 856.3,292.0 855.7,293.5 855.1,294.4 854.6,295.7 854.4,296.9 854.5,297.5 853.5,298.1 851.5,298.2 849.9,298.9 849.1,299.6 848.1,300.3 846.6,299.5 845.5,299.2 845.8,298.3 844.9,298.7 843.3,299.9 841.8,299.4 840.8,299.2 839.8,299.0 838.1,298.5 837.0,297.4 836.7,296.1 836.2,294.5 835.4,294.5 833.7,294.3 834.3,293.5 833.9,292.2 833.0,293.4 831.5,293.7 832.4,292.7 832.6,291.7 833.3,290.9 833.2,289.6 831.8,291.1 830.6,291.7 830.0,293.1 828.6,292.3 828.7,291.4 827.6,290.1 826.7,289.5 827.0,289.1 824.7,288.0 823.5,288.0 821.8,287.1 818.7,287.3 816.4,288.4 814.4,288.5 812.8,288.4 810.9,289.3 809.4,289.7 809.1,290.6 808.4,291.3 806.9,291.3 805.8,291.5 804.3,291.2 803.0,291.4 801.8,291.5 800.8,292.4 800.3,292.3 799.4,292.8 798.5,293.4 797.3,293.3 796.1,293.3 794.2,292.2 793.3,291.9 793.3,290.8 794.2,290.6 794.5,290.2 794.4,289.6 794.6,288.4 794.5,287.3 793.5,285.6 793.2,284.6 793.3,283.6 792.6,282.4 792.6,281.9 791.8,281.2 791.6,279.8 790.6,278.4 790.3,277.7 791.1,278.5 790.5,276.8 791.4,277.3 791.9,278.0 791.9,277.1 791.0,275.8 790.9,275.2 790.4,274.7 790.6,273.7 791.0,273.2 791.2,272.4 791.0,271.3 791.8,270.1 791.9,271.4 792.6,270.2 794.1,269.6 794.9,268.9 796.2,268.2 797.0,268.1 797.5,268.3 798.9,267.6 800.0,267.5 800.2,267.1 800.7,266.9 801.7,267.0 803.5,266.4 804.5,265.7 804.9,264.7 805.9,263.9 806.0,263.1 806.0,262.2 807.3,260.7 808.0,262.2 808.8,261.9 808.1,261.1 808.7,260.2 809.5,260.6 809.7,259.2 810.6,258.4 811.0,257.7 811.9,257.4 812.0,256.9 812.7,257.1 812.7,256.7 813.5,256.4 814.4,256.2 815.6,257.0 816.6,258.0 817.7,258.0 818.8,258.2 818.5,257.2 819.3,255.8 820.1,255.4 819.8,254.9 820.6,253.9 821.6,253.3 822.5,253.5 824.0,253.2 824.0,252.3 822.7,251.7 823.6,251.5 824.8,251.9 825.7,252.6 827.2,253.1 827.7,252.9 828.8,253.4 829.8,252.9 830.5,253.1 830.9,252.8 831.7,253.6 831.2,254.6 830.5,255.3 829.9,255.3 830.1,256.0 829.6,256.9 829.0,257.8 829.1,258.2 830.5,259.2 831.9,259.8 832.8,260.4 834.0,261.4 834.5,261.4 835.4,261.9 835.7,262.4 837.4,263.0 838.5,262.4 838.9,261.5 839.2,260.7 839.5,259.7 840.0,258.3 839.7,257.5 839.9,257.0 839.7,256.0 839.9,254.6 840.2,254.3 840.0,253.7 840.4,252.8 840.7,251.8 840.7,251.3 841.4,250.7 841.9,251.5 842.0,252.6 842.5,252.8 842.5,253.6 843.2,254.5 843.3,255.4Z"/>
<path fill="#27692a" d="M846.5,303.4 848.1,304.0 849.1,303.8 850.5,303.4 851.5,303.5 851.6,305.6 851.0,306.2 850.8,307.6 850.2,307.1 849.0,308.4 848.7,308.3 847.6,308.2 846.5,306.7 846.3,305.6 845.3,304.0 845.3,303.2Z"/>
<path fill="#27692a" d="M820.2,251.9 821.8,251.6 822.1,252.3 820.5,252.7Z"/>
<path fill="#27692a" d="M831.0,294.6 832.8,294.3 833.5,294.8 831.8,295.0Z"/>
<path fill="#5cab5e" d="M894.8,303.6 895.2,304.3 896.4,303.6 896.9,304.4 896.9,305.1 896.3,305.9 895.1,307.2 894.2,307.9 894.9,308.7 893.5,308.8 892.0,309.4 891.6,310.6 890.6,312.3 889.2,313.1 888.3,313.6 886.7,313.6 885.6,313.0 883.7,312.9 883.4,312.2 884.3,310.9 886.5,309.2 887.7,308.9 888.9,308.2 890.4,307.3 891.5,306.4 892.2,305.1 892.9,304.6 893.2,303.7 894.4,302.9Z"/>
<path fill="#5cab5e" d="M897.6,295.3 898.8,297.1 898.9,295.9 899.7,296.4 899.9,297.7 901.3,298.3 902.5,298.4 903.5,297.8 904.4,298.0 904.0,299.5 903.4,300.5 902.1,300.5 901.6,301.0 901.8,301.8 901.6,302.1 900.9,303.1 900.0,304.3 898.7,305.0 898.4,304.5 897.6,304.2 898.7,302.8 898.1,301.8 896.2,301.1 896.2,300.5 897.5,299.9 897.8,298.6 897.7,297.4 897.0,296.2 897.1,295.9 896.2,295.2 894.8,293.7 894.1,292.4 894.8,292.3 895.7,293.3 897.1,293.7Z"/>
<path fill="#5cab5e" d="M885.1,314.1 886.3,313.9 886.2,314.6 885.3,314.6Z"/>
<path fill="#f4f8f3" d="M849.6,244.9 851.1,246.1 852.3,247.9 853.3,247.9 853.2,248.6 854.6,248.9 854.0,249.3 855.9,250.0 855.7,250.5 854.6,250.6 854.1,250.2 852.6,250.0 850.8,249.7 849.5,248.6 848.5,247.6 847.6,246.1 845.3,245.4 843.8,245.9 842.8,246.4 843.0,247.7 841.6,248.3 840.6,248.0 838.8,248.0 838.8,236.6 841.8,237.8 845.0,238.8 846.2,239.6 847.2,240.5 847.5,241.6 850.4,242.6 850.8,243.6 849.2,243.8Z"/>
<path fill="#f4f8f3" d="M858.0,241.6 857.1,241.7 856.8,242.2 855.8,242.6 854.9,243.1 854.0,243.1 852.6,242.6 851.6,242.1 851.7,241.5 853.3,241.8 854.2,241.6 854.5,240.8 854.7,240.8 854.9,241.7 855.9,241.6 856.4,240.9 857.4,240.3 857.2,239.3 858.2,239.3 858.6,239.5 858.6,240.5Z"/>
<path fill="#f4f8f3" d="M864.8,243.9 864.3,244.1 863.5,243.4 862.8,242.3 862.4,241.0 862.6,240.8 862.8,241.3 863.4,241.7 864.2,242.8 865.0,243.4Z"/>
<path fill="#f4f8f3" d="M875.7,250.3 876.2,251.0 875.0,250.9 874.3,249.8 875.4,250.3Z"/>
<path fill="#f4f8f3" d="M873.5,249.3 872.8,249.3 871.7,249.1 871.4,248.9 871.5,248.2 872.6,248.4 873.2,248.8Z"/>
<path fill="#f4f8f3" d="M874.9,248.8 874.7,249.1 873.4,247.6 873.0,246.6 873.6,246.6 874.2,248.0Z"/>
<path fill="#f4f8f3" d="M871.8,246.6 871.9,246.9 870.5,246.2 869.5,245.6 868.9,245.0 869.1,244.8 869.9,245.2 871.4,246.0Z"/>
<path fill="#f4f8f3" d="M867.7,244.9 867.3,244.9 866.6,244.6 865.9,243.8 865.9,243.6 867.0,244.3Z"/>
<path fill="#f4f8f3" d="M885.7,260.8 885.2,261.1 884.6,260.3 884.6,259.8Z"/>
<path fill="#f4f8f3" d="M884.4,258.1 884.7,259.5 884.2,259.3 883.9,259.4 883.6,258.9 883.6,257.6Z"/>
<path fill="#f4f8f3" d="M886.3,262.6 886.9,262.8 886.5,263.3Z"/>
<path fill="#368a3e" d="M882.1,268.9 883.5,270.0 884.5,270.8 883.8,271.2 882.8,270.7 881.6,269.9 880.5,269.0 879.3,267.8 879.1,267.2 879.8,267.2 880.8,267.8 881.6,268.4Z"/>
<path fill="#f4f8f3" d="M904.1,262.3 904.8,262.9 904.5,263.8 903.4,264.0 902.4,263.8 902.3,263.0 902.9,262.4 903.7,262.6Z"/>
<path fill="#f4f8f3" d="M905.9,261.4 904.8,261.8 904.5,261.1 905.4,260.8 906.0,260.7 907.0,260.1 907.0,261.0Z"/>
<path fill="#1b511e" d="M845.0,208.7 845.6,208.2 845.6,208.7Z"/>
<path fill="#f4f8f3" d="M833.5,215.4 834.0,215.2 833.7,215.6Z"/>
<path fill="#f4f8f3" d="M868.7,220.1 869.2,219.8 869.0,220.1Z"/>
<path fill="#f4f8f3" d="M876.9,222.7 877.4,222.6 877.2,222.9Z"/>
<path fill="#f4f8f3" d="M894.6,229.7 895.1,229.2 894.9,229.9Z"/>
<path fill="#f4f8f3" d="M894.4,226.8 894.8,226.2 894.8,226.9Z"/>
<path fill="#f4f8f3" d="M897.2,233.2 897.7,232.9 897.5,233.8Z"/>
<path fill="#f4f8f3" d="M688.8,240.1 689.3,239.9 689.1,240.4Z"/>
<path fill="#f4f8f3" d="M289.6,255.6 290.7,255.6 291.9,256.5 290.1,256.3Z"/>
<path fill="#f4f8f3" d="M285.1,268.9 285.8,268.9 285.4,269.3Z"/>
<path fill="#1b511e" d="M319.0,198.8 320.8,198.1 321.1,197.7 319.2,196.5 318.8,197.5Z"/>
<path fill="#1b511e" d="M317.8,195.4 319.0,195.6 318.3,195.9Z"/>
<path fill="#1b511e" d="M315.0,194.4 316.0,194.7 315.5,194.0Z"/>
<path fill="#1b511e" d="M312.3,193.3 313.2,193.2 313.1,193.7Z"/>
<path fill="#c7e4c6" d="M431.9,232.5 432.8,232.7 432.8,233.8 432.0,233.6Z"/>
<path fill="#f4f8f3" d="M483.9,204.0 484.9,203.5 484.4,204.2Z"/>
<path fill="#f4f8f3" d="M484.9,205.9 485.6,206.3 485.2,206.8Z"/>
<path fill="#f4f8f3" d="M485.1,207.7 485.4,207.8 485.2,208.0Z"/>
<path fill="#f4f8f3" d="M487.5,208.7 488.1,208.9 487.7,209.2Z"/>
<path fill="#f4f8f3" d="M470.9,210.3 471.8,210.7 471.4,211.0Z"/>
<path fill="#f4f8f3" d="M478.4,175.5 479.0,175.3 478.8,175.6Z"/>
<path fill="#5cab5e" d="M561.7,174.6 562.8,174.6 562.6,174.9Z"/>
<path fill="#368a3e" d="M330.0,262.6 330.9,262.8 330.7,263.3Z"/>
<path fill="#368a3e" d="M346.5,247.4 347.2,247.6 346.8,247.9Z"/>
</g>
<g stroke="none">
<rect x="269" y="75" width="18" height="54" rx="9" fill="#003f04"/>
<rect x="260" y="92.5" width="36" height="18.5" rx="9.2" fill="#003f04"/>
<path d="M278.1 78.6 L283.4 88 L272.8 88 Z M278.1 125.2 L283.4 116.2 L272.8 116.2 Z M264 102 L273.6 96.5 L273.6 107.5 Z M292.3 102 L283.2 96.5 L283.2 107.5 Z" fill="#ffffff"/>
<rect x="269" y="133.7" width="18" height="54.5" rx="9" fill="#003f04"/>
<path d="M273.6 142.5 h9 v2 h-9 Z M277.1 139 h2 v9 h-2 Z M273.6 177 h9 v2 h-9 Z" fill="#ffffff"/>
<circle cx="278.1" cy="160.6" r="8.3" fill="#f4f4ff"/>
<g fill="none" stroke="#6a6ad0" stroke-width="0.7">
<circle cx="278.1" cy="160.6" r="8.3"/>
<ellipse cx="278.1" cy="160.6" rx="4.2" ry="8.3"/>
<ellipse cx="278.1" cy="160.6" rx="8.3" ry="3.6"/>
<path d="M278.1 152.3 V168.9 M269.8 160.6 H286.4 M271.5 155.5 Q278.1 158.5 284.7 155.5 M271.5 165.7 Q278.1 162.7 284.7 165.7"/>
</g>
</g>

</svg>
<div class="abs" style="left:250px;top:397px;width:152px;height:20px;background:linear-gradient(90deg,#ffffff 0%,#d3e8cf 22%,#8fc38b 48%,#459746 70%,#127416 86%,#004c04 100%)"></div>
<div class="abs" style="left:252px;top:397px;font-size:12px;color:#111">0</div>
<div class="abs" style="left:342px;top:397px;font-size:12px;color:#111">79,961</div>
<div class="hl" style="top:427px"></div>
<div class="t" style="left:262px;top:438px;font-size:14px">Report View by Selection</div>
<div class="t lnk" style="left:865px;top:438px;font-size:14px">Customize</div>
<div class="hl" style="top:463px"></div>
<div class="abs" style="left:243px;top:464px;width:709px;height:37px;background:#f5f5f5"></div>
<div class="abs" style="left:243px;top:467px;width:60px;text-align:center;font-weight:bold;font-size:14px;line-height:16px;color:#222;white-space:nowrap;">Total:<br>8</div>
<div class="abs" style="left:322px;top:475px;width:108px;text-align:center;font-weight:bold;font-size:14px;line-height:16px;color:#222;white-space:nowrap;text-align:left;">Research Fields</div>
<div class="abs" style="left:449px;top:467px;width:120px;text-align:center;font-weight:bold;font-size:14px;line-height:16px;color:#222;white-space:nowrap;">Web of Science<br>Documents</div>
<div class="abs" style="left:600px;top:475px;width:50px;text-align:center;font-weight:bold;font-size:14px;line-height:16px;color:#222;white-space:nowrap;text-align:left;color:#2a6a92;">Cites</div>
<div class="abs" style="left:637px;top:481px;width:0;height:0;border-left:4px solid transparent;border-right:4px solid transparent;border-top:4px solid #4d8ab0"></div>
<div class="abs" style="left:699px;top:475px;width:80px;text-align:center;font-weight:bold;font-size:14px;line-height:16px;color:#222;white-space:nowrap;text-align:left;">Cites/Paper</div>
<div class="abs" style="left:835px;top:475px;width:80px;text-align:center;font-weight:bold;font-size:14px;line-height:16px;color:#222;white-space:nowrap;text-align:left;">Top Papers</div>
<div class="abs" style="left:243px;top:502px;width:709px;height:33px;background:#fafafa;border-bottom:1px solid #e7e7e7"></div>
<div class="abs" style="left:200px;top:509.0px;width:100px;text-align:right;font-size:14px;line-height:16px;color:#333">1</div>
<div class="abs" style="left:467px;top:509.0px;width:100px;text-align:right;font-size:14px;line-height:16px;color:#333">8,439</div>
<div class="abs" style="left:579px;top:509.0px;width:100px;text-align:right;font-size:14px;line-height:16px;color:#333">89,565</div>
<div class="abs" style="left:696px;top:509.0px;width:100px;text-align:right;font-size:14px;line-height:16px;color:#333">10.61</div>
<div class="abs" style="left:322px;top:504.0px;font-size:14px;line-height:13px;font-weight:bold;color:#1a5c80;white-space:nowrap;letter-spacing:0">CLINICAL<br>MEDICINE</div>
<div class="abs" style="left:846px;top:508.5px;width:100px;height:17px;background:#e1e8f6;border:1px solid #86a6db"></div>
<div class="abs" style="left:847px;top:509.5px;width:98px;height:15px;background:linear-gradient(#93b9ee,#4a83d2)"></div>
<div class="abs" style="left:846px;top:511.5px;width:98px;text-align:right;font-size:11px;line-height:13px;color:#fff;font-weight:bold">66</div>
<div class="abs" style="left:243px;top:535px;width:709px;height:47px;background:#fafafa;border-bottom:1px solid #e7e7e7"></div>
<div class="abs" style="left:200px;top:549.0px;width:100px;text-align:right;font-size:14px;line-height:16px;color:#333">2</div>
<div class="abs" style="left:467px;top:549.0px;width:100px;text-align:right;font-size:14px;line-height:16px;color:#333">1,279</div>
<div class="abs" style="left:579px;top:549.0px;width:100px;text-align:right;font-size:14px;line-height:16px;color:#333">22,626</div>
<div class="abs" style="left:696px;top:549.0px;width:100px;text-align:right;font-size:14px;line-height:16px;color:#333">17.69</div>
<div class="abs" style="left:322px;top:537.5px;font-size:14px;line-height:13px;font-weight:bold;color:#1a5c80;white-space:nowrap;letter-spacing:0">MOLECULAR<br>BIOLOGY &amp;<br>GENETICS</div>
<div class="abs" style="left:846px;top:548.5px;width:100px;height:17px;background:#e1e8f6;border:1px solid #86a6db"></div>
<div class="abs" style="left:847px;top:549.5px;width:16px;height:15px;background:linear-gradient(#93b9ee,#4a83d2)"></div>
<div class="abs" style="left:846px;top:551.5px;width:98px;text-align:right;font-size:11px;line-height:13px;color:#44608f">11</div>
<div class="abs" style="left:243px;top:582px;width:709px;height:34px;background:#fafafa;border-bottom:1px solid #e7e7e7"></div>
<div class="abs" style="left:200px;top:589.5px;width:100px;text-align:right;font-size:14px;line-height:16px;color:#333">3</div>
<div class="abs" style="left:467px;top:589.5px;width:100px;text-align:right;font-size:14px;line-height:16px;color:#333">1,401</div>
<div class="abs" style="left:579px;top:589.5px;width:100px;text-align:right;font-size:14px;line-height:16px;color:#333">16,141</div>
<div class="abs" style="left:696px;top:589.5px;width:100px;text-align:right;font-size:14px;line-height:16px;color:#333">11.52</div>
<div class="abs" style="left:322px;top:584.5px;font-size:14px;line-height:13px;font-weight:bold;color:#1a5c80;white-space:nowrap;letter-spacing:0">BIOLOGY &amp;<br>BIOCHEMISTRY</div>
<div class="abs" style="left:846px;top:589.0px;width:100px;height:17px;background:#e1e8f6;border:1px solid #86a6db"></div>
<div class="abs" style="left:847px;top:590.0px;width:4px;height:15px;background:linear-gradient(#93b9ee,#4a83d2)"></div>
<div class="abs" style="left:846px;top:592.0px;width:98px;text-align:right;font-size:11px;line-height:13px;color:#44608f">3</div>
<div class="abs" style="left:243px;top:616px;width:709px;height:34px;background:#fafafa;border-bottom:1px solid #e7e7e7"></div>
<div class="abs" style="left:200px;top:623.5px;width:100px;text-align:right;font-size:14px;line-height:16px;color:#333">4</div>
<div class="abs" style="left:467px;top:623.5px;width:100px;text-align:right;font-size:14px;line-height:16px;color:#333">1,180</div>
<div class="abs" style="left:579px;top:623.5px;width:100px;text-align:right;font-size:14px;line-height:16px;color:#333">16,120</div>
<div class="abs" style="left:696px;top:623.5px;width:100px;text-align:right;font-size:14px;line-height:16px;color:#333">13.66</div>
<div class="abs" style="left:322px;top:618.5px;font-size:14px;line-height:13px;font-weight:bold;color:#1a5c80;white-space:nowrap;letter-spacing:0">NEUROSCIENCE<br>&amp; BEHAVIOR</div>
<div class="abs" style="left:846px;top:623.0px;width:100px;height:17px;background:#e1e8f6;border:1px solid #86a6db"></div>
<div class="abs" style="left:847px;top:624.0px;width:7px;height:15px;background:linear-gradient(#93b9ee,#4a83d2)"></div>
<div class="abs" style="left:846px;top:626.0px;width:98px;text-align:right;font-size:11px;line-height:13px;color:#44608f">5</div>
<div class="abs" style="left:243px;top:650px;width:709px;height:47px;background:#fafafa;border-bottom:1px solid #e7e7e7"></div>
<div class="abs" style="left:200px;top:664.0px;width:100px;text-align:right;font-size:14px;line-height:16px;color:#333">5</div>
<div class="abs" style="left:467px;top:664.0px;width:100px;text-align:right;font-size:14px;line-height:16px;color:#333">1,277</div>
<div class="abs" style="left:579px;top:664.0px;width:100px;text-align:right;font-size:14px;line-height:16px;color:#333">15,901</div>
<div class="abs" style="left:696px;top:664.0px;width:100px;text-align:right;font-size:14px;line-height:16px;color:#333">12.45</div>
<div class="abs" style="left:322px;top:652.5px;font-size:14px;line-height:13px;font-weight:bold;color:#1a5c80;white-space:nowrap;letter-spacing:0">PHARMACOLOG<br>Y &amp;<br>TOXICOLOGY</div>
<div class="abs" style="left:846px;top:663.5px;width:100px;height:17px;background:#e1e8f6;border:1px solid #86a6db"></div>
<div class="abs" style="left:847px;top:664.5px;width:10px;height:15px;background:linear-gradient(#93b9ee,#4a83d2)"></div>
<div class="abs" style="left:846px;top:666.5px;width:98px;text-align:right;font-size:11px;line-height:13px;color:#44608f">7</div>
<div class="abs" style="left:243px;top:697px;width:709px;height:26px;background:#fafafa;border-bottom:1px solid #e7e7e7"></div>
<div class="abs" style="left:200px;top:700.5px;width:100px;text-align:right;font-size:14px;line-height:16px;color:#333">6</div>
<div class="abs" style="left:467px;top:700.5px;width:100px;text-align:right;font-size:14px;line-height:16px;color:#333">504</div>
<div class="abs" style="left:579px;top:700.5px;width:100px;text-align:right;font-size:14px;line-height:16px;color:#333">6,537</div>
<div class="abs" style="left:696px;top:700.5px;width:100px;text-align:right;font-size:14px;line-height:16px;color:#333">12.97</div>
<div class="abs" style="left:322px;top:703.0px;font-size:14px;line-height:13px;font-weight:bold;color:#1a5c80;white-space:nowrap;letter-spacing:0">IMMUNOLOGY</div>
<div class="abs" style="left:846px;top:700.0px;width:100px;height:17px;background:#e1e8f6;border:1px solid #86a6db"></div>
<div class="abs" style="left:847px;top:701.0px;width:3px;height:15px;background:linear-gradient(#93b9ee,#4a83d2)"></div>
<div class="abs" style="left:846px;top:703.0px;width:98px;text-align:right;font-size:11px;line-height:13px;color:#44608f">2</div>
<div class="abs" style="left:243px;top:723px;width:709px;height:47px;background:#fafafa;border-bottom:1px solid #e7e7e7"></div>
<div class="abs" style="left:200px;top:737.0px;width:100px;text-align:right;font-size:14px;line-height:16px;color:#333">7</div>
<div class="abs" style="left:467px;top:737.0px;width:100px;text-align:right;font-size:14px;line-height:16px;color:#333">156</div>
<div class="abs" style="left:579px;top:737.0px;width:100px;text-align:right;font-size:14px;line-height:16px;color:#333">2,090</div>
<div class="abs" style="left:696px;top:737.0px;width:100px;text-align:right;font-size:14px;line-height:16px;color:#333">13.40</div>
<div class="abs" style="left:322px;top:725.5px;font-size:14px;line-height:13px;font-weight:bold;color:#1a5c80;white-space:nowrap;letter-spacing:0">SOCIAL<br>SCIENCES,<br>GENERAL</div>
<div class="abs" style="left:846px;top:736.5px;width:100px;height:17px;background:#e1e8f6;border:1px solid #86a6db"></div>
<div class="abs" style="left:847px;top:737.5px;width:3px;height:15px;background:linear-gradient(#93b9ee,#4a83d2)"></div>
<div class="abs" style="left:846px;top:739.5px;width:98px;text-align:right;font-size:11px;line-height:13px;color:#44608f">2</div>
<div class="abs" style="left:243px;top:770px;width:709px;height:26px;background:#fafafa;border-bottom:1px solid #e7e7e7"></div>
<div class="abs" style="left:200px;top:773.5px;width:100px;text-align:right;font-size:14px;line-height:16px;color:#333">0</div>
<div class="abs" style="left:467px;top:773.5px;width:100px;text-align:right;font-size:14px;line-height:16px;color:#333">15,967</div>
<div class="abs" style="left:579px;top:773.5px;width:100px;text-align:right;font-size:14px;line-height:16px;color:#333">188,802</div>
<div class="abs" style="left:696px;top:773.5px;width:100px;text-align:right;font-size:14px;line-height:16px;color:#333">11.82</div>
<div class="abs" style="left:322px;top:776.0px;font-size:14px;line-height:13px;font-weight:bold;color:#1a5c80;white-space:nowrap;letter-spacing:0">ALL FIELDS</div>
<div class="abs" style="left:846px;top:773.0px;width:100px;height:17px;background:#e1e8f6;border:1px solid #86a6db"></div>
<div class="abs" style="left:847px;top:774.0px;width:98px;height:15px;background:linear-gradient(#93b9ee,#4a83d2)"></div>
<div class="abs" style="left:846px;top:776.0px;width:98px;text-align:right;font-size:11px;line-height:13px;color:#fff;font-weight:bold">108</div>
</body></html>
